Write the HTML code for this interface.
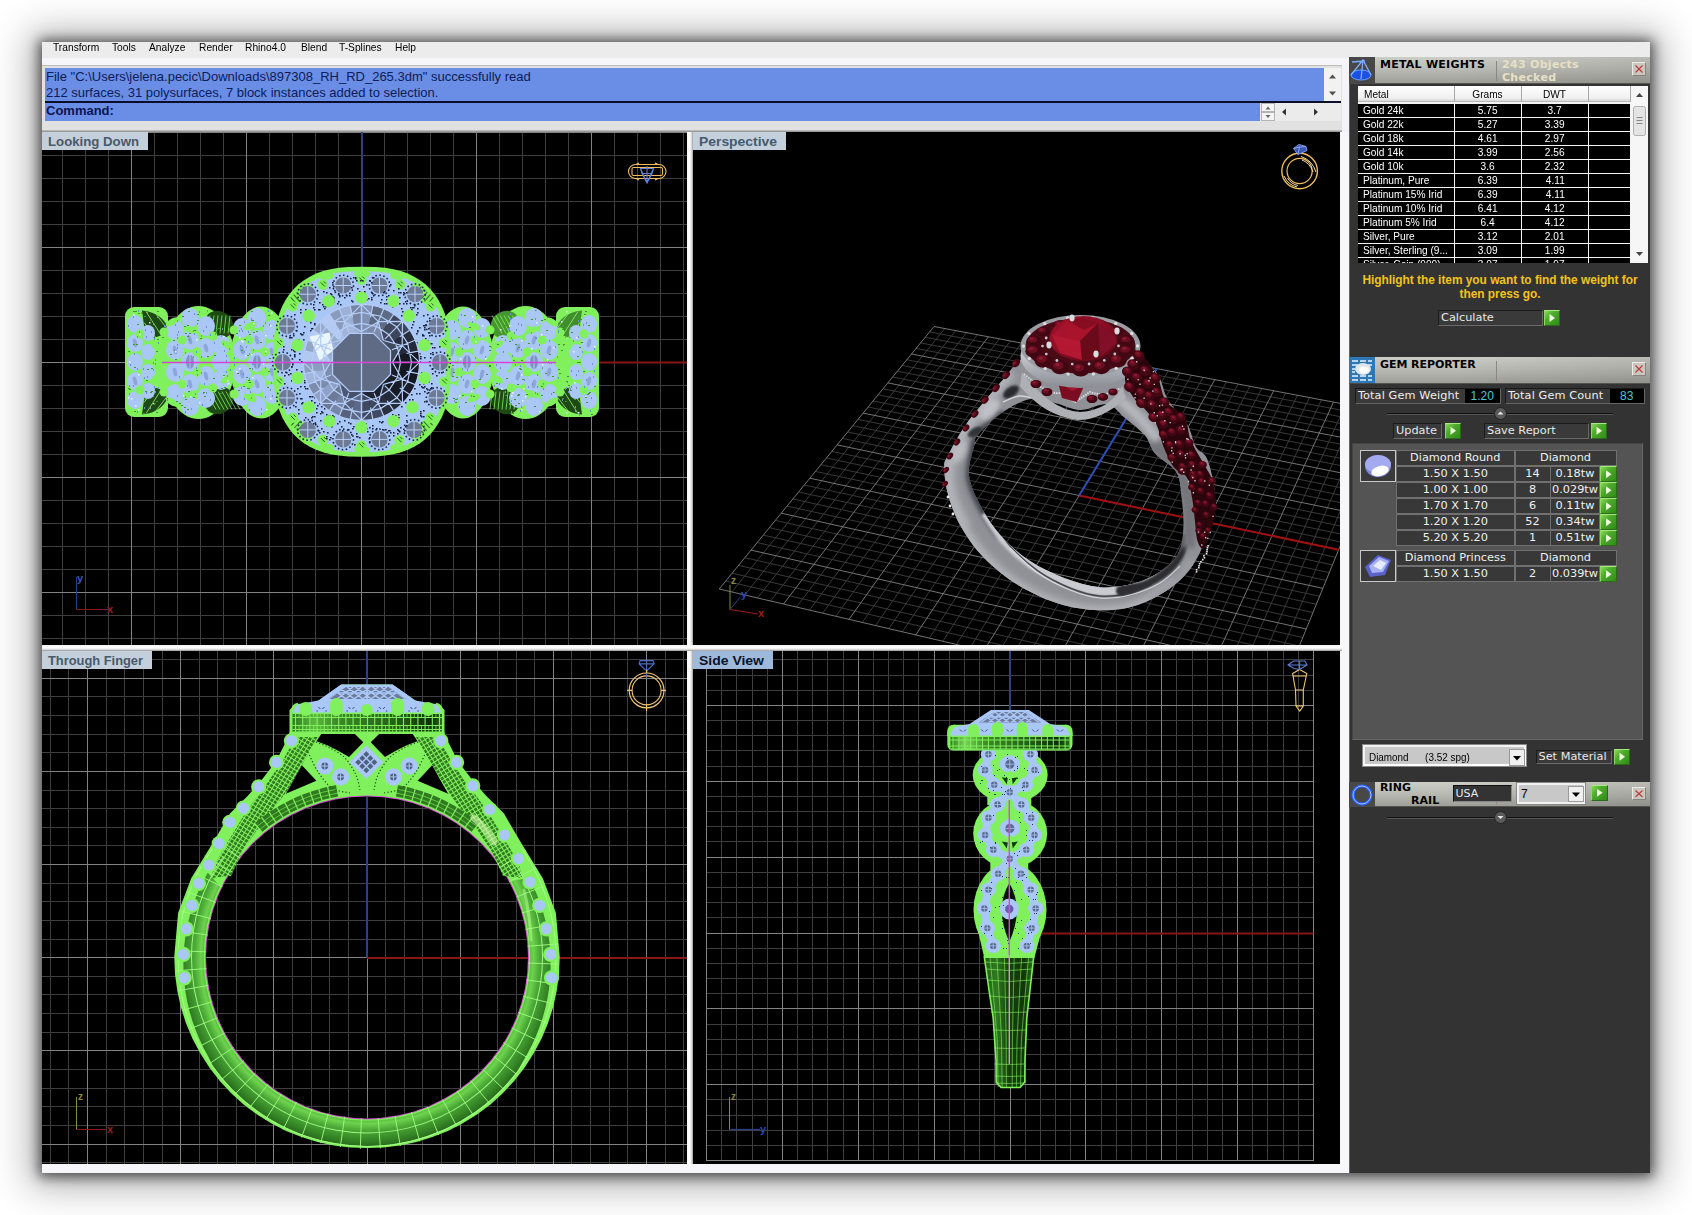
<!DOCTYPE html>
<html lang="en">
<head>
<meta charset="utf-8">
<title>Rhino - Matrix ring model</title>
<style>
*{box-sizing:border-box;margin:0;padding:0}
html,body{width:1692px;height:1215px;background:#fff;overflow:hidden}
body{font-family:"Liberation Sans",sans-serif;position:relative}
body>div,body>svg{position:absolute}
div>div,div>span.p{position:absolute}
#app{left:42px;top:42px;width:1608px;height:1131px;background:#f4f4f8;
 box-shadow:0 1px 12px 3px rgba(0,0,0,.62),0 2px 36px 12px rgba(0,0,0,.3)}
.menu span{position:absolute;top:-2.5px;font-size:11px;line-height:14px;color:#000;white-space:pre;transform-origin:0 50%;transform:scaleX(.93)}
.vp{background:#000;overflow:hidden}
.vplabel{position:absolute;left:0;top:0;height:18px;font-weight:bold;font-size:13px;line-height:18px;color:#44566a;background:#c3cfdb;padding-left:6px;white-space:pre}
.vplabel.act{background:#9fb9dd;color:#0a1020}
svg{display:block}
svg text{font-family:"Liberation Sans",sans-serif}
</style>
</head>
<body>
<div id="app"></div>
<div class="menu" style="left:42px;top:42px;width:1608px;height:16px;background:#ececec"><span style="left:11px">Transform</span><span style="left:70px">Tools</span><span style="left:107px">Analyze</span><span style="left:157px">Render</span><span style="left:203px">Rhino4.0</span><span style="left:259px">Blend</span><span style="left:297px">T-Splines</span><span style="left:353px">Help</span></div>
<div style="left:42px;top:58px;width:1307px;height:7px;background:#f6f6fa"></div>
<div style="left:42px;top:65px;width:1300px;height:66px;background:#e1e1e1;border-top:1px solid #bdbdbd"></div>
<div style="left:45px;top:68px;width:1279px;height:33px;background:#6a8ee6;color:#0c1c58;font-size:13px;line-height:16px;padding:1px 0 0 1px;white-space:pre">File "C:\Users\jelena.pecic\Downloads\897308_RH_RD_265.3dm" successfully read
212 surfaces, 31 polysurfaces, 7 block instances added to selection.</div>
<div style="left:1324px;top:68px;width:17px;height:33px;background:#f2f2f2"><svg width="17" height="33" viewBox="0 0 17 33"><path d="M5 10.500 L8.500 6.500 L12 10.500Z" fill="#505050"/><path d="M5 23.500 L12 23.500 L8.500 27.500Z" fill="#505050"/></svg></div>
<div style="left:45px;top:101px;width:1296px;height:1.5px;background:#0a0e2c"></div>
<div style="left:45px;top:102.5px;width:1215px;height:18.5px;background:#6a8ee6;color:#0a1450;font-size:13px;line-height:16px;font-weight:bold;padding:0 0 0 1px">Command:</div>
<div style="left:1260px;top:102.5px;width:81px;height:18.5px;background:#ebebeb"><svg width="81" height="19" viewBox="0 0 81 19">
<rect x="1.5" y="0.5" width="13" height="8" fill="#f4f4f4" stroke="#b4b4b4"/><rect x="1.5" y="9.5" width="13" height="8" fill="#f4f4f4" stroke="#b4b4b4"/>
<path d="M5.5 6.5 L8 3.5 L10.5 6.5Z" fill="#666"/><path d="M5.5 12 L10.5 12 L8 15Z" fill="#666"/>
<path d="M26 5.5 L26 12.5 L22 9Z" fill="#333"/><path d="M54 5.5 L54 12.5 L58 9Z" fill="#333"/>
<rect x="17" y="0" width="47" height="19" fill="none"/></svg></div>
<div style="left:42px;top:130px;width:1300px;height:2px;background:linear-gradient(#c8c8c8,#8a8a8a)"></div>
<div style="left:42px;top:132px;width:1307px;height:1040px;background:#f7f7fa"></div>
<div style="left:687px;top:132px;width:6px;height:1032px;background:linear-gradient(90deg,#f8f8f8 0,#fff 50%,#c8c8c8 85%,#9a9a9a 100%)"></div>
<div style="left:42px;top:645px;width:1300px;height:6px;background:linear-gradient(#f4f4f4 0,#fff 50%,#c8c8c8 85%,#8c8c8c 100%)"></div>
<svg style="left:42px;top:132px" width="645" height="513" viewBox="42 132 645 513">
<rect x="42" y="132" width="645" height="513" fill="#000"/>
<path d="M62.5 132V645M85.5 132V645M108.5 132V645M154.5 132V645M177.5 132V645M200.5 132V645M223.5 132V645M269.5 132V645M292.5 132V645M315.5 132V645M338.5 132V645M384.5 132V645M407.5 132V645M430.5 132V645M453.5 132V645M499.5 132V645M522.5 132V645M545.5 132V645M568.5 132V645M614.5 132V645M637.5 132V645M660.5 132V645M683.5 132V645M42 155.5H687M42 178.5H687M42 201.5H687M42 224.5H687M42 270.5H687M42 293.5H687M42 316.5H687M42 339.5H687M42 385.5H687M42 408.5H687M42 431.5H687M42 454.5H687M42 500.5H687M42 523.5H687M42 546.5H687M42 569.5H687M42 615.5H687M42 638.5H687" stroke="#3e3e3e" stroke-width="1" fill="none" shape-rendering="crispEdges"/>
<path d="M131.5 132V645M246.5 132V645M361.5 132V645M476.5 132V645M591.5 132V645M42 132.5H687M42 247.5H687M42 362.5H687M42 477.5H687M42 592.5H687" stroke="#838383" stroke-width="1" fill="none" shape-rendering="crispEdges"/>
<path d="M362 132V362" stroke="#2a4284" stroke-width="2"/><path d="M362 362.5H687" stroke="#861818" stroke-width="2"/><rect x="125" y="307" width="43" height="110" rx="9" fill="#80f05c"/><path d="M142 310.5 Q164 312.5 170 332.5 Q158 336.5 146 340.5 Z" fill="#1d4a12"/><path d="M146 311.5 L162 336.5 M154 311.5 L167 328.5 M144 322.5 L158 340.5" stroke="#9cf07c" stroke-width=".8" fill="none"/><path d="M142 414.5 Q164 412.5 170 392.5 Q158 388.5 146 384.5 Z" fill="#1d4a12"/><path d="M146 413.5 L162 388.5 M154 413.5 L167 396.5 M144 402.5 L158 384.5" stroke="#9cf07c" stroke-width=".8" fill="none"/><ellipse cx="198.5" cy="362.5" rx="36.5" ry="56.5" fill="#80f05c"/><ellipse cx="261" cy="362.5" rx="31" ry="56" fill="#80f05c"/><rect x="556" y="307" width="43" height="110" rx="9" fill="#80f05c"/><path d="M582 310.5 Q560 312.5 554 332.5 Q566 336.5 578 340.5 Z" fill="#3f8f2c"/><path d="M578 311.5 L562 336.5 M570 311.5 L557 328.5 M580 322.5 L566 340.5" stroke="#9cf07c" stroke-width=".8" fill="none"/><path d="M582 414.5 Q560 412.5 554 392.5 Q566 388.5 578 384.5 Z" fill="#1d4a12"/><path d="M578 413.5 L562 388.5 M570 413.5 L557 396.5 M580 402.5 L566 384.5" stroke="#9cf07c" stroke-width=".8" fill="none"/><ellipse cx="525.5" cy="362.5" rx="36.5" ry="56.5" fill="#80f05c"/><ellipse cx="463" cy="362.5" rx="31" ry="56" fill="#80f05c"/><ellipse cx="219" cy="324.5" rx="15" ry="13" fill="#1d4a12" transform="rotate(35 219 324.5)"/><path d="M206 315.5L204 333.5M210 315.5L208 333.5M214 315.5L212 333.5M218 315.5L216 333.5M222 315.5L220 333.5M226 315.5L224 333.5M230 315.5L228 333.5" stroke="#80f05c" stroke-width="1" opacity=".8"/><ellipse cx="219" cy="400.5" rx="15" ry="13" fill="#1d4a12" transform="rotate(-35 219 400.5)"/><path d="M206 391.5L216 409.5M210 391.5L220 409.5M214 391.5L224 409.5M218 391.5L228 409.5M222 391.5L232 409.5M226 391.5L236 409.5M230 391.5L240 409.5" stroke="#80f05c" stroke-width="1" opacity=".8"/><ellipse cx="505" cy="324.5" rx="15" ry="13" fill="#46962f" transform="rotate(-35 505 324.5)"/><path d="M492 315.5L502 333.5M496 315.5L506 333.5M500 315.5L510 333.5M504 315.5L514 333.5M508 315.5L518 333.5M512 315.5L522 333.5M516 315.5L526 333.5" stroke="#80f05c" stroke-width="1" opacity=".8"/><ellipse cx="505" cy="400.5" rx="15" ry="13" fill="#1d4a12" transform="rotate(35 505 400.5)"/><path d="M492 391.5L490 409.5M496 391.5L494 409.5M500 391.5L498 409.5M504 391.5L502 409.5M508 391.5L506 409.5M512 391.5L510 409.5M516 391.5L514 409.5" stroke="#80f05c" stroke-width="1" opacity=".8"/><ellipse cx="135" cy="324" rx="8" ry="9" fill="#a9c7f7"/><ellipse cx="135" cy="343" rx="8" ry="9" fill="#a9c7f7"/><ellipse cx="135" cy="362" rx="8" ry="9" fill="#a9c7f7"/><ellipse cx="135" cy="381" rx="8" ry="9" fill="#a9c7f7"/><ellipse cx="135" cy="400" rx="8" ry="9" fill="#a9c7f7"/><ellipse cx="148" cy="333" rx="7" ry="8" fill="#a9c7f7"/><ellipse cx="148" cy="352" rx="7" ry="8" fill="#a9c7f7"/><ellipse cx="148" cy="372" rx="7" ry="8" fill="#a9c7f7"/><ellipse cx="148" cy="391" rx="7" ry="8" fill="#a9c7f7"/><ellipse cx="175" cy="330" rx="9" ry="10" fill="#a9c7f7"/><ellipse cx="175" cy="350" rx="9" ry="10" fill="#a9c7f7"/><ellipse cx="175" cy="372" rx="9" ry="10" fill="#a9c7f7"/><ellipse cx="175" cy="394" rx="9" ry="10" fill="#a9c7f7"/><ellipse cx="190" cy="318" rx="9" ry="10" fill="#a9c7f7"/><ellipse cx="190" cy="340" rx="9" ry="10" fill="#a9c7f7"/><ellipse cx="190" cy="362" rx="9" ry="10" fill="#a9c7f7"/><ellipse cx="190" cy="384" rx="9" ry="10" fill="#a9c7f7"/><ellipse cx="190" cy="406" rx="9" ry="10" fill="#a9c7f7"/><ellipse cx="206" cy="326" rx="9" ry="10" fill="#a9c7f7"/><ellipse cx="206" cy="348" rx="9" ry="10" fill="#a9c7f7"/><ellipse cx="206" cy="376" rx="9" ry="10" fill="#a9c7f7"/><ellipse cx="206" cy="398" rx="9" ry="10" fill="#a9c7f7"/><ellipse cx="221" cy="345" rx="9" ry="10" fill="#a9c7f7"/><ellipse cx="221" cy="362" rx="9" ry="10" fill="#a9c7f7"/><ellipse cx="221" cy="380" rx="9" ry="10" fill="#a9c7f7"/><ellipse cx="242" cy="328" rx="9" ry="10" fill="#a9c7f7"/><ellipse cx="242" cy="350" rx="9" ry="10" fill="#a9c7f7"/><ellipse cx="242" cy="374" rx="9" ry="10" fill="#a9c7f7"/><ellipse cx="242" cy="396" rx="9" ry="10" fill="#a9c7f7"/><ellipse cx="257" cy="318" rx="9" ry="10" fill="#a9c7f7"/><ellipse cx="257" cy="340" rx="9" ry="10" fill="#a9c7f7"/><ellipse cx="257" cy="362" rx="9" ry="10" fill="#a9c7f7"/><ellipse cx="257" cy="384" rx="9" ry="10" fill="#a9c7f7"/><ellipse cx="257" cy="406" rx="9" ry="10" fill="#a9c7f7"/><ellipse cx="272" cy="330" rx="9" ry="10" fill="#a9c7f7"/><ellipse cx="272" cy="352" rx="9" ry="10" fill="#a9c7f7"/><ellipse cx="272" cy="372" rx="9" ry="10" fill="#a9c7f7"/><ellipse cx="272" cy="394" rx="9" ry="10" fill="#a9c7f7"/><ellipse cx="589" cy="324" rx="8" ry="9" fill="#a9c7f7"/><ellipse cx="589" cy="343" rx="8" ry="9" fill="#a9c7f7"/><ellipse cx="589" cy="362" rx="8" ry="9" fill="#a9c7f7"/><ellipse cx="589" cy="381" rx="8" ry="9" fill="#a9c7f7"/><ellipse cx="589" cy="400" rx="8" ry="9" fill="#a9c7f7"/><ellipse cx="576" cy="333" rx="7" ry="8" fill="#a9c7f7"/><ellipse cx="576" cy="352" rx="7" ry="8" fill="#a9c7f7"/><ellipse cx="576" cy="372" rx="7" ry="8" fill="#a9c7f7"/><ellipse cx="576" cy="391" rx="7" ry="8" fill="#a9c7f7"/><ellipse cx="549" cy="330" rx="9" ry="10" fill="#a9c7f7"/><ellipse cx="549" cy="350" rx="9" ry="10" fill="#a9c7f7"/><ellipse cx="549" cy="372" rx="9" ry="10" fill="#a9c7f7"/><ellipse cx="549" cy="394" rx="9" ry="10" fill="#a9c7f7"/><ellipse cx="534" cy="318" rx="9" ry="10" fill="#a9c7f7"/><ellipse cx="534" cy="340" rx="9" ry="10" fill="#a9c7f7"/><ellipse cx="534" cy="362" rx="9" ry="10" fill="#a9c7f7"/><ellipse cx="534" cy="384" rx="9" ry="10" fill="#a9c7f7"/><ellipse cx="534" cy="406" rx="9" ry="10" fill="#a9c7f7"/><ellipse cx="518" cy="326" rx="9" ry="10" fill="#a9c7f7"/><ellipse cx="518" cy="348" rx="9" ry="10" fill="#a9c7f7"/><ellipse cx="518" cy="376" rx="9" ry="10" fill="#a9c7f7"/><ellipse cx="518" cy="398" rx="9" ry="10" fill="#a9c7f7"/><ellipse cx="503" cy="345" rx="9" ry="10" fill="#a9c7f7"/><ellipse cx="503" cy="362" rx="9" ry="10" fill="#a9c7f7"/><ellipse cx="503" cy="380" rx="9" ry="10" fill="#a9c7f7"/><ellipse cx="482" cy="328" rx="9" ry="10" fill="#a9c7f7"/><ellipse cx="482" cy="350" rx="9" ry="10" fill="#a9c7f7"/><ellipse cx="482" cy="374" rx="9" ry="10" fill="#a9c7f7"/><ellipse cx="482" cy="396" rx="9" ry="10" fill="#a9c7f7"/><ellipse cx="467" cy="318" rx="9" ry="10" fill="#a9c7f7"/><ellipse cx="467" cy="340" rx="9" ry="10" fill="#a9c7f7"/><ellipse cx="467" cy="362" rx="9" ry="10" fill="#a9c7f7"/><ellipse cx="467" cy="384" rx="9" ry="10" fill="#a9c7f7"/><ellipse cx="467" cy="406" rx="9" ry="10" fill="#a9c7f7"/><ellipse cx="452" cy="330" rx="9" ry="10" fill="#a9c7f7"/><ellipse cx="452" cy="352" rx="9" ry="10" fill="#a9c7f7"/><ellipse cx="452" cy="372" rx="9" ry="10" fill="#a9c7f7"/><ellipse cx="452" cy="394" rx="9" ry="10" fill="#a9c7f7"/><ellipse cx="162" cy="362" rx="4.5" ry="4.5" fill="#80f05c"/><ellipse cx="182" cy="340" rx="4.5" ry="4.5" fill="#80f05c"/><ellipse cx="182" cy="384" rx="4.5" ry="4.5" fill="#80f05c"/><ellipse cx="197" cy="352" rx="4.5" ry="4.5" fill="#80f05c"/><ellipse cx="197" cy="372" rx="4.5" ry="4.5" fill="#80f05c"/><ellipse cx="213" cy="336" rx="4.5" ry="4.5" fill="#80f05c"/><ellipse cx="213" cy="388" rx="4.5" ry="4.5" fill="#80f05c"/><ellipse cx="164" cy="332" rx="4.5" ry="4.5" fill="#80f05c"/><ellipse cx="164" cy="392" rx="4.5" ry="4.5" fill="#80f05c"/><ellipse cx="234" cy="362" rx="4.5" ry="4.5" fill="#80f05c"/><ellipse cx="249" cy="340" rx="4.5" ry="4.5" fill="#80f05c"/><ellipse cx="249" cy="384" rx="4.5" ry="4.5" fill="#80f05c"/><ellipse cx="265" cy="352" rx="4.5" ry="4.5" fill="#80f05c"/><ellipse cx="265" cy="372" rx="4.5" ry="4.5" fill="#80f05c"/><ellipse cx="234" cy="330" rx="4.5" ry="4.5" fill="#80f05c"/><ellipse cx="234" cy="394" rx="4.5" ry="4.5" fill="#80f05c"/><ellipse cx="140" cy="334" rx="4.5" ry="4.5" fill="#80f05c"/><ellipse cx="140" cy="390" rx="4.5" ry="4.5" fill="#80f05c"/><ellipse cx="156" cy="345" rx="4.5" ry="4.5" fill="#80f05c"/><ellipse cx="156" cy="380" rx="4.5" ry="4.5" fill="#80f05c"/><ellipse cx="172" cy="322" rx="7" ry="3.2" fill="#80f05c" transform="rotate(-30 172 322)"/><ellipse cx="172" cy="402" rx="7" ry="3.2" fill="#80f05c" transform="rotate(30 172 402)"/><ellipse cx="192" cy="330" rx="7" ry="3.2" fill="#80f05c" transform="rotate(20 192 330)"/><ellipse cx="192" cy="394" rx="7" ry="3.2" fill="#80f05c" transform="rotate(-20 192 394)"/><ellipse cx="250" cy="326" rx="7" ry="3.2" fill="#80f05c" transform="rotate(-25 250 326)"/><ellipse cx="250" cy="398" rx="7" ry="3.2" fill="#80f05c" transform="rotate(25 250 398)"/><ellipse cx="227" cy="345" rx="7" ry="3.2" fill="#80f05c" transform="rotate(30 227 345)"/><ellipse cx="227" cy="379" rx="7" ry="3.2" fill="#80f05c" transform="rotate(-30 227 379)"/><ellipse cx="175" cy="350" rx="2" ry="4.5" fill="#8da6d8" transform="rotate(-15 175 350)"/><ellipse cx="175" cy="372" rx="2" ry="4.5" fill="#8da6d8" transform="rotate(-15 175 372)"/><ellipse cx="190" cy="340" rx="2" ry="4.5" fill="#8da6d8" transform="rotate(-15 190 340)"/><ellipse cx="190" cy="384" rx="2" ry="4.5" fill="#8da6d8" transform="rotate(-15 190 384)"/><ellipse cx="206" cy="348" rx="2" ry="4.5" fill="#8da6d8" transform="rotate(-15 206 348)"/><ellipse cx="206" cy="376" rx="2" ry="4.5" fill="#8da6d8" transform="rotate(-15 206 376)"/><ellipse cx="242" cy="350" rx="2" ry="4.5" fill="#8da6d8" transform="rotate(-15 242 350)"/><ellipse cx="242" cy="374" rx="2" ry="4.5" fill="#8da6d8" transform="rotate(-15 242 374)"/><ellipse cx="257" cy="340" rx="2" ry="4.5" fill="#8da6d8" transform="rotate(-15 257 340)"/><ellipse cx="257" cy="384" rx="2" ry="4.5" fill="#8da6d8" transform="rotate(-15 257 384)"/><ellipse cx="272" cy="352" rx="2" ry="4.5" fill="#8da6d8" transform="rotate(-15 272 352)"/><ellipse cx="272" cy="372" rx="2" ry="4.5" fill="#8da6d8" transform="rotate(-15 272 372)"/><ellipse cx="135" cy="343" rx="2" ry="4.5" fill="#8da6d8" transform="rotate(-15 135 343)"/><ellipse cx="135" cy="381" rx="2" ry="4.5" fill="#8da6d8" transform="rotate(-15 135 381)"/><ellipse cx="190" cy="362" rx="4" ry="7" fill="#7f94bf"/><path d="M190 355V369" stroke="#a9c7f7" stroke-width="1"/><ellipse cx="257" cy="362" rx="4" ry="7" fill="#7f94bf"/><path d="M257 355V369" stroke="#a9c7f7" stroke-width="1"/><ellipse cx="562" cy="362" rx="4.5" ry="4.5" fill="#80f05c"/><ellipse cx="542" cy="340" rx="4.5" ry="4.5" fill="#80f05c"/><ellipse cx="542" cy="384" rx="4.5" ry="4.5" fill="#80f05c"/><ellipse cx="527" cy="352" rx="4.5" ry="4.5" fill="#80f05c"/><ellipse cx="527" cy="372" rx="4.5" ry="4.5" fill="#80f05c"/><ellipse cx="511" cy="336" rx="4.5" ry="4.5" fill="#80f05c"/><ellipse cx="511" cy="388" rx="4.5" ry="4.5" fill="#80f05c"/><ellipse cx="560" cy="332" rx="4.5" ry="4.5" fill="#80f05c"/><ellipse cx="560" cy="392" rx="4.5" ry="4.5" fill="#80f05c"/><ellipse cx="490" cy="362" rx="4.5" ry="4.5" fill="#80f05c"/><ellipse cx="475" cy="340" rx="4.5" ry="4.5" fill="#80f05c"/><ellipse cx="475" cy="384" rx="4.5" ry="4.5" fill="#80f05c"/><ellipse cx="459" cy="352" rx="4.5" ry="4.5" fill="#80f05c"/><ellipse cx="459" cy="372" rx="4.5" ry="4.5" fill="#80f05c"/><ellipse cx="490" cy="330" rx="4.5" ry="4.5" fill="#80f05c"/><ellipse cx="490" cy="394" rx="4.5" ry="4.5" fill="#80f05c"/><ellipse cx="584" cy="334" rx="4.5" ry="4.5" fill="#80f05c"/><ellipse cx="584" cy="390" rx="4.5" ry="4.5" fill="#80f05c"/><ellipse cx="568" cy="345" rx="4.5" ry="4.5" fill="#80f05c"/><ellipse cx="568" cy="380" rx="4.5" ry="4.5" fill="#80f05c"/><ellipse cx="552" cy="322" rx="7" ry="3.2" fill="#80f05c" transform="rotate(30 552 322)"/><ellipse cx="552" cy="402" rx="7" ry="3.2" fill="#80f05c" transform="rotate(-30 552 402)"/><ellipse cx="532" cy="330" rx="7" ry="3.2" fill="#80f05c" transform="rotate(-20 532 330)"/><ellipse cx="532" cy="394" rx="7" ry="3.2" fill="#80f05c" transform="rotate(20 532 394)"/><ellipse cx="474" cy="326" rx="7" ry="3.2" fill="#80f05c" transform="rotate(25 474 326)"/><ellipse cx="474" cy="398" rx="7" ry="3.2" fill="#80f05c" transform="rotate(-25 474 398)"/><ellipse cx="497" cy="345" rx="7" ry="3.2" fill="#80f05c" transform="rotate(-30 497 345)"/><ellipse cx="497" cy="379" rx="7" ry="3.2" fill="#80f05c" transform="rotate(30 497 379)"/><ellipse cx="549" cy="350" rx="2" ry="4.5" fill="#8da6d8" transform="rotate(15 549 350)"/><ellipse cx="549" cy="372" rx="2" ry="4.5" fill="#8da6d8" transform="rotate(15 549 372)"/><ellipse cx="534" cy="340" rx="2" ry="4.5" fill="#8da6d8" transform="rotate(15 534 340)"/><ellipse cx="534" cy="384" rx="2" ry="4.5" fill="#8da6d8" transform="rotate(15 534 384)"/><ellipse cx="518" cy="348" rx="2" ry="4.5" fill="#8da6d8" transform="rotate(15 518 348)"/><ellipse cx="518" cy="376" rx="2" ry="4.5" fill="#8da6d8" transform="rotate(15 518 376)"/><ellipse cx="482" cy="350" rx="2" ry="4.5" fill="#8da6d8" transform="rotate(15 482 350)"/><ellipse cx="482" cy="374" rx="2" ry="4.5" fill="#8da6d8" transform="rotate(15 482 374)"/><ellipse cx="467" cy="340" rx="2" ry="4.5" fill="#8da6d8" transform="rotate(15 467 340)"/><ellipse cx="467" cy="384" rx="2" ry="4.5" fill="#8da6d8" transform="rotate(15 467 384)"/><ellipse cx="452" cy="352" rx="2" ry="4.5" fill="#8da6d8" transform="rotate(15 452 352)"/><ellipse cx="452" cy="372" rx="2" ry="4.5" fill="#8da6d8" transform="rotate(15 452 372)"/><ellipse cx="589" cy="343" rx="2" ry="4.5" fill="#8da6d8" transform="rotate(15 589 343)"/><ellipse cx="589" cy="381" rx="2" ry="4.5" fill="#8da6d8" transform="rotate(15 589 381)"/><ellipse cx="534" cy="362" rx="4" ry="7" fill="#7f94bf"/><path d="M534 355V369" stroke="#a9c7f7" stroke-width="1"/><ellipse cx="467" cy="362" rx="4" ry="7" fill="#7f94bf"/><path d="M467 355V369" stroke="#a9c7f7" stroke-width="1"/><clipPath id="shk"><rect x="126" y="308" width="42" height="108" rx="9"/><rect x="556" y="308" width="42" height="108" rx="9"/><ellipse cx="198.500" cy="362.500" rx="35" ry="55"/><ellipse cx="525.500" cy="362.500" rx="35" ry="55"/><ellipse cx="261" cy="362.500" rx="30" ry="54"/><ellipse cx="463" cy="362.500" rx="30" ry="54"/></clipPath><g clip-path="url(#shk)"><path d="M155 363h1v2h-1zM571 370h1v2h-1zM263 325h1v2h-1zM272 395h1v2h-1zM157 316h1v2h-1zM499 383h1v2h-1zM537 386h1v2h-1zM586 322h1v2h-1zM512 339h1v2h-1zM188 335h1v2h-1zM535 318h1v2h-1zM511 400h1v2h-1zM541 410h1v2h-1zM210 334h1v2h-1zM250 310h1v2h-1zM537 393h1v2h-1zM159 331h1v2h-1zM128 325h1v2h-1zM537 374h1v2h-1zM246 346h1v2h-1zM168 320h1v2h-1zM251 397h1v2h-1zM196 367h1v2h-1zM532 383h1v2h-1zM234 364h1v2h-1zM141 312h1v2h-1zM590 410h1v2h-1zM231 333h1v2h-1zM582 351h1v2h-1zM571 386h1v2h-1zM586 379h1v2h-1zM514 332h1v2h-1zM249 353h1v2h-1zM129 393h1v2h-1zM483 405h1v2h-1zM521 324h1v2h-1zM494 404h1v2h-1zM463 379h1v2h-1zM541 411h1v2h-1zM591 397h1v2h-1zM137 368h1v2h-1zM177 337h1v2h-1zM492 338h1v2h-1zM511 337h1v2h-1zM167 399h1v2h-1zM531 357h1v2h-1zM239 321h1v2h-1zM151 331h1v2h-1zM270 389h1v2h-1zM177 395h1v2h-1zM449 413h1v2h-1zM153 323h1v2h-1zM474 336h1v2h-1zM201 356h1v2h-1zM242 411h1v2h-1zM251 319h1v2h-1zM147 312h1v2h-1zM539 350h1v2h-1zM471 395h1v2h-1zM235 313h1v2h-1zM158 387h1v2h-1zM164 325h1v2h-1zM133 316h1v2h-1zM511 411h1v2h-1zM226 371h1v2h-1zM543 383h1v2h-1zM548 361h1v2h-1zM269 324h1v2h-1zM549 340h1v2h-1zM261 408h1v2h-1zM252 363h1v2h-1zM150 407h1v2h-1zM249 378h1v2h-1zM206 326h1v2h-1zM551 362h1v2h-1zM552 414h1v2h-1zM193 330h1v2h-1zM543 388h1v2h-1zM531 332h1v2h-1zM244 351h1v2h-1zM244 321h1v2h-1zM146 392h1v2h-1zM558 377h1v2h-1zM454 321h1v2h-1zM234 313h1v2h-1zM215 333h1v2h-1zM196 351h1v2h-1zM583 324h1v2h-1zM563 344h1v2h-1zM565 388h1v2h-1zM207 310h1v2h-1zM185 411h1v2h-1zM512 355h1v2h-1zM558 330h1v2h-1zM547 313h1v2h-1zM507 390h1v2h-1zM576 374h1v2h-1zM463 343h1v2h-1zM575 410h1v2h-1zM494 318h1v2h-1zM480 335h1v2h-1zM143 368h1v2h-1zM251 318h1v2h-1zM524 379h1v2h-1zM221 335h1v2h-1zM592 363h1v2h-1zM521 406h1v2h-1zM265 322h1v2h-1zM491 409h1v2h-1zM229 348h1v2h-1zM214 342h1v2h-1zM500 367h1v2h-1zM204 383h1v2h-1zM274 369h1v2h-1zM594 348h1v2h-1zM468 331h1v2h-1zM504 411h1v2h-1zM203 392h1v2h-1zM516 329h1v2h-1zM145 398h1v2h-1zM188 355h1v2h-1zM147 376h1v2h-1zM153 362h1v2h-1zM575 406h1v2h-1zM496 407h1v2h-1zM202 404h1v2h-1zM558 331h1v2h-1zM145 329h1v2h-1zM206 392h1v2h-1zM485 356h1v2h-1zM274 310h1v2h-1zM197 374h1v2h-1zM138 310h1v2h-1zM177 347h1v2h-1zM191 408h1v2h-1zM535 392h1v2h-1zM566 387h1v2h-1zM155 391h1v2h-1zM508 328h1v2h-1zM494 385h1v2h-1zM475 357h1v2h-1zM177 334h1v2h-1zM252 368h1v2h-1zM496 364h1v2h-1zM229 402h1v2h-1zM570 388h1v2h-1zM539 344h1v2h-1zM454 400h1v2h-1zM467 369h1v2h-1zM227 375h1v2h-1zM554 325h1v2h-1zM177 407h1v2h-1zM194 313h1v2h-1zM511 403h1v2h-1zM178 331h1v2h-1zM223 343h1v2h-1zM137 336h1v2h-1zM462 348h1v2h-1zM207 310h1v2h-1zM484 412h1v2h-1zM249 409h1v2h-1zM179 376h1v2h-1zM139 331h1v2h-1zM549 362h1v2h-1zM480 377h1v2h-1zM239 330h1v2h-1zM457 398h1v2h-1zM201 335h1v2h-1zM584 386h1v2h-1zM578 320h1v2h-1zM224 350h1v2h-1zM474 405h1v2h-1zM274 375h1v2h-1zM461 376h1v2h-1zM515 364h1v2h-1zM185 413h1v2h-1zM154 338h1v2h-1zM134 353h1v2h-1zM454 346h1v2h-1zM503 351h1v2h-1zM265 367h1v2h-1zM253 349h1v2h-1zM129 385h1v2h-1zM562 399h1v2h-1zM175 324h1v2h-1zM491 346h1v2h-1zM551 393h1v2h-1zM496 398h1v2h-1zM155 359h1v2h-1zM521 349h1v2h-1zM226 355h1v2h-1zM265 396h1v2h-1zM542 367h1v2h-1zM268 310h1v2h-1zM484 320h1v2h-1zM248 341h1v2h-1zM153 369h1v2h-1zM557 356h1v2h-1zM199 311h1v2h-1zM241 387h1v2h-1zM528 386h1v2h-1zM510 318h1v2h-1zM195 393h1v2h-1zM505 339h1v2h-1zM509 403h1v2h-1zM555 346h1v2h-1zM505 391h1v2h-1zM201 372h1v2h-1zM250 391h1v2h-1zM578 336h1v2h-1zM222 328h1v2h-1zM579 414h1v2h-1zM146 336h1v2h-1zM567 381h1v2h-1zM177 344h1v2h-1zM186 360h1v2h-1zM133 385h1v2h-1zM144 407h1v2h-1zM193 356h1v2h-1zM194 333h1v2h-1zM462 368h1v2h-1zM535 337h1v2h-1zM226 360h1v2h-1zM248 331h1v2h-1zM154 386h1v2h-1zM230 369h1v2h-1zM220 318h1v2h-1zM153 395h1v2h-1zM536 337h1v2h-1zM517 348h1v2h-1zM130 364h1v2h-1zM137 411h1v2h-1zM213 320h1v2h-1zM510 313h1v2h-1zM455 330h1v2h-1zM185 352h1v2h-1zM520 365h1v2h-1zM568 391h1v2h-1zM240 345h1v2h-1zM509 399h1v2h-1zM565 336h1v2h-1zM144 377h1v2h-1zM573 340h1v2h-1zM197 323h1v2h-1zM265 352h1v2h-1zM273 335h1v2h-1zM261 413h1v2h-1zM489 326h1v2h-1zM535 356h1v2h-1zM472 321h1v2h-1zM576 387h1v2h-1zM459 406h1v2h-1zM578 370h1v2h-1zM520 410h1v2h-1zM174 349h1v2h-1zM509 327h1v2h-1zM593 376h1v2h-1zM271 382h1v2h-1zM594 370h1v2h-1zM177 320h1v2h-1zM241 328h1v2h-1zM215 412h1v2h-1zM185 396h1v2h-1zM242 330h1v2h-1zM458 319h1v2h-1zM518 323h1v2h-1zM519 394h1v2h-1zM234 357h1v2h-1zM243 373h1v2h-1zM210 399h1v2h-1zM158 342h1v2h-1zM187 385h1v2h-1zM189 339h1v2h-1zM244 398h1v2h-1zM461 314h1v2h-1zM203 330h1v2h-1zM273 377h1v2h-1z" fill="#6f8fd0"/><path d="M482 325h1.5v1.5h-1.5zM274 383h1.5v1.5h-1.5zM521 409h1.5v1.5h-1.5zM574 382h1.5v1.5h-1.5zM138 409h1.5v1.5h-1.5zM265 335h1.5v1.5h-1.5zM553 347h1.5v1.5h-1.5zM495 321h1.5v1.5h-1.5zM573 351h1.5v1.5h-1.5zM253 323h1.5v1.5h-1.5zM241 340h1.5v1.5h-1.5zM578 412h1.5v1.5h-1.5zM236 371h1.5v1.5h-1.5zM501 388h1.5v1.5h-1.5zM475 341h1.5v1.5h-1.5zM566 311h1.5v1.5h-1.5zM190 396h1.5v1.5h-1.5zM129 361h1.5v1.5h-1.5zM555 408h1.5v1.5h-1.5zM239 337h1.5v1.5h-1.5zM547 359h1.5v1.5h-1.5zM485 358h1.5v1.5h-1.5zM271 312h1.5v1.5h-1.5zM266 409h1.5v1.5h-1.5zM139 334h1.5v1.5h-1.5zM245 355h1.5v1.5h-1.5zM521 340h1.5v1.5h-1.5zM199 402h1.5v1.5h-1.5zM223 336h1.5v1.5h-1.5zM175 351h1.5v1.5h-1.5zM196 339h1.5v1.5h-1.5zM561 321h1.5v1.5h-1.5zM138 374h1.5v1.5h-1.5zM471 391h1.5v1.5h-1.5zM218 413h1.5v1.5h-1.5zM509 325h1.5v1.5h-1.5zM223 375h1.5v1.5h-1.5zM550 314h1.5v1.5h-1.5zM523 388h1.5v1.5h-1.5zM472 316h1.5v1.5h-1.5zM500 329h1.5v1.5h-1.5zM228 383h1.5v1.5h-1.5zM541 334h1.5v1.5h-1.5zM584 314h1.5v1.5h-1.5zM511 395h1.5v1.5h-1.5zM242 341h1.5v1.5h-1.5zM237 324h1.5v1.5h-1.5zM131 398h1.5v1.5h-1.5zM531 348h1.5v1.5h-1.5zM227 380h1.5v1.5h-1.5zM512 392h1.5v1.5h-1.5zM183 395h1.5v1.5h-1.5zM566 412h1.5v1.5h-1.5zM251 354h1.5v1.5h-1.5zM542 364h1.5v1.5h-1.5zM553 316h1.5v1.5h-1.5zM576 337h1.5v1.5h-1.5zM128 397h1.5v1.5h-1.5zM459 395h1.5v1.5h-1.5zM522 400h1.5v1.5h-1.5zM135 405h1.5v1.5h-1.5zM149 322h1.5v1.5h-1.5zM241 319h1.5v1.5h-1.5zM521 374h1.5v1.5h-1.5zM460 358h1.5v1.5h-1.5zM239 368h1.5v1.5h-1.5zM525 396h1.5v1.5h-1.5zM265 351h1.5v1.5h-1.5zM496 399h1.5v1.5h-1.5zM270 325h1.5v1.5h-1.5zM133 314h1.5v1.5h-1.5zM539 411h1.5v1.5h-1.5zM594 346h1.5v1.5h-1.5zM585 396h1.5v1.5h-1.5zM263 363h1.5v1.5h-1.5zM270 398h1.5v1.5h-1.5zM252 377h1.5v1.5h-1.5zM153 403h1.5v1.5h-1.5zM225 409h1.5v1.5h-1.5zM536 322h1.5v1.5h-1.5z" fill="#eef6ff"/><path d="M170 354h2v1h-2zM185 333h2v1h-2zM584 314h2v1h-2zM146 380h2v1h-2zM456 377h2v1h-2zM182 316h2v1h-2zM153 404h2v1h-2zM185 399h2v1h-2zM489 365h2v1h-2zM507 413h2v1h-2zM505 395h2v1h-2zM249 382h2v1h-2zM223 375h2v1h-2zM521 360h2v1h-2zM502 318h2v1h-2zM553 392h2v1h-2zM497 344h2v1h-2zM187 325h2v1h-2zM505 325h2v1h-2zM134 411h2v1h-2zM244 339h2v1h-2zM455 402h2v1h-2zM249 368h2v1h-2zM240 317h2v1h-2zM136 344h2v1h-2zM589 392h2v1h-2zM558 369h2v1h-2zM169 316h2v1h-2zM567 376h2v1h-2zM245 311h2v1h-2zM517 384h2v1h-2zM167 398h2v1h-2zM479 379h2v1h-2zM588 325h2v1h-2zM518 403h2v1h-2zM518 394h2v1h-2zM519 368h2v1h-2zM162 337h2v1h-2zM224 387h2v1h-2zM486 374h2v1h-2zM546 330h2v1h-2zM253 332h2v1h-2zM128 388h2v1h-2zM184 407h2v1h-2zM150 320h2v1h-2zM541 395h2v1h-2zM464 315h2v1h-2zM267 387h2v1h-2zM157 339h2v1h-2zM186 362h2v1h-2zM574 399h2v1h-2zM138 313h2v1h-2zM128 351h2v1h-2zM514 399h2v1h-2zM568 385h2v1h-2zM187 336h2v1h-2zM269 358h2v1h-2zM243 410h2v1h-2zM248 380h2v1h-2zM220 393h2v1h-2zM581 342h2v1h-2zM236 333h2v1h-2zM156 351h2v1h-2zM541 386h2v1h-2zM144 316h2v1h-2zM248 388h2v1h-2zM129 389h2v1h-2zM562 329h2v1h-2zM473 396h2v1h-2zM586 402h2v1h-2zM506 378h2v1h-2zM175 359h2v1h-2zM583 371h2v1h-2zM133 344h2v1h-2zM260 342h2v1h-2zM549 354h2v1h-2zM134 367h2v1h-2zM553 319h2v1h-2zM187 409h2v1h-2zM561 350h2v1h-2zM243 386h2v1h-2zM147 369h2v1h-2zM238 390h2v1h-2zM573 324h2v1h-2zM594 386h2v1h-2zM566 381h2v1h-2zM541 320h2v1h-2zM501 337h2v1h-2zM476 315h2v1h-2zM246 377h2v1h-2zM189 333h2v1h-2zM197 320h2v1h-2zM251 311h2v1h-2zM194 330h2v1h-2zM268 315h2v1h-2zM453 398h2v1h-2zM249 334h2v1h-2zM552 376h2v1h-2zM452 376h2v1h-2zM534 406h2v1h-2zM144 399h2v1h-2zM174 320h2v1h-2zM579 362h2v1h-2zM489 346h2v1h-2zM531 319h2v1h-2zM496 383h2v1h-2zM544 319h2v1h-2zM522 379h2v1h-2zM207 356h2v1h-2zM588 393h2v1h-2zM452 362h2v1h-2zM465 402h2v1h-2zM455 399h2v1h-2zM213 378h2v1h-2zM203 392h2v1h-2zM463 363h2v1h-2zM571 332h2v1h-2zM233 387h2v1h-2zM188 391h2v1h-2zM579 347h2v1h-2zM518 347h2v1h-2zM515 405h2v1h-2zM193 397h2v1h-2zM135 311h2v1h-2zM545 373h2v1h-2zM452 365h2v1h-2zM577 317h2v1h-2zM563 344h2v1h-2zM548 313h2v1h-2zM268 371h2v1h-2zM495 314h2v1h-2zM559 373h2v1h-2zM497 405h2v1h-2zM453 372h2v1h-2zM145 391h2v1h-2zM580 319h2v1h-2zM188 311h2v1h-2zM151 391h2v1h-2zM246 411h2v1h-2zM133 311h2v1h-2zM469 327h2v1h-2zM495 409h2v1h-2zM156 412h2v1h-2zM515 344h2v1h-2zM585 397h2v1h-2zM272 354h2v1h-2zM517 395h2v1h-2zM526 394h2v1h-2zM221 388h2v1h-2zM237 373h2v1h-2zM247 388h2v1h-2zM218 328h2v1h-2zM197 314h2v1h-2zM143 413h2v1h-2zM570 390h2v1h-2zM151 368h2v1h-2zM550 404h2v1h-2zM150 392h2v1h-2zM154 325h2v1h-2zM239 325h2v1h-2zM565 401h2v1h-2zM562 398h2v1h-2zM513 360h2v1h-2zM200 338h2v1h-2zM550 321h2v1h-2zM154 403h2v1h-2zM591 414h2v1h-2zM173 340h2v1h-2zM585 311h2v1h-2zM214 355h2v1h-2zM212 390h2v1h-2zM256 331h2v1h-2zM222 316h2v1h-2zM462 395h2v1h-2zM156 401h2v1h-2zM176 401h2v1h-2zM196 370h2v1h-2zM204 396h2v1h-2zM587 394h2v1h-2zM137 324h2v1h-2zM491 408h2v1h-2zM506 402h2v1h-2zM473 388h2v1h-2zM535 310h2v1h-2zM494 401h2v1h-2zM558 344h2v1h-2zM489 366h2v1h-2zM179 403h2v1h-2zM512 413h2v1h-2zM216 329h2v1h-2zM184 326h2v1h-2zM157 311h2v1h-2zM252 320h2v1h-2zM577 356h2v1h-2zM244 314h2v1h-2zM528 343h2v1h-2zM509 341h2v1h-2zM577 362h2v1h-2zM241 350h2v1h-2zM231 342h2v1h-2zM238 313h2v1h-2zM458 337h2v1h-2zM489 350h2v1h-2zM490 402h2v1h-2zM181 405h2v1h-2zM520 369h2v1h-2zM247 355h2v1h-2z" fill="#3d9a2a"/></g><path d="M451 361.7L450.7 376.2L450 386.4L448.7 395.3L446.8 403.3L444.5 410.7L441.7 417.4L438.3 423.6L434.5 429.3L430.2 434.5L425.4 439.1L420 443.2L414.2 446.7L407.9 449.8L401 452.3L393.5 454.2L385.1 455.6L375.6 456.4L362 456.7L348.4 456.4L338.9 455.6L330.5 454.2L323 452.3L316.1 449.8L309.8 446.7L304 443.2L298.6 439.1L293.8 434.5L289.5 429.3L285.7 423.6L282.3 417.4L279.5 410.7L277.2 403.3L275.3 395.3L274 386.4L273.3 376.2L273 361.7L273.3 347.2L274 337L275.3 328.1L277.2 320.1L279.5 312.7L282.3 306L285.7 299.8L289.5 294.1L293.8 288.9L298.6 284.3L304 280.2L309.8 276.7L316.1 273.6L323 271.1L330.5 269.2L338.9 267.8L348.4 267L362 266.7L375.6 267L385.1 267.8L393.5 269.2L401 271.1L407.9 273.6L414.2 276.7L420 280.2L425.4 284.3L430.2 288.9L434.5 294.1L438.3 299.8L441.7 306L444.5 312.7L446.8 320.1L448.7 328.1L450 337L450.7 347.2Z" fill="#80f05c"/><path d="M446.5 361.7L446.2 375.1L445.5 384.6L444.2 393.1L442.5 400.7L440.2 407.8L437.5 414.2L434.3 420.2L430.6 425.7L426.4 430.7L421.7 435.1L416.6 439.1L411.1 442.5L405 445.5L398.4 447.9L391.3 449.8L383.4 451.1L374.5 451.9L362 452.2L349.5 451.9L340.6 451.1L332.7 449.8L325.6 447.9L319 445.5L312.9 442.5L307.4 439.1L302.3 435.1L297.6 430.7L293.4 425.7L289.7 420.2L286.5 414.2L283.8 407.8L281.5 400.7L279.8 393.1L278.5 384.6L277.8 375.1L277.5 361.7L277.8 348.3L278.5 338.8L279.8 330.3L281.5 322.7L283.8 315.6L286.5 309.2L289.7 303.2L293.4 297.7L297.6 292.7L302.3 288.3L307.4 284.3L312.9 280.9L319 277.9L325.6 275.5L332.7 273.6L340.6 272.3L349.5 271.5L362 271.2L374.5 271.5L383.4 272.3L391.3 273.6L398.4 275.5L405 277.9L411.1 280.9L416.6 284.3L421.7 288.3L426.4 292.7L430.6 297.7L434.3 303.2L437.5 309.2L440.2 315.6L442.5 322.7L444.2 330.3L445.5 338.8L446.2 348.3Z" fill="#a9c7f7"/><ellipse cx="300" cy="295.7" rx="16" ry="6" fill="#80f05c" transform="rotate(-42 300 295.7)"/><path d="M292 290.7v9M296 290.7v9M300 290.7v9M304 290.7v9M308 290.7v9" stroke="#1d4a12" stroke-width="1" transform="rotate(-42 300 295.7)" opacity=".8"/><ellipse cx="424" cy="295.7" rx="16" ry="6" fill="#80f05c" transform="rotate(42 424 295.7)"/><path d="M416 290.7v9M420 290.7v9M424 290.7v9M428 290.7v9M432 290.7v9" stroke="#1d4a12" stroke-width="1" transform="rotate(42 424 295.7)" opacity=".8"/><ellipse cx="300" cy="427.7" rx="16" ry="6" fill="#80f05c" transform="rotate(42 300 427.7)"/><path d="M292 422.7v9M296 422.7v9M300 422.7v9M304 422.7v9M308 422.7v9" stroke="#1d4a12" stroke-width="1" transform="rotate(42 300 427.7)" opacity=".8"/><ellipse cx="424" cy="427.7" rx="16" ry="6" fill="#80f05c" transform="rotate(-42 424 427.7)"/><path d="M416 422.7v9M420 422.7v9M424 422.7v9M428 422.7v9M432 422.7v9" stroke="#1d4a12" stroke-width="1" transform="rotate(-42 424 427.7)" opacity=".8"/><ellipse cx="362" cy="273.7" rx="8" ry="4" fill="#80f05c"/><ellipse cx="362" cy="449.7" rx="8" ry="4" fill="#80f05c"/><ellipse cx="326" cy="275.7" rx="8" ry="4" fill="#80f05c"/><ellipse cx="398" cy="275.7" rx="8" ry="4" fill="#80f05c"/><ellipse cx="326" cy="447.7" rx="8" ry="4" fill="#80f05c"/><ellipse cx="398" cy="447.7" rx="8" ry="4" fill="#80f05c"/><circle cx="343.2" cy="285.5" r="10.3" fill="none" stroke="#1a2a4c" stroke-width="1.6" stroke-dasharray="1.6 2.4"/><circle cx="343.2" cy="285.5" r="8.1" fill="#6d7a96"/><path d="M335.1 285.5H351.3M343.2 277.4V293.6" stroke="#b9d0f8" stroke-width="1"/><circle cx="379.5" cy="285.5" r="10.3" fill="none" stroke="#1a2a4c" stroke-width="1.6" stroke-dasharray="1.6 2.4"/><circle cx="379.5" cy="285.5" r="8.1" fill="#6d7a96"/><path d="M371.4 285.5H387.6M379.5 277.4V293.6" stroke="#b9d0f8" stroke-width="1"/><circle cx="415" cy="294.2" r="10.3" fill="none" stroke="#1a2a4c" stroke-width="1.6" stroke-dasharray="1.6 2.4"/><circle cx="415" cy="294.2" r="8.1" fill="#6d7a96"/><path d="M406.9 294.2H423.1M415 286.1V302.3" stroke="#b9d0f8" stroke-width="1"/><circle cx="436.6" cy="326.1" r="10.3" fill="none" stroke="#1a2a4c" stroke-width="1.6" stroke-dasharray="1.6 2.4"/><circle cx="436.6" cy="326.1" r="8.1" fill="#6d7a96"/><path d="M428.5 326.1H444.7M436.6 318V334.2" stroke="#b9d0f8" stroke-width="1"/><circle cx="440" cy="362.4" r="10.3" fill="none" stroke="#1a2a4c" stroke-width="1.6" stroke-dasharray="1.6 2.4"/><circle cx="440" cy="362.4" r="8.1" fill="#6d7a96"/><path d="M431.9 362.4H448.1M440 354.3V370.5" stroke="#b9d0f8" stroke-width="1"/><circle cx="436.6" cy="397.9" r="10.3" fill="none" stroke="#1a2a4c" stroke-width="1.6" stroke-dasharray="1.6 2.4"/><circle cx="436.6" cy="397.9" r="8.1" fill="#6d7a96"/><path d="M428.5 397.9H444.7M436.6 389.8V406" stroke="#b9d0f8" stroke-width="1"/><circle cx="414.1" cy="429.9" r="10.3" fill="none" stroke="#1a2a4c" stroke-width="1.6" stroke-dasharray="1.6 2.4"/><circle cx="414.1" cy="429.9" r="8.1" fill="#6d7a96"/><path d="M406 429.9H422.2M414.1 421.8V438" stroke="#b9d0f8" stroke-width="1"/><circle cx="379.5" cy="439.4" r="10.3" fill="none" stroke="#1a2a4c" stroke-width="1.6" stroke-dasharray="1.6 2.4"/><circle cx="379.5" cy="439.4" r="8.1" fill="#6d7a96"/><path d="M371.4 439.4H387.6M379.5 431.3V447.5" stroke="#b9d0f8" stroke-width="1"/><circle cx="343.2" cy="439.4" r="10.3" fill="none" stroke="#1a2a4c" stroke-width="1.6" stroke-dasharray="1.6 2.4"/><circle cx="343.2" cy="439.4" r="8.1" fill="#6d7a96"/><path d="M335.1 439.4H351.3M343.2 431.3V447.5" stroke="#b9d0f8" stroke-width="1"/><circle cx="307.8" cy="429.9" r="10.3" fill="none" stroke="#1a2a4c" stroke-width="1.6" stroke-dasharray="1.6 2.4"/><circle cx="307.8" cy="429.9" r="8.1" fill="#6d7a96"/><path d="M299.7 429.9H315.9M307.8 421.8V438" stroke="#b9d0f8" stroke-width="1"/><circle cx="287" cy="397.9" r="10.3" fill="none" stroke="#1a2a4c" stroke-width="1.6" stroke-dasharray="1.6 2.4"/><circle cx="287" cy="397.9" r="8.1" fill="#6d7a96"/><path d="M278.9 397.9H295.1M287 389.8V406" stroke="#b9d0f8" stroke-width="1"/><circle cx="282.7" cy="362.4" r="10.3" fill="none" stroke="#1a2a4c" stroke-width="1.6" stroke-dasharray="1.6 2.4"/><circle cx="282.7" cy="362.4" r="8.1" fill="#6d7a96"/><path d="M274.6 362.4H290.8M282.7 354.3V370.5" stroke="#b9d0f8" stroke-width="1"/><circle cx="287" cy="326.1" r="10.3" fill="none" stroke="#1a2a4c" stroke-width="1.6" stroke-dasharray="1.6 2.4"/><circle cx="287" cy="326.1" r="8.1" fill="#6d7a96"/><path d="M278.9 326.1H295.1M287 318V334.2" stroke="#b9d0f8" stroke-width="1"/><circle cx="307.8" cy="294.2" r="10.3" fill="none" stroke="#1a2a4c" stroke-width="1.6" stroke-dasharray="1.6 2.4"/><circle cx="307.8" cy="294.2" r="8.1" fill="#6d7a96"/><path d="M299.7 294.2H315.9M307.8 286.1V302.3" stroke="#b9d0f8" stroke-width="1"/><ellipse cx="361.3" cy="279.5" rx="5.2" ry="5.2" fill="#80f05c"/><path d="M359.3 277.5l4 4M362.3 276.5l2 2" stroke="#1d4a12" stroke-width=".9"/><ellipse cx="399.9" cy="284.5" rx="5.2" ry="5.2" fill="#80f05c"/><path d="M397.9 282.5l4 4M400.9 281.5l2 2" stroke="#1d4a12" stroke-width=".9"/><ellipse cx="430.5" cy="306.4" rx="5.2" ry="5.2" fill="#80f05c"/><path d="M428.5 304.4l4 4M431.5 303.4l2 2" stroke="#1d4a12" stroke-width=".9"/><ellipse cx="444.1" cy="342.9" rx="5.2" ry="5.2" fill="#80f05c"/><path d="M442.1 340.9l4 4M445.1 339.9l2 2" stroke="#1d4a12" stroke-width=".9"/><ellipse cx="444.1" cy="381.6" rx="5.2" ry="5.2" fill="#80f05c"/><path d="M442.1 379.6l4 4M445.1 378.6l2 2" stroke="#1d4a12" stroke-width=".9"/><ellipse cx="430" cy="417.7" rx="5.2" ry="5.2" fill="#80f05c"/><path d="M428 415.7l4 4M431 414.7l2 2" stroke="#1d4a12" stroke-width=".9"/><ellipse cx="399.4" cy="440.1" rx="5.2" ry="5.2" fill="#80f05c"/><path d="M397.4 438.1l4 4M400.4 437.1l2 2" stroke="#1d4a12" stroke-width=".9"/><ellipse cx="361.3" cy="445.4" rx="5.2" ry="5.2" fill="#80f05c"/><path d="M359.3 443.4l4 4M362.3 442.4l2 2" stroke="#1d4a12" stroke-width=".9"/><ellipse cx="322.8" cy="440" rx="5.2" ry="5.2" fill="#80f05c"/><path d="M320.8 438l4 4M323.8 437l2 2" stroke="#1d4a12" stroke-width=".9"/><ellipse cx="292.7" cy="417.7" rx="5.2" ry="5.2" fill="#80f05c"/><path d="M290.7 415.7l4 4M293.7 414.7l2 2" stroke="#1d4a12" stroke-width=".9"/><ellipse cx="279" cy="381.5" rx="5.2" ry="5.2" fill="#80f05c"/><path d="M277 379.5l4 4M280 378.5l2 2" stroke="#1d4a12" stroke-width=".9"/><ellipse cx="279" cy="342.9" rx="5.2" ry="5.2" fill="#80f05c"/><path d="M277 340.9l4 4M280 339.9l2 2" stroke="#1d4a12" stroke-width=".9"/><ellipse cx="292.7" cy="306.4" rx="5.2" ry="5.2" fill="#80f05c"/><path d="M290.7 304.4l4 4M293.7 303.4l2 2" stroke="#1d4a12" stroke-width=".9"/><ellipse cx="322.8" cy="284.5" rx="5.2" ry="5.2" fill="#80f05c"/><path d="M320.8 282.5l4 4M323.8 281.5l2 2" stroke="#1d4a12" stroke-width=".9"/><path d="M400 292h1.6v1.6h-1.6zM348 422h1.6v1.6h-1.6zM405 301h1.6v1.6h-1.6zM422 381h1.6v1.6h-1.6zM420 413h1.6v1.6h-1.6zM361 298h1.6v1.6h-1.6zM339 295h1.6v1.6h-1.6zM360 280h1.6v1.6h-1.6zM350 423h1.6v1.6h-1.6zM425 338h1.6v1.6h-1.6zM428 328h1.6v1.6h-1.6zM356 280h1.6v1.6h-1.6zM314 309h1.6v1.6h-1.6zM431 387h1.6v1.6h-1.6zM299 393h1.6v1.6h-1.6zM416 333h1.6v1.6h-1.6zM366 299h1.6v1.6h-1.6zM357 436h1.6v1.6h-1.6zM432 347h1.6v1.6h-1.6zM301 343h1.6v1.6h-1.6zM423 387h1.6v1.6h-1.6zM309 396h1.6v1.6h-1.6zM339 421h1.6v1.6h-1.6zM366 428h1.6v1.6h-1.6zM294 354h1.6v1.6h-1.6zM422 334h1.6v1.6h-1.6zM406 420h1.6v1.6h-1.6zM323 431h1.6v1.6h-1.6zM290 337h1.6v1.6h-1.6zM397 429h1.6v1.6h-1.6zM306 319h1.6v1.6h-1.6zM369 280h1.6v1.6h-1.6zM410 406h1.6v1.6h-1.6zM322 412h1.6v1.6h-1.6zM421 386h1.6v1.6h-1.6zM304 382h1.6v1.6h-1.6zM331 426h1.6v1.6h-1.6zM321 411h1.6v1.6h-1.6zM414 388h1.6v1.6h-1.6zM426 401h1.6v1.6h-1.6zM432 352h1.6v1.6h-1.6zM415 407h1.6v1.6h-1.6zM305 388h1.6v1.6h-1.6zM306 345h1.6v1.6h-1.6zM425 324h1.6v1.6h-1.6zM325 306h1.6v1.6h-1.6zM363 426h1.6v1.6h-1.6zM436 375h1.6v1.6h-1.6zM396 303h1.6v1.6h-1.6zM390 432h1.6v1.6h-1.6zM406 292h1.6v1.6h-1.6zM399 431h1.6v1.6h-1.6zM398 292h1.6v1.6h-1.6zM333 419h1.6v1.6h-1.6zM391 300h1.6v1.6h-1.6zM314 416h1.6v1.6h-1.6zM309 421h1.6v1.6h-1.6zM365 423h1.6v1.6h-1.6zM296 330h1.6v1.6h-1.6zM393 290h1.6v1.6h-1.6zM427 314h1.6v1.6h-1.6zM292 364h1.6v1.6h-1.6zM397 418h1.6v1.6h-1.6zM310 330h1.6v1.6h-1.6zM338 301h1.6v1.6h-1.6zM411 394h1.6v1.6h-1.6zM304 386h1.6v1.6h-1.6zM352 301h1.6v1.6h-1.6zM403 292h1.6v1.6h-1.6zM294 355h1.6v1.6h-1.6zM326 422h1.6v1.6h-1.6zM323 291h1.6v1.6h-1.6zM412 324h1.6v1.6h-1.6zM342 430h1.6v1.6h-1.6zM301 334h1.6v1.6h-1.6zM382 421h1.6v1.6h-1.6zM331 426h1.6v1.6h-1.6zM439 346h1.6v1.6h-1.6zM431 343h1.6v1.6h-1.6zM384 303h1.6v1.6h-1.6zM330 293h1.6v1.6h-1.6zM427 340h1.6v1.6h-1.6zM323 306h1.6v1.6h-1.6zM318 430h1.6v1.6h-1.6zM423 373h1.6v1.6h-1.6zM332 296h1.6v1.6h-1.6zM424 401h1.6v1.6h-1.6zM312 416h1.6v1.6h-1.6zM301 398h1.6v1.6h-1.6zM300 333h1.6v1.6h-1.6zM408 404h1.6v1.6h-1.6zM416 314h1.6v1.6h-1.6zM420 415h1.6v1.6h-1.6zM360 425h1.6v1.6h-1.6zM299 348h1.6v1.6h-1.6zM291 366h1.6v1.6h-1.6zM414 409h1.6v1.6h-1.6zM311 328h1.6v1.6h-1.6zM312 396h1.6v1.6h-1.6zM291 337h1.6v1.6h-1.6zM364 297h1.6v1.6h-1.6zM423 410h1.6v1.6h-1.6zM314 402h1.6v1.6h-1.6zM430 343h1.6v1.6h-1.6zM371 297h1.6v1.6h-1.6zM371 299h1.6v1.6h-1.6zM367 431h1.6v1.6h-1.6zM432 368h1.6v1.6h-1.6zM376 428h1.6v1.6h-1.6zM417 312h1.6v1.6h-1.6zM410 307h1.6v1.6h-1.6zM429 320h1.6v1.6h-1.6zM398 430h1.6v1.6h-1.6zM321 428h1.6v1.6h-1.6zM329 287h1.6v1.6h-1.6zM409 410h1.6v1.6h-1.6zM355 277h1.6v1.6h-1.6zM351 300h1.6v1.6h-1.6zM314 323h1.6v1.6h-1.6zM289 337h1.6v1.6h-1.6zM421 416h1.6v1.6h-1.6zM333 301h1.6v1.6h-1.6zM385 429h1.6v1.6h-1.6zM399 297h1.6v1.6h-1.6zM405 402h1.6v1.6h-1.6zM420 413h1.6v1.6h-1.6zM389 430h1.6v1.6h-1.6zM317 405h1.6v1.6h-1.6zM411 309h1.6v1.6h-1.6zM333 286h1.6v1.6h-1.6zM416 342h1.6v1.6h-1.6zM328 415h1.6v1.6h-1.6zM380 302h1.6v1.6h-1.6zM393 435h1.6v1.6h-1.6zM333 297h1.6v1.6h-1.6zM301 371h1.6v1.6h-1.6zM399 303h1.6v1.6h-1.6zM412 307h1.6v1.6h-1.6zM419 393h1.6v1.6h-1.6zM312 328h1.6v1.6h-1.6zM393 423h1.6v1.6h-1.6zM292 376h1.6v1.6h-1.6zM311 406h1.6v1.6h-1.6zM332 415h1.6v1.6h-1.6zM284 383h1.6v1.6h-1.6zM420 379h1.6v1.6h-1.6zM331 302h1.6v1.6h-1.6zM351 434h1.6v1.6h-1.6zM356 436h1.6v1.6h-1.6zM283 346h1.6v1.6h-1.6zM420 358h1.6v1.6h-1.6zM414 304h1.6v1.6h-1.6zM313 304h1.6v1.6h-1.6zM320 413h1.6v1.6h-1.6zM429 332h1.6v1.6h-1.6zM357 288h1.6v1.6h-1.6zM318 309h1.6v1.6h-1.6zM298 339h1.6v1.6h-1.6zM422 387h1.6v1.6h-1.6zM326 438h1.6v1.6h-1.6zM296 369h1.6v1.6h-1.6zM364 428h1.6v1.6h-1.6zM326 414h1.6v1.6h-1.6zM297 382h1.6v1.6h-1.6zM303 332h1.6v1.6h-1.6zM390 416h1.6v1.6h-1.6zM341 426h1.6v1.6h-1.6zM351 287h1.6v1.6h-1.6zM422 335h1.6v1.6h-1.6zM424 325h1.6v1.6h-1.6zM416 393h1.6v1.6h-1.6zM315 424h1.6v1.6h-1.6zM424 391h1.6v1.6h-1.6zM413 321h1.6v1.6h-1.6zM359 423h1.6v1.6h-1.6zM394 419h1.6v1.6h-1.6zM344 297h1.6v1.6h-1.6zM311 400h1.6v1.6h-1.6zM300 312h1.6v1.6h-1.6zM324 308h1.6v1.6h-1.6zM353 277h1.6v1.6h-1.6zM314 324h1.6v1.6h-1.6zM390 284h1.6v1.6h-1.6zM329 415h1.6v1.6h-1.6zM388 430h1.6v1.6h-1.6zM413 307h1.6v1.6h-1.6zM417 330h1.6v1.6h-1.6zM327 432h1.6v1.6h-1.6zM322 304h1.6v1.6h-1.6zM333 299h1.6v1.6h-1.6zM424 386h1.6v1.6h-1.6zM431 383h1.6v1.6h-1.6zM327 424h1.6v1.6h-1.6zM310 322h1.6v1.6h-1.6zM305 375h1.6v1.6h-1.6zM424 327h1.6v1.6h-1.6zM420 356h1.6v1.6h-1.6zM305 309h1.6v1.6h-1.6zM333 417h1.6v1.6h-1.6zM395 415h1.6v1.6h-1.6zM368 298h1.6v1.6h-1.6zM388 295h1.6v1.6h-1.6zM292 343h1.6v1.6h-1.6zM293 335h1.6v1.6h-1.6zM309 320h1.6v1.6h-1.6zM358 294h1.6v1.6h-1.6zM372 293h1.6v1.6h-1.6zM373 277h1.6v1.6h-1.6zM300 381h1.6v1.6h-1.6zM283 349h1.6v1.6h-1.6zM401 406h1.6v1.6h-1.6zM290 373h1.6v1.6h-1.6zM371 292h1.6v1.6h-1.6zM424 357h1.6v1.6h-1.6zM364 298h1.6v1.6h-1.6zM421 372h1.6v1.6h-1.6zM426 388h1.6v1.6h-1.6zM303 339h1.6v1.6h-1.6zM423 335h1.6v1.6h-1.6zM398 414h1.6v1.6h-1.6zM355 278h1.6v1.6h-1.6zM392 414h1.6v1.6h-1.6zM373 295h1.6v1.6h-1.6zM430 353h1.6v1.6h-1.6zM319 309h1.6v1.6h-1.6zM383 292h1.6v1.6h-1.6zM326 436h1.6v1.6h-1.6zM420 411h1.6v1.6h-1.6zM428 392h1.6v1.6h-1.6zM298 409h1.6v1.6h-1.6zM427 389h1.6v1.6h-1.6zM295 406h1.6v1.6h-1.6zM429 335h1.6v1.6h-1.6zM372 428h1.6v1.6h-1.6zM356 433h1.6v1.6h-1.6zM369 427h1.6v1.6h-1.6zM366 284h1.6v1.6h-1.6zM404 430h1.6v1.6h-1.6zM405 312h1.6v1.6h-1.6zM362 280h1.6v1.6h-1.6zM348 429h1.6v1.6h-1.6zM400 427h1.6v1.6h-1.6zM306 320h1.6v1.6h-1.6zM313 423h1.6v1.6h-1.6zM402 311h1.6v1.6h-1.6zM344 420h1.6v1.6h-1.6zM423 416h1.6v1.6h-1.6zM405 426h1.6v1.6h-1.6zM412 399h1.6v1.6h-1.6zM337 303h1.6v1.6h-1.6zM319 432h1.6v1.6h-1.6zM419 353h1.6v1.6h-1.6zM369 441h1.6v1.6h-1.6zM340 304h1.6v1.6h-1.6zM299 359h1.6v1.6h-1.6zM307 388h1.6v1.6h-1.6zM441 372h1.6v1.6h-1.6zM330 437h1.6v1.6h-1.6zM412 411h1.6v1.6h-1.6zM406 415h1.6v1.6h-1.6zM393 432h1.6v1.6h-1.6zM406 425h1.6v1.6h-1.6zM301 361h1.6v1.6h-1.6zM320 420h1.6v1.6h-1.6zM419 327h1.6v1.6h-1.6zM417 308h1.6v1.6h-1.6zM353 426h1.6v1.6h-1.6zM356 424h1.6v1.6h-1.6zM428 381h1.6v1.6h-1.6zM302 402h1.6v1.6h-1.6zM324 408h1.6v1.6h-1.6zM334 290h1.6v1.6h-1.6zM294 341h1.6v1.6h-1.6zM332 282h1.6v1.6h-1.6zM414 305h1.6v1.6h-1.6zM309 402h1.6v1.6h-1.6zM311 407h1.6v1.6h-1.6zM310 396h1.6v1.6h-1.6zM419 361h1.6v1.6h-1.6zM300 309h1.6v1.6h-1.6zM359 437h1.6v1.6h-1.6zM316 408h1.6v1.6h-1.6zM381 422h1.6v1.6h-1.6zM403 294h1.6v1.6h-1.6zM411 327h1.6v1.6h-1.6zM339 296h1.6v1.6h-1.6zM319 302h1.6v1.6h-1.6zM329 439h1.6v1.6h-1.6zM403 303h1.6v1.6h-1.6zM294 314h1.6v1.6h-1.6zM369 437h1.6v1.6h-1.6zM359 291h1.6v1.6h-1.6zM291 349h1.6v1.6h-1.6zM333 299h1.6v1.6h-1.6zM313 307h1.6v1.6h-1.6zM354 444h1.6v1.6h-1.6zM288 374h1.6v1.6h-1.6zM294 351h1.6v1.6h-1.6zM372 425h1.6v1.6h-1.6zM424 329h1.6v1.6h-1.6zM293 350h1.6v1.6h-1.6zM386 299h1.6v1.6h-1.6zM397 433h1.6v1.6h-1.6zM291 380h1.6v1.6h-1.6zM398 288h1.6v1.6h-1.6zM401 315h1.6v1.6h-1.6zM305 417h1.6v1.6h-1.6zM386 303h1.6v1.6h-1.6zM398 417h1.6v1.6h-1.6zM414 403h1.6v1.6h-1.6zM384 291h1.6v1.6h-1.6zM304 380h1.6v1.6h-1.6zM298 413h1.6v1.6h-1.6zM338 293h1.6v1.6h-1.6zM286 372h1.6v1.6h-1.6zM365 296h1.6v1.6h-1.6zM333 298h1.6v1.6h-1.6zM299 353h1.6v1.6h-1.6zM316 412h1.6v1.6h-1.6zM319 403h1.6v1.6h-1.6zM419 384h1.6v1.6h-1.6zM349 295h1.6v1.6h-1.6zM333 421h1.6v1.6h-1.6zM392 306h1.6v1.6h-1.6zM382 429h1.6v1.6h-1.6zM321 406h1.6v1.6h-1.6zM300 386h1.6v1.6h-1.6zM346 295h1.6v1.6h-1.6zM301 403h1.6v1.6h-1.6zM386 296h1.6v1.6h-1.6zM308 411h1.6v1.6h-1.6zM417 331h1.6v1.6h-1.6zM434 347h1.6v1.6h-1.6zM311 417h1.6v1.6h-1.6zM333 416h1.6v1.6h-1.6zM364 291h1.6v1.6h-1.6zM293 349h1.6v1.6h-1.6zM423 315h1.6v1.6h-1.6zM432 373h1.6v1.6h-1.6zM295 378h1.6v1.6h-1.6zM397 301h1.6v1.6h-1.6zM284 375h1.6v1.6h-1.6zM297 388h1.6v1.6h-1.6zM326 292h1.6v1.6h-1.6zM314 397h1.6v1.6h-1.6zM331 294h1.6v1.6h-1.6zM371 282h1.6v1.6h-1.6zM408 406h1.6v1.6h-1.6zM409 399h1.6v1.6h-1.6zM363 286h1.6v1.6h-1.6zM430 388h1.6v1.6h-1.6zM431 388h1.6v1.6h-1.6zM300 398h1.6v1.6h-1.6zM404 315h1.6v1.6h-1.6zM326 425h1.6v1.6h-1.6zM352 428h1.6v1.6h-1.6zM337 423h1.6v1.6h-1.6zM406 303h1.6v1.6h-1.6zM294 356h1.6v1.6h-1.6zM423 383h1.6v1.6h-1.6zM401 308h1.6v1.6h-1.6zM379 421h1.6v1.6h-1.6zM297 345h1.6v1.6h-1.6zM294 378h1.6v1.6h-1.6zM304 326h1.6v1.6h-1.6zM381 299h1.6v1.6h-1.6zM423 325h1.6v1.6h-1.6zM423 383h1.6v1.6h-1.6zM296 347h1.6v1.6h-1.6zM302 334h1.6v1.6h-1.6z" fill="#16233f"/><ellipse cx="328.6" cy="301.1" rx="6.2" ry="6.2" fill="#80f05c"/><ellipse cx="361.4" cy="297.6" rx="6.2" ry="6.2" fill="#80f05c"/><ellipse cx="393.4" cy="301.1" rx="6.2" ry="6.2" fill="#80f05c"/><ellipse cx="308.7" cy="315.8" rx="6.2" ry="6.2" fill="#80f05c"/><ellipse cx="408.9" cy="315.8" rx="6.2" ry="6.2" fill="#80f05c"/><ellipse cx="297.4" cy="345.2" rx="6.2" ry="6.2" fill="#80f05c"/><ellipse cx="424.5" cy="345.2" rx="6.2" ry="6.2" fill="#80f05c"/><ellipse cx="297.4" cy="378" rx="6.2" ry="6.2" fill="#80f05c"/><ellipse cx="424.5" cy="378" rx="6.2" ry="6.2" fill="#80f05c"/><ellipse cx="308.7" cy="407.4" rx="6.2" ry="6.2" fill="#80f05c"/><ellipse cx="412.4" cy="407.4" rx="6.2" ry="6.2" fill="#80f05c"/><ellipse cx="329.4" cy="421.2" rx="6.2" ry="6.2" fill="#80f05c"/><ellipse cx="361.4" cy="427.3" rx="6.2" ry="6.2" fill="#80f05c"/><ellipse cx="393.4" cy="421.2" rx="6.2" ry="6.2" fill="#80f05c"/><defs><linearGradient id="tg1" x1="0" y1="0" x2="1" y2="0.35"><stop offset="0" stop-color="#a9bfe6"/><stop offset=".3" stop-color="#8c9cbc"/><stop offset=".55" stop-color="#56617a"/><stop offset=".72" stop-color="#1c222e"/><stop offset="1" stop-color="#0c0f16"/></linearGradient><clipPath id="tcl"><circle cx="361.5" cy="362.4" r="58"/></clipPath></defs><circle cx="361.5" cy="362.4" r="58" fill="url(#tg1)"/><g clip-path="url(#tcl)"><path d="M361.5 362.4L420.5 362.4L419.4 350.9Z" fill="rgb(21, 24, 34)"/><path d="M361.5 362.4L419.4 350.9L416 339.8Z" fill="rgb(36, 43, 58)"/><path d="M361.5 362.4L416 339.8L410.6 329.6Z" fill="rgb(40, 46, 61)"/><path d="M361.5 362.4L410.6 329.6L403.2 320.7Z" fill="rgb(60, 70, 91)"/><path d="M361.5 362.4L403.2 320.7L394.3 313.3Z" fill="rgb(62, 71, 92)"/><path d="M361.5 362.4L394.3 313.3L384.1 307.9Z" fill="rgb(94, 106, 134)"/><path d="M361.5 362.4L384.1 307.9L373 304.5Z" fill="rgb(92, 103, 128)"/><path d="M361.5 362.4L373 304.5L361.5 303.4Z" fill="rgb(129, 145, 179)"/><path d="M361.5 362.4L361.5 303.4L350 304.5Z" fill="rgb(119, 133, 162)"/><path d="M361.5 362.4L350 304.5L338.9 307.9Z" fill="rgb(157, 175, 212)"/><path d="M361.5 362.4L338.9 307.9L328.7 313.3Z" fill="rgb(138, 155, 187)"/><path d="M361.5 362.4L328.7 313.3L319.8 320.7Z" fill="rgb(181, 202, 243)"/><path d="M361.5 362.4L319.8 320.7L312.4 329.6Z" fill="rgb(152, 171, 204)"/><path d="M361.5 362.4L312.4 329.6L307 339.8Z" fill="rgb(182, 204, 246)"/><path d="M361.5 362.4L307 339.8L303.6 350.9Z" fill="rgb(148, 166, 199)"/><path d="M361.5 362.4L303.6 350.9L302.5 362.4Z" fill="rgb(176, 199, 240)"/><path d="M361.5 362.4L302.5 362.4L303.6 373.9Z" fill="rgb(139, 158, 192)"/><path d="M361.5 362.4L303.6 373.9L307 385Z" fill="rgb(161, 182, 222)"/><path d="M361.5 362.4L307 385L312.4 395.2Z" fill="rgb(125, 140, 173)"/><path d="M361.5 362.4L312.4 395.2L319.8 404.1Z" fill="rgb(143, 161, 200)"/><path d="M361.5 362.4L319.8 404.1L328.7 411.5Z" fill="rgb(108, 122, 152)"/><path d="M361.5 362.4L328.7 411.5L338.9 416.9Z" fill="rgb(118, 134, 169)"/><path d="M361.5 362.4L338.9 416.9L350 420.3Z" fill="rgb(86, 98, 125)"/><path d="M361.5 362.4L350 420.3L361.5 421.4Z" fill="rgb(91, 105, 135)"/><path d="M361.5 362.4L361.5 421.4L373 420.3Z" fill="rgb(63, 73, 96)"/><path d="M361.5 362.4L373 420.3L384.1 416.9Z" fill="rgb(63, 73, 97)"/><path d="M361.5 362.4L384.1 416.9L394.3 411.5Z" fill="rgb(40, 47, 63)"/><path d="M361.5 362.4L394.3 411.5L403.2 404.1Z" fill="rgb(35, 42, 57)"/><path d="M361.5 362.4L403.2 404.1L410.6 395.2Z" fill="rgb(23, 26, 37)"/><path d="M361.5 362.4L410.6 395.2L416 385Z" fill="rgb(25, 30, 42)"/><path d="M361.5 362.4L416 385L419.4 373.9Z" fill="rgb(19, 23, 31)"/><path d="M361.5 362.4L419.4 373.9L420.5 362.4Z" fill="rgb(21, 25, 34)"/><path d="M392.5 362.3L402.2 345.6L383.5 340.5Z" fill="rgb(70, 81, 103)" opacity=".8"/><path d="M383.4 340.4L378.3 321.7L361.6 331.4Z" fill="rgb(132, 147, 179)" opacity=".8"/><path d="M361.4 331.4L344.7 321.7L339.6 340.4Z" fill="rgb(166, 186, 222)" opacity=".8"/><path d="M339.5 340.5L320.8 345.6L330.5 362.3Z" fill="rgb(151, 170, 207)" opacity=".8"/><path d="M330.5 362.5L320.8 379.2L339.5 384.3Z" fill="rgb(116, 131, 164)" opacity=".8"/><path d="M339.6 384.4L344.7 403.1L361.4 393.4Z" fill="rgb(67, 78, 102)" opacity=".8"/><path d="M361.6 393.4L378.3 403.1L383.4 384.4Z" fill="rgb(24, 29, 40)" opacity=".8"/><path d="M383.5 384.3L402.2 379.2L392.5 362.5Z" fill="rgb(25, 30, 40)" opacity=".8"/><path d="M309.5 336.4 L329.5 332.4 L333.5 350.4 L319.5 360.4Z" fill="#eaf6ff"/><path d="M394.5 362.4L419.5 362.4M392 375L415.1 384.6M384.8 385.7L402.5 403.4M374.1 392.9L383.7 416M361.5 395.4L361.5 420.4M348.9 392.9L339.3 416M338.2 385.7L320.5 403.4M331 375L307.9 384.6M328.5 362.4L303.5 362.4M331 349.8L307.9 340.2M338.2 339.1L320.5 321.4M348.9 331.9L339.3 308.8M361.5 329.4L361.5 304.4M374.1 331.9L383.7 308.8M384.8 339.1L402.5 321.4M392 349.8L415.1 340.2M402.2 379.2L419.5 362.4M402.2 379.2L392.5 362.4M402.2 379.2L402.5 403.4M402.2 379.2L383.4 384.3M378.3 403.1L402.5 403.4M378.3 403.1L383.4 384.3M378.3 403.1L361.5 420.4M378.3 403.1L361.5 393.4M344.7 403.1L361.5 420.4M344.7 403.1L361.5 393.4M344.7 403.1L320.5 403.4M344.7 403.1L339.6 384.3M320.8 379.2L320.5 403.4M320.8 379.2L339.6 384.3M320.8 379.2L303.5 362.4M320.8 379.2L330.5 362.4M320.8 345.6L303.5 362.4M320.8 345.6L330.5 362.4M320.8 345.6L320.5 321.4M320.8 345.6L339.6 340.5M344.7 321.7L320.5 321.4M344.7 321.7L339.6 340.5M344.7 321.7L361.5 304.4M344.7 321.7L361.5 331.4M378.3 321.7L361.5 304.4M378.3 321.7L361.5 331.4M378.3 321.7L402.5 321.4M378.3 321.7L383.4 340.5M402.2 345.6L402.5 321.4M402.2 345.6L383.4 340.5M402.2 345.6L419.5 362.4M402.2 345.6L392.5 362.4M406.6 371.4L418.4 373.7M399.7 388L409.7 394.6M387.1 400.6L393.7 410.6M370.5 407.5L372.8 419.3M352.5 407.5L350.2 419.3M335.9 400.6L329.3 410.6M323.3 388L313.3 394.6M316.4 371.4L304.6 373.7M316.4 353.4L304.6 351.1M323.3 336.8L313.3 330.2M335.9 324.2L329.3 314.2M352.5 317.3L350.2 305.5M370.5 317.3L372.8 305.5M387.1 324.2L393.7 314.2M399.7 336.8L409.7 330.2M406.6 353.4L418.4 351.1M400.5 362.4L397.5 377.3L389.1 390L376.4 398.4L361.5 401.4L346.6 398.4L333.9 390L325.5 377.3L322.5 362.4L325.5 347.5L333.9 334.8L346.6 326.4L361.5 323.4L376.4 326.4L389.1 334.8L397.5 347.5ZM411.5 362.4L407.7 381.5L396.9 397.8L380.6 408.6L361.5 412.4L342.4 408.6L326.1 397.8L315.3 381.5L311.5 362.4L315.3 343.3L326.1 327L342.4 316.2L361.5 312.4L380.6 316.2L396.9 327L407.7 343.3Z" stroke="#b4ccf6" stroke-width="1.2" fill="none"/></g><path d="M349.5 333.4L373.5 333.4L390.5 350.4L390.5 374.4L373.5 391.4L349.5 391.4L332.5 374.4L332.5 350.4Z" fill="#5f6b85" stroke="#b4ccf6" stroke-width="1.3"/><path d="M361.5 304.4V420.4" stroke="#b4ccf6" stroke-width="1.3"/><circle cx="361.5" cy="362.4" r="58" fill="none" stroke="#b4ccf6" stroke-width="1.2"/><path d="M162 362.5H556" stroke="#d545d5" stroke-width="1.6"/><path d="M76.5 577V609.5H108" stroke="#2c3f8c" stroke-width="1" fill="none"/><path d="M76.5 609.5H106" stroke="#8c1818" stroke-width="1"/><text x="77" y="582" font-size="11" fill="#3a57b8" font-weight="bold">y</text><text x="107" y="613" font-size="11" fill="#a01c1c" font-weight="bold">x</text><g fill="none" stroke="#f0bc5c" stroke-width="1.1"><rect x="628.5" y="164.500" width="37.5" height="14" rx="7"/><rect x="632" y="167.500" width="30.5" height="8" rx="1.5"/><path d="M636 164.500l3 -1.500M655 163l3 1.500M636 178.500l3 1.500M655 180l3 -1.500"/></g><path d="M640.5 168.500H653.500L652 173.500L647 183L642 173.500Z M640.500 168.500L647 183L653.500 168.500M647 166V183M642 173.500H652" fill="none" stroke="#5c80d4" stroke-width="1.1"/><rect x="42" y="132" width="106" height="18" fill="#c3cfdb"/><text x="48" y="145.5" font-size="13" font-weight="bold" fill="#465a6e" textLength="91" lengthAdjust="spacingAndGlyphs">Looking Down</text>
</svg>
<svg style="left:693px;top:132px" width="647" height="513" viewBox="693 132 647 513">
<rect x="693" y="132" width="647" height="513" fill="#000"/>
<path d="M731.9 591.9L944.8 328.5M725.7 581L1273.8 708.4M744.8 594.9L955.7 330.6M732.1 573.2L1277.6 699.2M757.6 597.9L966.6 332.6M738.5 565.4L1281.3 690M770.5 601L977.5 334.7M744.8 557.7L1285 681M796.5 607L999.4 338.8M757.2 542.6L1292.2 663.3M809.5 610.1L1010.4 340.9M763.3 535.1L1295.8 654.6M822.6 613.1L1021.5 343M769.3 527.7L1299.3 646M835.8 616.2L1032.6 345.1M775.3 520.4L1302.8 637.5M862.3 622.4L1054.9 349.3M787 506.1L1309.6 620.7M875.6 625.5L1066.1 351.4M792.8 499L1313 612.5M888.9 628.6L1077.3 353.6M798.6 492L1316.3 604.3M902.3 631.8L1088.5 355.7M804.2 485L1319.6 596.3M929.3 638.1L1111.2 360M815.4 471.4L1326.1 580.4M942.9 641.2L1122.5 362.1M820.9 464.7L1329.3 572.6M956.5 644.4L1133.9 364.3M826.4 458L1332.5 564.9M970.2 647.6L1145.4 366.5M831.8 451.4L1335.6 557.2M997.7 654.1L1168.4 370.8M842.4 438.4L1341.7 542.2M1011.5 657.3L1179.9 373M847.6 432L1344.7 534.8M1025.4 660.5L1191.5 375.2M852.8 425.7L1347.7 527.5M1039.3 663.8L1203.1 377.4M858 419.4L1350.7 520.2M1067.3 670.3L1226.5 381.8M868.1 407L1356.5 505.9M1081.4 673.6L1238.2 384M873.1 400.9L1359.4 498.9M1095.6 676.9L1250 386.3M878.1 394.8L1362.3 492M1109.8 680.3L1261.8 388.5M883 388.8L1365.1 485.1M1138.4 687L1285.6 393M892.6 377L1370.6 471.5M1152.8 690.3L1297.5 395.2M897.4 371.2L1373.4 464.8M1167.2 693.7L1309.5 397.5M902.1 365.4L1376.1 458.2M1181.7 697.1L1321.5 399.8M906.8 359.7L1378.8 451.6M1210.9 703.9L1345.6 404.4M916 348.4L1384 438.7M1225.6 707.3L1357.7 406.6M920.6 342.9L1386.6 432.3M1240.3 710.8L1369.9 408.9M925.1 337.3L1389.2 426M1255.1 714.2L1382.1 411.3M929.6 331.9L1391.8 419.8" stroke="#404040" stroke-width=".9" fill="none"/><path d="M719.2 589L934 326.5M719.2 589L1270 717.7M783.5 604L988.4 336.8M751 550.1L1288.6 672.1M849 619.3L1043.7 347.2M781.2 513.2L1306.2 629M915.8 634.9L1099.8 357.8M809.8 478.2L1322.9 588.3M983.9 650.8L1156.9 368.6M837.1 444.9L1338.7 549.7M1053.3 667.1L1214.8 379.6M863.1 413.1L1353.6 513.1M1124.1 683.6L1273.7 390.7M887.8 382.9L1367.9 478.2M1196.3 700.5L1333.5 402.1M911.4 354L1381.4 445.1M1270 717.7L1394.3 413.6M934 326.5L1394.3 413.6" stroke="#808080" stroke-width=".9" fill="none"/><path d="M1079.1 495.5L1338.7 549.7" stroke="#a01010" stroke-width="2"/><path d="M1079.1 495.5L1156.9 368.6" stroke="#2a50b8" stroke-width="2"/><defs>
<linearGradient id="sv1" x1="0" y1="0" x2="1" y2="1"><stop offset="0" stop-color="#d8dade"/><stop offset=".35" stop-color="#9a9da4"/><stop offset=".7" stop-color="#6a6d74"/><stop offset="1" stop-color="#a8abb2"/></linearGradient>
<linearGradient id="sv2" x1="0" y1="0" x2="0" y2="1"><stop offset="0" stop-color="#70737a"/><stop offset=".5" stop-color="#c4c6cc"/><stop offset="1" stop-color="#8a8d94"/></linearGradient>
<linearGradient id="sv3" x1="0" y1="0" x2="1" y2="0"><stop offset="0" stop-color="#b8bac0"/><stop offset=".5" stop-color="#8a8d93"/><stop offset="1" stop-color="#c8cad0"/></linearGradient>
<radialGradient id="rb1" cx=".4" cy=".4" r=".7"><stop offset="0" stop-color="#b41430"/><stop offset=".6" stop-color="#920e26"/><stop offset="1" stop-color="#5e0816"/></radialGradient>
<filter id="bl1" x="-20%" y="-20%" width="140%" height="140%"><feGaussianBlur stdDeviation="1.2"/></filter><filter id="bl2" x="-30%" y="-30%" width="160%" height="160%"><feGaussianBlur stdDeviation="2.5"/></filter><filter id="bl3" x="-30%" y="-30%" width="160%" height="160%"><feGaussianBlur stdDeviation="3.5"/></filter>
</defs><clipPath id="bandclip"><path d="M1022 358.5C1012.8 365.2 1011 370.6 1004.5 378C998 385.4 990 394.5 983.2 402.8C976.4 411.1 969.6 418.8 963.7 427.7C957.8 436.6 951 449.5 947.7 456C944.5 462.5 944.2 460.4 944.2 466.6C944.2 472.8 945.1 483.4 947.7 493.2C950.4 502.9 954.2 514.5 960.1 525.1C966 535.7 973.4 547 983.2 557C993 567 1005.4 577.4 1018.7 585.4C1032 593.4 1048.2 600.8 1063 604.9C1077.8 609 1094 610.5 1107.3 610.2C1120.6 609.9 1131 607.8 1142.8 603.1C1154.6 598.4 1168.8 590.1 1178.2 581.8C1187.7 573.5 1193.6 565.3 1199.5 553.5C1205.4 541.7 1211.3 522.4 1213.7 510.9C1216.1 499.4 1214.9 493.2 1213.7 484.3C1212.5 475.4 1209.5 463.9 1206.6 457.7C1203.6 451.5 1199.3 452.6 1196 447C1192.7 441.4 1191.7 431.8 1187 424C1182.3 416.2 1172.8 408.2 1168 400C1163.2 391.8 1162.8 382.2 1158 375C1153.2 367.8 1148.7 362.5 1139 356.7C1129.3 350.9 1113.2 343.1 1100 340C1086.8 336.9 1073 334.9 1060 338C1047 341.1 1031.2 351.8 1022 358.5ZM1054 402.8C1045.5 401 1038.1 397.5 1029.3 399.3C1020.4 401.1 1009.5 407.6 1000.9 413.5C992.3 419.4 982.3 429.5 977.9 434.8C973.5 440.1 975.8 438.5 974.3 445.3C972.8 452.1 967.8 465.1 969 475.5C970.2 485.9 976.1 497.4 981.4 507.4C986.7 517.4 992.9 526.8 1000.9 535.7C1008.9 544.6 1018.6 553.5 1029.3 560.6C1040 567.7 1053 573.9 1064.8 578.3C1076.6 582.7 1088.7 586.3 1100.2 587.2C1111.7 588.1 1123.9 586.3 1133.9 583.6C1144 580.9 1153.1 576.2 1160.5 571.2C1167.9 566.2 1174.4 560.6 1178.2 553.5C1182 546.4 1182.9 537.9 1183.5 528.7C1184.1 519.5 1183 507.9 1181.8 498.5C1180.6 489.1 1180.8 479.6 1176.4 472.2C1172 464.8 1160.6 459.9 1155.3 453.8C1150 447.7 1150.1 441.5 1144.8 435.3C1139.5 429.1 1130 422.1 1123.7 416.9C1117.4 411.7 1114.3 405.1 1107 404C1099.7 402.9 1088.8 410.2 1080 410C1071.2 409.8 1062.5 404.6 1054 402.8Z" clip-rule="evenodd"/></clipPath><path d="M1022 358.5C1012.8 365.2 1011 370.6 1004.5 378C998 385.4 990 394.5 983.2 402.8C976.4 411.1 969.6 418.8 963.7 427.7C957.8 436.6 951 449.5 947.7 456C944.5 462.5 944.2 460.4 944.2 466.6C944.2 472.8 945.1 483.4 947.7 493.2C950.4 502.9 954.2 514.5 960.1 525.1C966 535.7 973.4 547 983.2 557C993 567 1005.4 577.4 1018.7 585.4C1032 593.4 1048.2 600.8 1063 604.9C1077.8 609 1094 610.5 1107.3 610.2C1120.6 609.9 1131 607.8 1142.8 603.1C1154.6 598.4 1168.8 590.1 1178.2 581.8C1187.7 573.5 1193.6 565.3 1199.5 553.5C1205.4 541.7 1211.3 522.4 1213.7 510.9C1216.1 499.4 1214.9 493.2 1213.7 484.3C1212.5 475.4 1209.5 463.9 1206.6 457.7C1203.6 451.5 1199.3 452.6 1196 447C1192.7 441.4 1191.7 431.8 1187 424C1182.3 416.2 1172.8 408.2 1168 400C1163.2 391.8 1162.8 382.2 1158 375C1153.2 367.8 1148.7 362.5 1139 356.7C1129.3 350.9 1113.2 343.1 1100 340C1086.8 336.9 1073 334.9 1060 338C1047 341.1 1031.2 351.8 1022 358.5ZM1054 402.8C1045.5 401 1038.1 397.5 1029.3 399.3C1020.4 401.1 1009.5 407.6 1000.9 413.5C992.3 419.4 982.3 429.5 977.9 434.8C973.5 440.1 975.8 438.5 974.3 445.3C972.8 452.1 967.8 465.1 969 475.5C970.2 485.9 976.1 497.4 981.4 507.4C986.7 517.4 992.9 526.8 1000.9 535.7C1008.9 544.6 1018.6 553.5 1029.3 560.6C1040 567.7 1053 573.9 1064.8 578.3C1076.6 582.7 1088.7 586.3 1100.2 587.2C1111.7 588.1 1123.9 586.3 1133.9 583.6C1144 580.9 1153.1 576.2 1160.5 571.2C1167.9 566.2 1174.4 560.6 1178.2 553.5C1182 546.4 1182.9 537.9 1183.5 528.7C1184.1 519.5 1183 507.9 1181.8 498.5C1180.6 489.1 1180.8 479.6 1176.4 472.2C1172 464.8 1160.6 459.9 1155.3 453.8C1150 447.7 1150.1 441.5 1144.8 435.3C1139.5 429.1 1130 422.1 1123.7 416.9C1117.4 411.7 1114.3 405.1 1107 404C1099.7 402.9 1088.8 410.2 1080 410C1071.2 409.8 1062.5 404.6 1054 402.8Z" fill="#8f9197" fill-rule="evenodd"/><g clip-path="url(#bandclip)"><path d="M1010 372C1005.8 377 992.5 392.7 985 402C977.5 411.3 970.8 418.7 965 428C959.2 437.3 952.8 449.3 950 458C947.2 466.7 947.7 473 948 480C948.3 487 949.3 492 952 500C954.7 508 962 523.3 964 528" stroke="#b2b4b9" stroke-width="13" fill="none" filter="url(#bl3)"/><path d="M1003 413C999 416.8 984.2 428.2 979 436C973.8 443.8 973.3 452.7 972 460C970.7 467.3 969.3 472.2 971 480C972.7 487.8 977.2 498 982 507C986.8 516 997 529.5 1000 534" stroke="#3e4046" stroke-width="9" fill="none" filter="url(#bl2)"/><path d="M958 525C962 530.5 972 547.5 982 558C992 568.5 1004.5 579.7 1018 588C1031.5 596.3 1048.2 603.8 1063 608C1077.8 612.2 1093.7 613.3 1107 613C1120.3 612.7 1130.8 610.8 1143 606C1155.2 601.2 1173.8 587.7 1180 584" stroke="#b0b2b7" stroke-width="15" fill="none" filter="url(#bl3)"/><path d="M986 512C989 516.3 996.5 529.5 1004 538C1011.5 546.5 1020.7 555.8 1031 563C1041.3 570.2 1054.5 576.5 1066 581C1077.5 585.5 1088.7 589.2 1100 590C1111.3 590.8 1124.3 588.5 1134 586C1143.7 583.5 1154 576.8 1158 575" stroke="#c9cbd0" stroke-width="11" fill="none" filter="url(#bl1)"/><path d="M993 520C995.8 524.3 1002.5 537.5 1010 546C1017.5 554.5 1028 564 1038 571C1048 578 1059.7 583.8 1070 588C1080.3 592.2 1090 595.2 1100 596C1110 596.8 1121.3 595 1130 593C1138.7 591 1148.3 585.5 1152 584" stroke="#2e3036" stroke-width="1.6" fill="none" opacity=".8"/><path d="M1118 586.5C1121.6 584.1 1134.9 583.9 1141.8 581.5C1148.7 579.1 1154.7 575.4 1159.6 572C1164.5 568.6 1168.1 565.1 1171.4 561.4C1174.8 557.7 1177.8 554 1179.7 549.6C1181.6 545.2 1181.6 536.6 1183 535C1184.4 533.4 1187.8 536.5 1188 540C1188.2 543.5 1186.3 551 1184 556C1181.7 561 1178 565.8 1174 570C1170 574.2 1165.3 577.7 1160 581C1154.7 584.3 1148.7 587.5 1142 590C1135.3 592.5 1124 596.6 1120 596C1116 595.4 1114.4 588.9 1118 586.5Z" fill="#2e2f33" filter="url(#bl1)"/><path d="M1010 548C1014.7 552.2 1028 566 1038 573C1048 580 1059.7 585.8 1070 590C1080.3 594.2 1090 597.2 1100 598C1110 598.8 1120 597.5 1130 595C1140 592.5 1151.7 587.8 1160 583C1168.3 578.2 1176.7 568.8 1180 566" stroke="#eceef2" stroke-width="1.1" fill="none" opacity=".75"/><path d="M1150 440C1153.3 443.7 1164 453.7 1170 462C1176 470.3 1182.7 480.3 1186 490C1189.3 499.7 1189.7 510.3 1190 520C1190.3 529.7 1188.3 543.3 1188 548" stroke="#74767c" stroke-width="14" fill="none" filter="url(#bl2)"/><path d="M1120 400C1123.3 403 1133.7 411.3 1140 418C1146.3 424.7 1155 436.3 1158 440" stroke="#b4b6bc" stroke-width="10" fill="none" filter="url(#bl2)"/><path d="M1192 560C1189.7 563.7 1185 575.3 1178 582C1171 588.7 1154.7 597 1150 600" stroke="#9a9ca2" stroke-width="10" fill="none" filter="url(#bl2)"/><ellipse cx="1011" cy="392" rx="9" ry="5" fill="#2a2b2f" transform="rotate(-35 1011 392)" filter="url(#bl1)"/><ellipse cx="975" cy="432" rx="8" ry="4" fill="#333438" transform="rotate(-30 975 432)" filter="url(#bl1)"/><ellipse cx="990" cy="410" rx="13" ry="7" fill="#c9cbd0" transform="rotate(-48 990 410)" filter="url(#bl2)" opacity=".8"/><ellipse cx="960" cy="452" rx="12" ry="6" fill="#c4c6cb" transform="rotate(-62 960 452)" filter="url(#bl2)" opacity=".7"/><path d="M1003 402C1005.8 401 1013.8 396.3 1020 396C1026.2 395.7 1036.7 399.3 1040 400" stroke="#e4e6ea" stroke-width="1.5" fill="none" opacity=".8"/></g><path d="M1022 372 Q1050 410 1080 412 Q1110 410 1122 386 L1126 398 Q1102 420 1078 420 Q1044 416 1020 386Z" fill="#aeb0b6"/><path d="M1024 374 Q1052 398 1062 392 L1075 402 L1090 392 Q1106 398 1120 388" stroke="#d8dae0" stroke-width="2" fill="none" stroke-dasharray="1.5 1"/><g transform="translate(1036 384) rotate(0)"><ellipse rx="5.5" ry="4.1" fill="#430714"/><ellipse cx="-1.1" cy="-1.1" rx="3.3" ry="2.3" fill="#6a0f22"/><ellipse cx="-1.6" cy="-1.6" rx="1.4" ry="0.9" fill="#8e1c32"/></g><g transform="translate(1047 392) rotate(0)"><ellipse rx="5.5" ry="4.1" fill="#430714"/><ellipse cx="-1.1" cy="-1.1" rx="3.3" ry="2.3" fill="#6a0f22"/><ellipse cx="-1.6" cy="-1.6" rx="1.4" ry="0.9" fill="#8e1c32"/></g><g transform="translate(1092 399) rotate(0)"><ellipse rx="5.5" ry="4.1" fill="#430714"/><ellipse cx="-1.1" cy="-1.1" rx="3.3" ry="2.3" fill="#6a0f22"/><ellipse cx="-1.6" cy="-1.6" rx="1.4" ry="0.9" fill="#8e1c32"/></g><g transform="translate(1103 397) rotate(0)"><ellipse rx="5.2" ry="3.9" fill="#430714"/><ellipse cx="-1" cy="-1" rx="3.1" ry="2.1" fill="#6a0f22"/><ellipse cx="-1.6" cy="-1.6" rx="1.3" ry="0.9" fill="#8e1c32"/></g><g transform="translate(1113 392) rotate(0)"><ellipse rx="4.6" ry="3.4" fill="#430714"/><ellipse cx="-0.9" cy="-0.9" rx="2.8" ry="1.9" fill="#6a0f22"/><ellipse cx="-1.4" cy="-1.4" rx="1.1" ry="0.8" fill="#8e1c32"/></g><path d="M1058 382 L1084 386 L1077 402 L1062 398Z" fill="#7c0c22"/><path d="M1058 382 L1084 386 L1072 391Z" fill="#a3162e"/><ellipse cx="1080.5" cy="356" rx="60" ry="32" fill="url(#sv2)"/><ellipse cx="1080.5" cy="346" rx="60" ry="31" fill="#9a9ca2"/><ellipse cx="1080.5" cy="346" rx="55" ry="27.5" fill="#4a0a16"/><g transform="translate(1080.3 322.5) rotate(0)"><ellipse rx="6.6" ry="4.6" fill="#430714"/><ellipse cx="-1.3" cy="-1.3" rx="4" ry="2.5" fill="#6a0f22"/><ellipse cx="-2" cy="-2" rx="1.6" ry="1" fill="#8e1c32"/></g><g transform="translate(1100.9 324.8) rotate(0)"><ellipse rx="6.6" ry="4.6" fill="#430714"/><ellipse cx="-1.3" cy="-1.3" rx="4" ry="2.5" fill="#6a0f22"/><ellipse cx="-2" cy="-2" rx="1.6" ry="1" fill="#8e1c32"/></g><g transform="translate(1059.7 324.9) rotate(0)"><ellipse rx="6.6" ry="4.6" fill="#430714"/><ellipse cx="-1.3" cy="-1.3" rx="4" ry="2.5" fill="#6a0f22"/><ellipse cx="-2" cy="-2" rx="1.6" ry="1" fill="#8e1c32"/></g><g transform="translate(1117.5 331.3) rotate(0)"><ellipse rx="6.6" ry="4.6" fill="#430714"/><ellipse cx="-1.3" cy="-1.3" rx="4" ry="2.5" fill="#6a0f22"/><ellipse cx="-2" cy="-2" rx="1.6" ry="1" fill="#8e1c32"/></g><g transform="translate(1043.2 331.4) rotate(0)"><ellipse rx="6.6" ry="4.6" fill="#430714"/><ellipse cx="-1.3" cy="-1.3" rx="4" ry="2.5" fill="#6a0f22"/><ellipse cx="-2" cy="-2" rx="1.6" ry="1" fill="#8e1c32"/></g><g transform="translate(1126.8 340.7) rotate(0)"><ellipse rx="7.6" ry="5.3" fill="#430714"/><ellipse cx="-1.5" cy="-1.5" rx="4.6" ry="2.9" fill="#6a0f22"/><ellipse cx="-2.3" cy="-2.3" rx="1.9" ry="1.2" fill="#8e1c32"/></g><g transform="translate(1034.1 340.9) rotate(0)"><ellipse rx="7.6" ry="5.3" fill="#430714"/><ellipse cx="-1.5" cy="-1.5" rx="4.6" ry="2.9" fill="#6a0f22"/><ellipse cx="-2.3" cy="-2.3" rx="1.9" ry="1.2" fill="#8e1c32"/></g><g transform="translate(1126.9 351.1) rotate(0)"><ellipse rx="8.9" ry="6.2" fill="#430714"/><ellipse cx="-1.8" cy="-1.8" rx="5.3" ry="3.4" fill="#6a0f22"/><ellipse cx="-2.7" cy="-2.7" rx="2.2" ry="1.4" fill="#8e1c32"/></g><g transform="translate(1034.2 351.3) rotate(0)"><ellipse rx="8.9" ry="6.2" fill="#430714"/><ellipse cx="-1.8" cy="-1.8" rx="5.3" ry="3.4" fill="#6a0f22"/><ellipse cx="-2.7" cy="-2.7" rx="2.2" ry="1.4" fill="#8e1c32"/></g><g transform="translate(1117.8 360.6) rotate(0)"><ellipse rx="8.9" ry="7.1" fill="#430714"/><ellipse cx="-1.8" cy="-1.8" rx="5.3" ry="3.9" fill="#6a0f22"/><ellipse cx="-2.7" cy="-2.7" rx="2.2" ry="1.6" fill="#8e1c32"/></g><g transform="translate(1043.5 360.7) rotate(0)"><ellipse rx="8.9" ry="7.1" fill="#430714"/><ellipse cx="-1.8" cy="-1.8" rx="5.3" ry="3.9" fill="#6a0f22"/><ellipse cx="-2.7" cy="-2.7" rx="2.2" ry="1.6" fill="#8e1c32"/></g><g transform="translate(1101.3 367.1) rotate(0)"><ellipse rx="8.9" ry="7.1" fill="#430714"/><ellipse cx="-1.8" cy="-1.8" rx="5.3" ry="3.9" fill="#6a0f22"/><ellipse cx="-2.7" cy="-2.7" rx="2.2" ry="1.6" fill="#8e1c32"/></g><g transform="translate(1060.1 367.2) rotate(0)"><ellipse rx="8.9" ry="7.1" fill="#430714"/><ellipse cx="-1.8" cy="-1.8" rx="5.3" ry="3.9" fill="#6a0f22"/><ellipse cx="-2.7" cy="-2.7" rx="2.2" ry="1.6" fill="#8e1c32"/></g><g transform="translate(1080.7 369.5) rotate(0)"><ellipse rx="8.9" ry="7.1" fill="#430714"/><ellipse cx="-1.8" cy="-1.8" rx="5.3" ry="3.9" fill="#6a0f22"/><ellipse cx="-2.7" cy="-2.7" rx="2.2" ry="1.6" fill="#8e1c32"/></g><circle cx="1132" cy="358.4" r="1.7" fill="#dcdee2"/><circle cx="1114.8" cy="354" r="1.4" fill="#c4c6cc"/><circle cx="1116.2" cy="368.4" r="1.7" fill="#dcdee2"/><circle cx="1104.3" cy="360.4" r="1.4" fill="#c4c6cc"/><circle cx="1093.4" cy="374" r="1.7" fill="#dcdee2"/><circle cx="1089.1" cy="364" r="1.4" fill="#c4c6cc"/><circle cx="1068.1" cy="374.1" r="1.7" fill="#dcdee2"/><circle cx="1072.2" cy="364.1" r="1.4" fill="#c4c6cc"/><circle cx="1045.2" cy="368.6" r="1.7" fill="#dcdee2"/><circle cx="1056.9" cy="360.5" r="1.4" fill="#c4c6cc"/><circle cx="1029.3" cy="358.6" r="1.7" fill="#dcdee2"/><circle cx="1046.3" cy="354.1" r="1.4" fill="#c4c6cc"/><circle cx="1023.5" cy="346.1" r="1.7" fill="#dcdee2"/><circle cx="1042.5" cy="346.1" r="1.4" fill="#c4c6cc"/><circle cx="1029" cy="333.6" r="1.7" fill="#dcdee2"/><circle cx="1046.2" cy="338" r="1.4" fill="#c4c6cc"/><circle cx="1044.8" cy="323.6" r="1.7" fill="#dcdee2"/><circle cx="1056.7" cy="331.6" r="1.4" fill="#c4c6cc"/><circle cx="1067.6" cy="318" r="1.7" fill="#dcdee2"/><circle cx="1071.9" cy="328" r="1.4" fill="#c4c6cc"/><circle cx="1092.9" cy="317.9" r="1.7" fill="#dcdee2"/><circle cx="1088.8" cy="327.9" r="1.4" fill="#c4c6cc"/><circle cx="1115.8" cy="323.4" r="1.7" fill="#dcdee2"/><circle cx="1104.1" cy="331.5" r="1.4" fill="#c4c6cc"/><circle cx="1131.7" cy="333.4" r="1.7" fill="#dcdee2"/><circle cx="1114.7" cy="337.9" r="1.4" fill="#c4c6cc"/><circle cx="1137.5" cy="345.9" r="1.7" fill="#dcdee2"/><circle cx="1118.5" cy="345.9" r="1.4" fill="#c4c6cc"/><ellipse cx="1083.4" cy="338.5" rx="34" ry="22.5" fill="url(#rb1)"/><path d="M1052 335 L1068 321 L1098 323 L1080 341Z" fill="#a8142c" opacity=".9"/><path d="M1080 341 L1098 323 L1115 335 L1100 356 L1082 360Z" fill="#650a18" opacity=".9"/><path d="M1052 335 L1080 341 L1082 360 L1060 353Z" fill="#b81a34" opacity=".85"/><path d="M1098 323 L1115 335 L1117 343 L1106 352 L1100 356Z" fill="#86102a" opacity=".8"/><path d="M1068 321 L1082 318 L1098 323 L1084 330Z" fill="#7a0c20" opacity=".7"/><ellipse cx="1049" cy="345" rx="2.6" ry="3.4" fill="#d9dbe0"/><ellipse cx="1096" cy="354" rx="2.6" ry="3.4" fill="#d9dbe0"/><ellipse cx="1117" cy="331" rx="2.6" ry="3.4" fill="#d9dbe0"/><ellipse cx="1072" cy="318" rx="2.6" ry="3.4" fill="#d9dbe0"/><g transform="translate(1016 363) rotate(-50)"><ellipse rx="4.8" ry="3.4" fill="#430714"/><ellipse cx="-1" cy="-1" rx="2.9" ry="1.8" fill="#6a0f22"/><ellipse cx="-1.4" cy="-1.4" rx="1.2" ry="0.7" fill="#8e1c32"/></g><g transform="translate(1006 375) rotate(-50)"><ellipse rx="4.6" ry="3.3" fill="#430714"/><ellipse cx="-0.9" cy="-0.9" rx="2.8" ry="1.8" fill="#6a0f22"/><ellipse cx="-1.4" cy="-1.4" rx="1.2" ry="0.7" fill="#8e1c32"/></g><g transform="translate(996 388) rotate(-50)"><ellipse rx="4.5" ry="3.1" fill="#430714"/><ellipse cx="-0.9" cy="-0.9" rx="2.7" ry="1.7" fill="#6a0f22"/><ellipse cx="-1.3" cy="-1.3" rx="1.1" ry="0.7" fill="#8e1c32"/></g><g transform="translate(985 400) rotate(-50)"><ellipse rx="4.3" ry="3" fill="#430714"/><ellipse cx="-0.9" cy="-0.9" rx="2.6" ry="1.7" fill="#6a0f22"/><ellipse cx="-1.3" cy="-1.3" rx="1.1" ry="0.7" fill="#8e1c32"/></g><g transform="translate(975 414) rotate(-50)"><ellipse rx="4.2" ry="2.9" fill="#430714"/><ellipse cx="-0.8" cy="-0.8" rx="2.5" ry="1.6" fill="#6a0f22"/><ellipse cx="-1.3" cy="-1.3" rx="1.1" ry="0.6" fill="#8e1c32"/></g><g transform="translate(966 428) rotate(-50)"><ellipse rx="4" ry="2.8" fill="#430714"/><ellipse cx="-0.8" cy="-0.8" rx="2.4" ry="1.6" fill="#6a0f22"/><ellipse cx="-1.2" cy="-1.2" rx="1" ry="0.6" fill="#8e1c32"/></g><g transform="translate(957 442) rotate(-50)"><ellipse rx="3.9" ry="2.7" fill="#430714"/><ellipse cx="-0.8" cy="-0.8" rx="2.3" ry="1.5" fill="#6a0f22"/><ellipse cx="-1.2" cy="-1.2" rx="1" ry="0.6" fill="#8e1c32"/></g><g transform="translate(950 456) rotate(-50)"><ellipse rx="3.8" ry="2.6" fill="#430714"/><ellipse cx="-0.8" cy="-0.8" rx="2.2" ry="1.4" fill="#6a0f22"/><ellipse cx="-1.1" cy="-1.1" rx="0.9" ry="0.6" fill="#8e1c32"/></g><g transform="translate(946 470) rotate(-50)"><ellipse rx="3.6" ry="2.5" fill="#430714"/><ellipse cx="-0.7" cy="-0.7" rx="2.2" ry="1.4" fill="#6a0f22"/><ellipse cx="-1.1" cy="-1.1" rx="0.9" ry="0.6" fill="#8e1c32"/></g><g transform="translate(945 484) rotate(-50)"><ellipse rx="3.5" ry="2.4" fill="#430714"/><ellipse cx="-0.7" cy="-0.7" rx="2.1" ry="1.3" fill="#6a0f22"/><ellipse cx="-1" cy="-1" rx="0.9" ry="0.5" fill="#8e1c32"/></g><circle cx="948" cy="497" r="1.4" fill="#e8e8ec"/><circle cx="950" cy="506" r="1.4" fill="#e8e8ec"/><circle cx="953" cy="514" r="1.4" fill="#e8e8ec"/><path d="M1139.5 355C1144.8 354.6 1152.2 367.1 1156.6 374.8C1161 382.5 1161.2 394.1 1165.8 401.1C1170.4 408.1 1180.1 410.3 1184.3 416.9C1188.5 423.5 1187.6 432.7 1190.9 440.6C1194.2 448.5 1200.3 457.3 1204 464.3C1207.7 471.3 1211.2 475.3 1213.2 482.8C1215.2 490.3 1216.3 501.2 1215.9 509.1C1215.5 517 1212.6 523.6 1210.6 530.2C1208.6 536.8 1206.2 546.9 1204 548.6C1201.8 550.4 1198.9 545.5 1197.4 540.7C1195.9 535.9 1195.7 526.6 1194.8 519.6C1193.9 512.6 1193.5 505.6 1192.2 498.6C1190.9 491.6 1190 482.8 1186.9 477.5C1183.8 472.2 1177.7 472.3 1173.7 467C1169.8 461.7 1166.1 452.9 1163.2 445.9C1160.3 438.9 1159.7 430.9 1156.6 424.8C1153.5 418.7 1148.5 413.4 1144.8 409C1141.1 404.6 1137.5 403.8 1134.2 398.5C1130.9 393.2 1124.1 384.6 1125 377.4C1125.9 370.1 1134.2 355.4 1139.5 355Z" fill="#2c050c"/><g transform="translate(1127.8 371.9) rotate(25)"><ellipse rx="6" ry="5.1" fill="#430714"/><ellipse cx="-1.2" cy="-1.2" rx="3.6" ry="2.8" fill="#6a0f22"/><ellipse cx="-1.8" cy="-1.8" rx="1.5" ry="1.1" fill="#8e1c32"/></g><g transform="translate(1133.1 364.6) rotate(25)"><ellipse rx="6" ry="5.1" fill="#430714"/><ellipse cx="-1.2" cy="-1.2" rx="3.6" ry="2.8" fill="#6a0f22"/><ellipse cx="-1.8" cy="-1.8" rx="1.5" ry="1.1" fill="#8e1c32"/></g><g transform="translate(1138.7 355.6) rotate(25)"><ellipse rx="6" ry="5.1" fill="#430714"/><ellipse cx="-1.2" cy="-1.2" rx="3.6" ry="2.8" fill="#6a0f22"/><ellipse cx="-1.8" cy="-1.8" rx="1.5" ry="1.1" fill="#8e1c32"/></g><g transform="translate(1129.7 387) rotate(25)"><ellipse rx="5.8" ry="5" fill="#430714"/><ellipse cx="-1.2" cy="-1.2" rx="3.5" ry="2.7" fill="#6a0f22"/><ellipse cx="-1.8" cy="-1.8" rx="1.5" ry="1.1" fill="#8e1c32"/></g><g transform="translate(1136.6 377.5) rotate(25)"><ellipse rx="5.8" ry="5" fill="#430714"/><ellipse cx="-1.2" cy="-1.2" rx="3.5" ry="2.7" fill="#6a0f22"/><ellipse cx="-1.8" cy="-1.8" rx="1.5" ry="1.1" fill="#8e1c32"/></g><g transform="translate(1144.9 370.6) rotate(25)"><ellipse rx="5.8" ry="5" fill="#430714"/><ellipse cx="-1.2" cy="-1.2" rx="3.5" ry="2.7" fill="#6a0f22"/><ellipse cx="-1.8" cy="-1.8" rx="1.5" ry="1.1" fill="#8e1c32"/></g><g transform="translate(1140.8 392.5) rotate(25)"><ellipse rx="5.7" ry="4.8" fill="#430714"/><ellipse cx="-1.1" cy="-1.1" rx="3.4" ry="2.7" fill="#6a0f22"/><ellipse cx="-1.7" cy="-1.7" rx="1.4" ry="1.1" fill="#8e1c32"/></g><g transform="translate(1147.7 383.6) rotate(25)"><ellipse rx="5.7" ry="4.8" fill="#430714"/><ellipse cx="-1.1" cy="-1.1" rx="3.4" ry="2.7" fill="#6a0f22"/><ellipse cx="-1.7" cy="-1.7" rx="1.4" ry="1.1" fill="#8e1c32"/></g><g transform="translate(1155.1 377.9) rotate(25)"><ellipse rx="5.7" ry="4.8" fill="#430714"/><ellipse cx="-1.1" cy="-1.1" rx="3.4" ry="2.7" fill="#6a0f22"/><ellipse cx="-1.7" cy="-1.7" rx="1.4" ry="1.1" fill="#8e1c32"/></g><g transform="translate(1141.4 403.2) rotate(25)"><ellipse rx="5.5" ry="4.7" fill="#430714"/><ellipse cx="-1.1" cy="-1.1" rx="3.3" ry="2.6" fill="#6a0f22"/><ellipse cx="-1.7" cy="-1.7" rx="1.4" ry="1" fill="#8e1c32"/></g><g transform="translate(1149.1 395.9) rotate(25)"><ellipse rx="5.5" ry="4.7" fill="#430714"/><ellipse cx="-1.1" cy="-1.1" rx="3.3" ry="2.6" fill="#6a0f22"/><ellipse cx="-1.7" cy="-1.7" rx="1.4" ry="1" fill="#8e1c32"/></g><g transform="translate(1156.5 392.2) rotate(25)"><ellipse rx="5.5" ry="4.7" fill="#430714"/><ellipse cx="-1.1" cy="-1.1" rx="3.3" ry="2.6" fill="#6a0f22"/><ellipse cx="-1.7" cy="-1.7" rx="1.4" ry="1" fill="#8e1c32"/></g><g transform="translate(1152.1 404.6) rotate(25)"><ellipse rx="5.4" ry="4.6" fill="#430714"/><ellipse cx="-1.1" cy="-1.1" rx="3.2" ry="2.5" fill="#6a0f22"/><ellipse cx="-1.6" cy="-1.6" rx="1.3" ry="1" fill="#8e1c32"/></g><g transform="translate(1164.3 402) rotate(25)"><ellipse rx="5.4" ry="4.6" fill="#430714"/><ellipse cx="-1.1" cy="-1.1" rx="3.2" ry="2.5" fill="#6a0f22"/><ellipse cx="-1.6" cy="-1.6" rx="1.3" ry="1" fill="#8e1c32"/></g><g transform="translate(1153.4 417.4) rotate(25)"><ellipse rx="5.2" ry="4.4" fill="#430714"/><ellipse cx="-1" cy="-1" rx="3.1" ry="2.4" fill="#6a0f22"/><ellipse cx="-1.6" cy="-1.6" rx="1.3" ry="1" fill="#8e1c32"/></g><g transform="translate(1161.5 414.9) rotate(25)"><ellipse rx="5.2" ry="4.4" fill="#430714"/><ellipse cx="-1" cy="-1" rx="3.1" ry="2.4" fill="#6a0f22"/><ellipse cx="-1.6" cy="-1.6" rx="1.3" ry="1" fill="#8e1c32"/></g><g transform="translate(1168.6 411.9) rotate(25)"><ellipse rx="5.2" ry="4.4" fill="#430714"/><ellipse cx="-1" cy="-1" rx="3.1" ry="2.4" fill="#6a0f22"/><ellipse cx="-1.6" cy="-1.6" rx="1.3" ry="1" fill="#8e1c32"/></g><g transform="translate(1163.4 424.1) rotate(25)"><ellipse rx="5" ry="4.3" fill="#430714"/><ellipse cx="-1" cy="-1" rx="3" ry="2.4" fill="#6a0f22"/><ellipse cx="-1.5" cy="-1.5" rx="1.3" ry="0.9" fill="#8e1c32"/></g><g transform="translate(1173.9 419) rotate(25)"><ellipse rx="5" ry="4.3" fill="#430714"/><ellipse cx="-1" cy="-1" rx="3" ry="2.4" fill="#6a0f22"/><ellipse cx="-1.5" cy="-1.5" rx="1.3" ry="0.9" fill="#8e1c32"/></g><g transform="translate(1180.9 416.7) rotate(25)"><ellipse rx="5" ry="4.3" fill="#430714"/><ellipse cx="-1" cy="-1" rx="3" ry="2.4" fill="#6a0f22"/><ellipse cx="-1.5" cy="-1.5" rx="1.3" ry="0.9" fill="#8e1c32"/></g><g transform="translate(1163.6 434.6) rotate(25)"><ellipse rx="4.9" ry="4.1" fill="#430714"/><ellipse cx="-1" cy="-1" rx="2.9" ry="2.3" fill="#6a0f22"/><ellipse cx="-1.5" cy="-1.5" rx="1.2" ry="0.9" fill="#8e1c32"/></g><g transform="translate(1171.8 432) rotate(25)"><ellipse rx="4.9" ry="4.1" fill="#430714"/><ellipse cx="-1" cy="-1" rx="2.9" ry="2.3" fill="#6a0f22"/><ellipse cx="-1.5" cy="-1.5" rx="1.2" ry="0.9" fill="#8e1c32"/></g><g transform="translate(1180.7 430.1) rotate(25)"><ellipse rx="4.9" ry="4.1" fill="#430714"/><ellipse cx="-1" cy="-1" rx="2.9" ry="2.3" fill="#6a0f22"/><ellipse cx="-1.5" cy="-1.5" rx="1.2" ry="0.9" fill="#8e1c32"/></g><g transform="translate(1169.7 444.8) rotate(25)"><ellipse rx="4.7" ry="4" fill="#430714"/><ellipse cx="-0.9" cy="-0.9" rx="2.8" ry="2.2" fill="#6a0f22"/><ellipse cx="-1.4" cy="-1.4" rx="1.2" ry="0.9" fill="#8e1c32"/></g><g transform="translate(1179.6 444) rotate(25)"><ellipse rx="4.7" ry="4" fill="#430714"/><ellipse cx="-0.9" cy="-0.9" rx="2.8" ry="2.2" fill="#6a0f22"/><ellipse cx="-1.4" cy="-1.4" rx="1.2" ry="0.9" fill="#8e1c32"/></g><g transform="translate(1189.1 442.3) rotate(25)"><ellipse rx="4.7" ry="4" fill="#430714"/><ellipse cx="-0.9" cy="-0.9" rx="2.8" ry="2.2" fill="#6a0f22"/><ellipse cx="-1.4" cy="-1.4" rx="1.2" ry="0.9" fill="#8e1c32"/></g><g transform="translate(1171.9 457.6) rotate(25)"><ellipse rx="4.6" ry="3.9" fill="#430714"/><ellipse cx="-0.9" cy="-0.9" rx="2.7" ry="2.1" fill="#6a0f22"/><ellipse cx="-1.4" cy="-1.4" rx="1.1" ry="0.9" fill="#8e1c32"/></g><g transform="translate(1181 453.8) rotate(25)"><ellipse rx="4.6" ry="3.9" fill="#430714"/><ellipse cx="-0.9" cy="-0.9" rx="2.7" ry="2.1" fill="#6a0f22"/><ellipse cx="-1.4" cy="-1.4" rx="1.1" ry="0.9" fill="#8e1c32"/></g><g transform="translate(1191.3 454.8) rotate(25)"><ellipse rx="4.6" ry="3.9" fill="#430714"/><ellipse cx="-0.9" cy="-0.9" rx="2.7" ry="2.1" fill="#6a0f22"/><ellipse cx="-1.4" cy="-1.4" rx="1.1" ry="0.9" fill="#8e1c32"/></g><g transform="translate(1182.5 466.5) rotate(25)"><ellipse rx="4.4" ry="3.7" fill="#430714"/><ellipse cx="-0.9" cy="-0.9" rx="2.6" ry="2.1" fill="#6a0f22"/><ellipse cx="-1.3" cy="-1.3" rx="1.1" ry="0.8" fill="#8e1c32"/></g><g transform="translate(1192 464.6) rotate(25)"><ellipse rx="4.4" ry="3.7" fill="#430714"/><ellipse cx="-0.9" cy="-0.9" rx="2.6" ry="2.1" fill="#6a0f22"/><ellipse cx="-1.3" cy="-1.3" rx="1.1" ry="0.8" fill="#8e1c32"/></g><g transform="translate(1202.5 464.7) rotate(25)"><ellipse rx="4.4" ry="3.7" fill="#430714"/><ellipse cx="-0.9" cy="-0.9" rx="2.6" ry="2.1" fill="#6a0f22"/><ellipse cx="-1.3" cy="-1.3" rx="1.1" ry="0.8" fill="#8e1c32"/></g><g transform="translate(1182 471) rotate(25)"><ellipse rx="4.2" ry="3.6" fill="#430714"/><ellipse cx="-0.8" cy="-0.8" rx="2.5" ry="2" fill="#6a0f22"/><ellipse cx="-1.3" cy="-1.3" rx="1.1" ry="0.8" fill="#8e1c32"/></g><g transform="translate(1193.2 474.3) rotate(25)"><ellipse rx="4.2" ry="3.6" fill="#430714"/><ellipse cx="-0.8" cy="-0.8" rx="2.5" ry="2" fill="#6a0f22"/><ellipse cx="-1.3" cy="-1.3" rx="1.1" ry="0.8" fill="#8e1c32"/></g><g transform="translate(1200.3 474.1) rotate(25)"><ellipse rx="4.2" ry="3.6" fill="#430714"/><ellipse cx="-0.8" cy="-0.8" rx="2.5" ry="2" fill="#6a0f22"/><ellipse cx="-1.3" cy="-1.3" rx="1.1" ry="0.8" fill="#8e1c32"/></g><g transform="translate(1193.2 477.8) rotate(25)"><ellipse rx="4.1" ry="3.5" fill="#430714"/><ellipse cx="-0.8" cy="-0.8" rx="2.4" ry="1.9" fill="#6a0f22"/><ellipse cx="-1.2" cy="-1.2" rx="1" ry="0.8" fill="#8e1c32"/></g><g transform="translate(1201.6 481.4) rotate(25)"><ellipse rx="4.1" ry="3.5" fill="#430714"/><ellipse cx="-0.8" cy="-0.8" rx="2.4" ry="1.9" fill="#6a0f22"/><ellipse cx="-1.2" cy="-1.2" rx="1" ry="0.8" fill="#8e1c32"/></g><g transform="translate(1212.1 481) rotate(25)"><ellipse rx="4.1" ry="3.5" fill="#430714"/><ellipse cx="-0.8" cy="-0.8" rx="2.4" ry="1.9" fill="#6a0f22"/><ellipse cx="-1.2" cy="-1.2" rx="1" ry="0.8" fill="#8e1c32"/></g><g transform="translate(1192 487.3) rotate(25)"><ellipse rx="3.9" ry="3.3" fill="#430714"/><ellipse cx="-0.8" cy="-0.8" rx="2.4" ry="1.8" fill="#6a0f22"/><ellipse cx="-1.2" cy="-1.2" rx="1" ry="0.7" fill="#8e1c32"/></g><g transform="translate(1200.6 490.8) rotate(25)"><ellipse rx="3.9" ry="3.3" fill="#430714"/><ellipse cx="-0.8" cy="-0.8" rx="2.4" ry="1.8" fill="#6a0f22"/><ellipse cx="-1.2" cy="-1.2" rx="1" ry="0.7" fill="#8e1c32"/></g><g transform="translate(1209.4 495.4) rotate(25)"><ellipse rx="3.9" ry="3.3" fill="#430714"/><ellipse cx="-0.8" cy="-0.8" rx="2.4" ry="1.8" fill="#6a0f22"/><ellipse cx="-1.2" cy="-1.2" rx="1" ry="0.7" fill="#8e1c32"/></g><g transform="translate(1198.1 502.7) rotate(25)"><ellipse rx="3.8" ry="3.2" fill="#430714"/><ellipse cx="-0.8" cy="-0.8" rx="2.3" ry="1.8" fill="#6a0f22"/><ellipse cx="-1.1" cy="-1.1" rx="0.9" ry="0.7" fill="#8e1c32"/></g><g transform="translate(1205.5 503.5) rotate(25)"><ellipse rx="3.8" ry="3.2" fill="#430714"/><ellipse cx="-0.8" cy="-0.8" rx="2.3" ry="1.8" fill="#6a0f22"/><ellipse cx="-1.1" cy="-1.1" rx="0.9" ry="0.7" fill="#8e1c32"/></g><g transform="translate(1214.2 506.8) rotate(25)"><ellipse rx="3.8" ry="3.2" fill="#430714"/><ellipse cx="-0.8" cy="-0.8" rx="2.3" ry="1.8" fill="#6a0f22"/><ellipse cx="-1.1" cy="-1.1" rx="0.9" ry="0.7" fill="#8e1c32"/></g><g transform="translate(1195.1 510.1) rotate(25)"><ellipse rx="3.6" ry="3.1" fill="#430714"/><ellipse cx="-0.7" cy="-0.7" rx="2.2" ry="1.7" fill="#6a0f22"/><ellipse cx="-1.1" cy="-1.1" rx="0.9" ry="0.7" fill="#8e1c32"/></g><g transform="translate(1206.2 514.7) rotate(25)"><ellipse rx="3.6" ry="3.1" fill="#430714"/><ellipse cx="-0.7" cy="-0.7" rx="2.2" ry="1.7" fill="#6a0f22"/><ellipse cx="-1.1" cy="-1.1" rx="0.9" ry="0.7" fill="#8e1c32"/></g><g transform="translate(1199.4 524.7) rotate(25)"><ellipse rx="3.4" ry="2.9" fill="#430714"/><ellipse cx="-0.7" cy="-0.7" rx="2.1" ry="1.6" fill="#6a0f22"/><ellipse cx="-1" cy="-1" rx="0.9" ry="0.6" fill="#8e1c32"/></g><g transform="translate(1208.1 530.3) rotate(25)"><ellipse rx="3.4" ry="2.9" fill="#430714"/><ellipse cx="-0.7" cy="-0.7" rx="2.1" ry="1.6" fill="#6a0f22"/><ellipse cx="-1" cy="-1" rx="0.9" ry="0.6" fill="#8e1c32"/></g><g transform="translate(1198.7 530.9) rotate(25)"><ellipse rx="3.4" ry="2.9" fill="#430714"/><ellipse cx="-0.7" cy="-0.7" rx="2" ry="1.6" fill="#6a0f22"/><ellipse cx="-1" cy="-1" rx="0.8" ry="0.6" fill="#8e1c32"/></g><g transform="translate(1203 536) rotate(25)"><ellipse rx="3.4" ry="2.9" fill="#430714"/><ellipse cx="-0.7" cy="-0.7" rx="2" ry="1.6" fill="#6a0f22"/><ellipse cx="-1" cy="-1" rx="0.8" ry="0.6" fill="#8e1c32"/></g><path d="M1209.5 531.8h1.4v1.4h-1.4zM1203.9 531.6h1.4v1.4h-1.4zM1174.9 442.2h1.4v1.4h-1.4zM1184.6 454.7h1.4v1.4h-1.4zM1152.7 370.9h1.4v1.4h-1.4zM1192.6 465.6h1.4v1.4h-1.4zM1158.9 405h1.4v1.4h-1.4zM1212.3 515.7h1.4v1.4h-1.4zM1171.6 461.4h1.4v1.4h-1.4zM1134.3 397h1.4v1.4h-1.4zM1190.4 469.3h1.4v1.4h-1.4zM1181.5 468.6h1.4v1.4h-1.4zM1192 476.9h1.4v1.4h-1.4zM1208.6 484.5h1.4v1.4h-1.4zM1153.6 412.1h1.4v1.4h-1.4zM1171 450.1h1.4v1.4h-1.4zM1192.7 492h1.4v1.4h-1.4zM1204.1 480.3h1.4v1.4h-1.4zM1183.2 428.3h1.4v1.4h-1.4zM1161.7 404.4h1.4v1.4h-1.4zM1174.9 440.9h1.4v1.4h-1.4zM1162.7 441.2h1.4v1.4h-1.4zM1181.8 425.5h1.4v1.4h-1.4zM1164.1 420h1.4v1.4h-1.4zM1150.1 403.2h1.4v1.4h-1.4zM1162.1 411.6h1.4v1.4h-1.4zM1186.4 453.1h1.4v1.4h-1.4zM1179.4 453h1.4v1.4h-1.4zM1187.8 480.8h1.4v1.4h-1.4zM1207.1 537.7h1.4v1.4h-1.4zM1169.5 421.9h1.4v1.4h-1.4zM1201.1 544.3h1.4v1.4h-1.4zM1186.1 438.1h1.4v1.4h-1.4zM1171.3 447.2h1.4v1.4h-1.4zM1148.3 380.1h1.4v1.4h-1.4zM1187.4 438.7h1.4v1.4h-1.4zM1136 361h1.4v1.4h-1.4zM1156.6 415.1h1.4v1.4h-1.4zM1137.5 378.9h1.4v1.4h-1.4zM1143.4 397.5h1.4v1.4h-1.4zM1205 537h1.4v1.4h-1.4zM1180.2 469.2h1.4v1.4h-1.4zM1153.6 383.7h1.4v1.4h-1.4zM1154.7 422h1.4v1.4h-1.4zM1194.3 480.1h1.4v1.4h-1.4zM1184.9 457h1.4v1.4h-1.4zM1143.5 369.5h1.4v1.4h-1.4zM1149.4 377.3h1.4v1.4h-1.4zM1127.2 378.5h1.4v1.4h-1.4zM1134.7 393.4h1.4v1.4h-1.4zM1197.8 531.4h1.4v1.4h-1.4zM1152.1 390.4h1.4v1.4h-1.4zM1172.5 452.7h1.4v1.4h-1.4zM1183 471.6h1.4v1.4h-1.4zM1139.3 383.6h1.4v1.4h-1.4z" fill="#c4c4c8"/><path d="M1207.3 545h1.6v1.6h-1.6zM1206.6 547h1.6v1.6h-1.6zM1206.3 549h1.6v1.6h-1.6zM1206.2 551h1.6v1.6h-1.6zM1205.8 553h1.6v1.6h-1.6zM1203.1 555h1.6v1.6h-1.6zM1203.7 557h1.6v1.6h-1.6zM1202 559h1.6v1.6h-1.6zM1200.1 561h1.6v1.6h-1.6zM1198.8 563h1.6v1.6h-1.6zM1198.2 565h1.6v1.6h-1.6zM1198 567h1.6v1.6h-1.6zM1195.8 569h1.6v1.6h-1.6zM1195.8 571h1.6v1.6h-1.6z" fill="#e8e8ec"/><path d="M730 585V609.5" stroke="#8a8a3a" stroke-width="1"/><path d="M730 609.5L757.800 614" stroke="#a01c1c" stroke-width="1.2"/><path d="M730 609.5L740.500 596.600" stroke="#2c3f8c" stroke-width="1"/><text x="731" y="584" font-size="10" fill="#8a8a3a" font-weight="bold">z</text><text x="741" y="598" font-size="11" fill="#2a4cb0" font-weight="bold">y</text><text x="758" y="617" font-size="11" fill="#a01c1c" font-weight="bold">x</text><g fill="none" stroke="#f0bc5c"><circle cx="1299.6" cy="171" r="17.8" stroke-width="1.4"/><circle cx="1299.6" cy="171" r="12.6" stroke-width="1.2"/><path d="M1301 156.500 Q1312 160 1316 172 M1302 160 Q1310 163 1313 172 M1284 176 Q1288 185 1297 187 M1287.500 178 Q1291 184 1298 185.500" stroke-width="1" stroke="#f4dca8"/></g><path d="M1293.500 148.500 L1299 144.500 L1306 146.500 L1307 150.500 L1298 154.500Z" fill="#3a56b8" stroke="#7e96e4" stroke-width="1"/><path d="M1298 154.500L1299.500 147L1306 146.500M1293.500 148.500L1299.500 147" stroke="#9fb2ee" stroke-width=".8" fill="none"/><rect x="693" y="132" width="93" height="18" fill="#c3cfdb"/><text x="699" y="145.5" font-size="13" font-weight="bold" fill="#465a6e" textLength="78" lengthAdjust="spacingAndGlyphs">Perspective</text>
</svg>
<svg style="left:42px;top:651px" width="645" height="513" viewBox="42 651 645 513">
<rect x="42" y="651" width="645" height="513" fill="#000"/>
<path d="M50.5 651V1164M68.5 651V1164M106.5 651V1164M124.5 651V1164M143.5 651V1164M162.5 651V1164M199.5 651V1164M217.5 651V1164M236.5 651V1164M255.5 651V1164M292.5 651V1164M311.5 651V1164M329.5 651V1164M348.5 651V1164M385.5 651V1164M404.5 651V1164M422.5 651V1164M441.5 651V1164M478.5 651V1164M497.5 651V1164M516.5 651V1164M534.5 651V1164M571.5 651V1164M590.5 651V1164M609.5 651V1164M627.5 651V1164M665.5 651V1164M683.5 651V1164M42 659.5H687M42 696.5H687M42 715.5H687M42 734.5H687M42 752.5H687M42 790.5H687M42 808.5H687M42 827.5H687M42 845.5H687M42 883.5H687M42 901.5H687M42 920.5H687M42 939.5H687M42 976.5H687M42 994.5H687M42 1013.5H687M42 1032.5H687M42 1069.5H687M42 1088.5H687M42 1106.5H687M42 1125.5H687M42 1162.5H687" stroke="#3e3e3e" stroke-width="1" fill="none" shape-rendering="crispEdges"/>
<path d="M87.5 651V1164M180.5 651V1164M273.5 651V1164M367.5 651V1164M460.5 651V1164M553.5 651V1164M646.5 651V1164M42 678.5H687M42 771.5H687M42 864.5H687M42 957.5H687M42 1050.5H687M42 1144.5H687" stroke="#838383" stroke-width="1" fill="none" shape-rendering="crispEdges"/>
<path d="M367 651V957.7" stroke="#2a4284" stroke-width="2"/><path d="M367 958H687" stroke="#861818" stroke-width="2"/><defs>
<radialGradient id="fg1" gradientUnits="userSpaceOnUse" cx="367" cy="957.4" r="190"><stop offset=".855" stop-color="#57bd3e"/><stop offset=".875" stop-color="#6ed24e"/><stop offset=".91" stop-color="#4aa836"/><stop offset=".95" stop-color="#3a8e2a"/><stop offset=".99" stop-color="#2a6e1e"/></radialGradient>
<linearGradient id="fgm" x1="0" y1="0" x2="0" y2="1"><stop offset="0" stop-color="#6fe04e"/><stop offset=".5" stop-color="#2c7a1c"/><stop offset="1" stop-color="#58c23c"/></linearGradient>
<pattern id="mesh" width="3" height="3" patternUnits="userSpaceOnUse"><rect width="3" height="3" fill="#2a6e1a"/><path d="M0 .5H3M.5 0V3" stroke="#84f260" stroke-width="1"/></pattern>
<pattern id="mesh2" width="4" height="4" patternUnits="userSpaceOnUse" patternTransform="rotate(32)"><rect width="4" height="4" fill="#2f7a1e"/><path d="M0 .5H4M.5 0V4" stroke="#84f260" stroke-width="1.1"/></pattern>
<pattern id="mesh3" width="4" height="4" patternUnits="userSpaceOnUse" patternTransform="rotate(-32)"><rect width="4" height="4" fill="#2f7a1e"/><path d="M0 .5H4M.5 0V4" stroke="#84f260" stroke-width="1.1"/></pattern>
</defs><path d="M367 684.4L341.7 684.4L319.4 700.3L312 703L296 704L289.5 710L289.5 731L289 735.4L276.3 761L260.3 781.7L247.6 796L230 813.6L214.9 839.5L191.1 878.4L178.1 912.9L174.3 956.2L174.3 957.4L175 974.2L177.3 990.9L180.9 1007.3L186 1023.3L192.5 1038.8L200.4 1053.6L209.5 1067.7L219.8 1080.9L231.2 1093.2L243.6 1104.4L257 1114.5L271.2 1123.3L286.1 1130.9L301.6 1137.1L317.5 1142L333.9 1145.4L350.4 1147.4L367 1147.9L383.6 1147.4L400.1 1145.4L416.5 1142L432.4 1137.1L447.9 1130.9L462.8 1123.3L477 1114.5L490.4 1104.4L502.8 1093.2L514.2 1080.9L524.5 1067.7L533.6 1053.6L541.5 1038.8L548 1023.3L553.1 1007.3L556.7 990.9L559 974.2L559.7 957.4L559.7 956.2L555.9 912.9L542.9 878.4L519.1 839.5L504 813.6L486.4 796L473.7 781.7L457.7 761L445 735.4L444.5 731L444.5 710L438 704L422 703L414.6 700.3L392.3 684.4L367 684.4Z" fill="#80f05c"/><path d="M207.8 872.7L203.2 881L199.1 889.6L195.5 898.3L192.3 907.3L189.6 916.4L187.4 925.7L185.6 935.1L184.4 944.6L183.6 954.2L183.4 963.8L183.6 973.4L184.4 983.1L185.6 992.7L187.4 1002.2L189.6 1011.6L192.4 1020.9L195.7 1030.1L199.4 1039.1L203.6 1048L208.3 1056.6L212.5 1065.6L218.4 1073.5L224.7 1081.1L231.3 1088.4L238.4 1095.3L245.8 1101.9L253.5 1108L261.5 1113.8L269.9 1119.1L278.5 1123.9L287.3 1128.3L296.3 1132.3L305.6 1135.7L315 1138.7L324.6 1141.2L334.2 1143.1L344 1144.6L353.8 1145.5L363.7 1146L373.6 1145.9L383.4 1145.3L393.2 1144.2L403 1142.5L412.6 1140.4L422.1 1137.8L431.5 1134.6L440.7 1131L449.7 1126.9L458.4 1122.4L466.9 1117.3L475.2 1111.9L483.1 1106L490.7 1099.7L498 1093.1L504.9 1086L511.5 1078.6L517.6 1070.9L522.4 1062.2L527.3 1053.7L531.9 1045.1L535.9 1036.2L539.5 1027.1L542.6 1017.9L545.2 1008.5L547.3 999L548.9 989.5L550 979.9L550.5 970.2L550.6 960.6L550.2 951L549.3 941.5L547.8 932L545.9 922.6L543.5 913.4L540.7 904.3L537.3 895.4L533.5 886.7L529.3 878.2L511.1 880.8L514.9 888.4L518.3 896.3L521.3 904.3L523.9 912.4L526 920.7L527.7 929.1L529 937.5L529.8 946L530.2 954.6L530.1 963.1L529.6 971.6L528.6 980.1L527.2 988.5L525.4 996.9L523.1 1005.1L520.4 1013.2L517.2 1021.2L513.7 1028.9L509.7 1036.5L505.4 1043.9L500.7 1051L495.6 1057.9L490.2 1064.5L484.4 1070.8L478.3 1076.8L471.9 1082.4L465.2 1087.7L458.3 1092.7L451.1 1097.3L443.6 1101.5L436 1105.3L428.1 1108.7L420.1 1111.7L412 1114.3L403.7 1116.4L395.3 1118.1L386.9 1119.4L378.4 1120.2L369.8 1120.6L361.3 1120.5L352.8 1120L344.3 1119L335.9 1117.6L327.5 1115.8L319.3 1113.5L311.2 1110.8L303.2 1107.6L295.5 1104.1L287.9 1100.1L280.5 1095.8L273.4 1091.1L266.5 1086L259.9 1080.6L253.6 1074.8L247.6 1068.7L242 1062.3L236.7 1055.6L231.7 1048.7L227.1 1041.5L222.9 1034L219.1 1026.4L215.7 1018.5L212.7 1010.5L210.1 1002.4L208 994.1L206.3 985.7L205 977.3L204.2 968.8L203.8 960.2L203.9 951.7L204.4 943.2L205.4 934.7L206.8 926.3L208.6 917.9L210.9 909.7L213.6 901.6L216.8 893.6L220.3 885.9Z" fill="url(#fg1)"/><circle cx="367" cy="957.4" r="162" fill="#d050d0"/><circle cx="367" cy="957.4" r="161" fill="#000"/><clipPath id="hole"><circle cx="367" cy="957.4" r="161"/></clipPath><g clip-path="url(#hole)"><path d="M217.5 795V1120M236.5 795V1120M255.5 795V1120M292.5 795V1120M311.5 795V1120M329.5 795V1120M348.5 795V1120M385.5 795V1120M404.5 795V1120M422.5 795V1120M441.5 795V1120M478.5 795V1120M497.5 795V1120M516.5 795V1120M204 808.5H531M204 827.5H531M204 845.5H531M204 883.5H531M204 901.5H531M204 920.5H531M204 939.5H531M204 976.5H531M204 994.5H531M204 1013.5H531M204 1032.5H531M204 1069.5H531M204 1088.5H531M204 1106.5H531" stroke="#3e3e3e" stroke-width="1" fill="none" shape-rendering="crispEdges"/>
<path d="M273.5 795V1120M367.5 795V1120M460.5 795V1120M204 864.5H531M204 957.5H531M204 1050.5H531" stroke="#838383" stroke-width="1" fill="none" shape-rendering="crispEdges"/>
<path d="M367 790V957.7" stroke="#2a4284" stroke-width="2"/><path d="M367 958H540" stroke="#861818" stroke-width="2"/></g><path d="M321.3 733.9L354.9 733.9L363.3 742.3L349 757.1L339.1 751.2L327.3 745.3L316.4 741.3Z" fill="#000"/><path d="M412.7 733.9L379.1 733.9L370.7 742.3L385 757.1L394.9 751.2L406.7 745.3L417.6 741.3Z" fill="#000"/><path d="M301.6 765L316.4 780.8L285.8 793.7Z" fill="#000"/><path d="M432.4 765L417.6 780.8L448.2 793.7Z" fill="#000"/><defs><linearGradient id="bzg" x1="0" y1="0" x2="1" y2="0"><stop offset="0" stop-color="#2f7a20"/><stop offset=".15" stop-color="#5cb840"/><stop offset=".3" stop-color="#3c8a28"/><stop offset=".75" stop-color="#1f5a14"/><stop offset=".93" stop-color="#0d2c07"/><stop offset="1" stop-color="#2a6e1c"/></linearGradient></defs><rect x="292.500" y="713" width="149.500" height="19" fill="url(#bzg)"/><path d="M295.5 713V732M302.7 713V732M309.9 713V732M317.1 713V732M324.3 713V732M331.5 713V732M338.7 713V732M345.9 713V732M353.1 713V732M360.3 713V732M367.5 713V732M374.7 713V732M381.9 713V732M389.1 713V732M396.3 713V732M403.5 713V732M410.7 713V732M417.9 713V732M425.1 713V732M432.3 713V732M439.5 713V732M292.500 713.5H442M292.500 717.5H442M292.500 725.5H442M292.500 729.5H442M292.500 732H442" stroke="#7ff05c" stroke-width="1.1" fill="none"/><path d="M299.1 713V717.500M299.1 725.500V732M306.3 713V717.500M306.3 725.500V732M313.5 713V717.500M313.5 725.500V732M320.7 713V717.500M320.7 725.500V732M327.9 713V717.500M327.9 725.500V732M335.1 713V717.500M335.1 725.500V732M342.3 713V717.500M342.3 725.500V732M349.5 713V717.500M349.5 725.500V732M356.7 713V717.500M356.7 725.500V732M363.9 713V717.500M363.9 725.500V732M371.1 713V717.500M371.1 725.500V732M378.3 713V717.500M378.3 725.500V732M385.5 713V717.500M385.5 725.500V732M392.7 713V717.500M392.7 725.500V732M399.9 713V717.500M399.9 725.500V732M407.1 713V717.500M407.1 725.500V732M414.3 713V717.500M414.3 725.500V732M421.5 713V717.500M421.5 725.500V732M428.7 713V717.500M428.7 725.500V732M435.9 713V717.500M435.9 725.500V732" stroke="#7ff05c" stroke-width=".9" fill="none" opacity=".8"/><path d="M296 737L318 737L303 763L288 790L262 823L243 850L226 845L246 812L268 782L283 760Z" fill="url(#mesh2)"/><path d="M438 737L416 737L431 763L446 790L472 823L491 850L508 845L488 812L466 782L451 760Z" fill="url(#mesh3)"/><path d="M226 845L243 850L231 876L211 878L215 864Z" fill="url(#mesh2)"/><path d="M508 845L491 850L503 876L523 878L519 864Z" fill="url(#mesh3)"/><path d="M479.5 823.3L474.7 819.5L469.9 815.8L464.9 812.3L459.7 809L454.5 805.8L449.2 802.9L443.7 800.1L438.2 797.5L432.6 795.1L426.9 793L421.1 791L415.2 789.2L409.3 787.6L403.4 786.2L397.4 785.1L395.4 796.4L401 797.5L406.6 798.8L412.1 800.2L417.5 801.9L422.9 803.8L428.2 805.8L433.5 808L438.7 810.4L443.8 813L448.8 815.8L453.6 818.7L458.4 821.9L463.1 825.1L467.7 828.6L472.1 832.2Z" fill="#2f7a1e"/><path d="M336.6 785.1L330.6 786.2L324.7 787.6L318.8 789.2L312.9 791L307.1 793L301.4 795.1L295.8 797.5L290.3 800.1L284.8 802.9L279.5 805.8L274.3 809L269.1 812.3L264.1 815.8L259.3 819.5L254.5 823.3L261.9 832.2L266.3 828.6L270.9 825.1L275.6 821.9L280.4 818.7L285.3 815.8L290.2 813L295.3 810.4L300.5 808L305.8 805.8L311.1 803.8L316.5 801.9L321.9 800.2L327.4 798.8L333 797.5L338.6 796.4Z" fill="#2f7a1e"/><path d="M471.8 832.5L479.8 823M465.1 827.2L472.6 817.2M458.1 822.3L465.1 811.9M451 817.7L457.4 807M443.5 813.5L449.4 802.4M435.9 809.7L441.2 798.3M428.1 806.3L432.7 794.7M420.1 803.3L424.1 791.5M411.9 800.7L415.4 788.7M403.7 798.6L406.5 786.4M395.3 796.9L397.5 784.6M338.7 796.9L336.5 784.6M330.3 798.6L327.5 786.4M322.1 800.7L318.6 788.7M313.9 803.3L309.9 791.5M305.9 806.3L301.3 794.7M298.1 809.7L292.8 798.3M290.5 813.5L284.6 802.4M283 817.7L276.6 807M275.9 822.3L268.9 811.9M268.9 827.2L261.4 817.2M262.2 832.5L254.2 823" stroke="#80f05c" stroke-width="1.2"/><path d="M259.7 829.5A167 167 0 0 1 474.3 829.5" stroke="#80f05c" stroke-width=".8" fill="none" opacity=".8"/><path d="M257.1 826.4A171 171 0 0 1 476.9 826.4" stroke="#80f05c" stroke-width=".8" fill="none" opacity=".8"/><path d="M240.1 858.3L216.1 839.5M230.5 872.1L204.6 855.9M222.3 886.8L194.9 873.5M215.7 902.3L187 891.9M210.8 918.5L181.2 911.1M207.6 935L177.4 930.7M206.1 951.8L175.6 950.7M206.4 968.6L176 970.8M208.4 985.4L178.4 990.7M212.2 1001.8L182.9 1010.2M217.7 1017.7L189.4 1029.1M224.8 1033L197.9 1047.3M233.5 1047.4L208.2 1064.5M243.7 1060.9L220.3 1080.5M255.2 1073.2L234 1095.2M267.9 1084.3L249.1 1108.3M281.7 1093.9L265.5 1119.8M296.4 1102.1L283.1 1129.5M311.9 1108.7L301.5 1137.4M328.1 1113.6L320.7 1143.2M344.6 1116.8L340.3 1147M361.4 1118.3L360.3 1148.8M378.2 1118L380.4 1148.4M395 1116L400.3 1146M411.4 1112.2L419.8 1141.5M427.3 1106.7L438.7 1135M442.6 1099.6L456.9 1126.5M457 1090.9L474.1 1116.2M470.5 1080.7L490.1 1104.1M482.8 1069.2L504.8 1090.4M493.9 1056.5L517.9 1075.3M503.5 1042.7L529.4 1058.9M511.7 1028L539.1 1041.3M518.3 1012.5L547 1022.9M523.2 996.3L552.8 1003.7M526.4 979.8L556.6 984.1M527.9 963L558.4 964.1M527.6 946.2L558 944M525.6 929.4L555.6 924.1M521.8 913L551.1 904.6M516.3 897.1L544.6 885.7M509.2 881.8L536.1 867.5M500.5 867.4L525.8 850.3" stroke="#9cf87c" stroke-width="1" opacity=".95"/><circle cx="367" cy="957.4" r="175.5" fill="none" stroke="#a8ff88" stroke-width="1" opacity=".9" stroke-dasharray="765.8 3000" transform="rotate(-35 367 957.4)"/><circle cx="367" cy="957.4" r="189" fill="none" stroke="#a8ff88" stroke-width="1" opacity=".9" stroke-dasharray="824.7 3000" transform="rotate(-35 367 957.4)"/><circle cx="291.4" cy="740.8" r="7.6" fill="#80f05c"/><circle cx="276.5" cy="762.3" r="7.6" fill="#80f05c"/><circle cx="258.7" cy="786.8" r="7.6" fill="#80f05c"/><circle cx="243.4" cy="808.2" r="7.6" fill="#80f05c"/><circle cx="229.8" cy="822.3" r="7.6" fill="#80f05c"/><circle cx="219.2" cy="843.6" r="7.6" fill="#80f05c"/><circle cx="208.7" cy="865" r="7.6" fill="#80f05c"/><circle cx="198.5" cy="883.3" r="7.6" fill="#80f05c"/><circle cx="191.7" cy="905.4" r="7.6" fill="#80f05c"/><circle cx="186.2" cy="928.8" r="7.6" fill="#80f05c"/><circle cx="183.3" cy="954.4" r="7.6" fill="#80f05c"/><circle cx="184.2" cy="977.8" r="7.6" fill="#80f05c"/><circle cx="440.8" cy="740.8" r="7.6" fill="#80f05c"/><circle cx="456.6" cy="762.3" r="7.6" fill="#80f05c"/><circle cx="472.7" cy="785.9" r="7.6" fill="#80f05c"/><circle cx="489.7" cy="809.5" r="7.6" fill="#80f05c"/><circle cx="504.5" cy="835.1" r="7.6" fill="#80f05c"/><circle cx="518.5" cy="858.6" r="7.6" fill="#80f05c"/><circle cx="529.9" cy="882" r="7.6" fill="#80f05c"/><circle cx="539.7" cy="905.4" r="7.6" fill="#80f05c"/><circle cx="546.5" cy="928.8" r="7.6" fill="#80f05c"/><circle cx="550.7" cy="954.4" r="7.6" fill="#80f05c"/><circle cx="551.5" cy="977.8" r="7.6" fill="#80f05c"/><ellipse cx="291.4" cy="740.8" rx="5.6" ry="5.6" fill="#a9c7f7"/><ellipse cx="276.5" cy="762.3" rx="5.6" ry="5.6" fill="#a9c7f7"/><ellipse cx="258.7" cy="786.8" rx="5.6" ry="5.6" fill="#a9c7f7"/><ellipse cx="243.4" cy="808.2" rx="5.6" ry="5.6" fill="#a9c7f7"/><ellipse cx="229.8" cy="822.3" rx="5.6" ry="5.6" fill="#a9c7f7"/><ellipse cx="219.2" cy="843.6" rx="5.6" ry="5.6" fill="#a9c7f7"/><ellipse cx="208.7" cy="865" rx="5.6" ry="5.6" fill="#a9c7f7"/><ellipse cx="198.5" cy="883.3" rx="5.6" ry="5.6" fill="#a9c7f7"/><ellipse cx="191.7" cy="905.4" rx="5.6" ry="5.6" fill="#a9c7f7"/><ellipse cx="186.2" cy="928.8" rx="5.6" ry="5.6" fill="#a9c7f7"/><ellipse cx="183.3" cy="954.4" rx="5.6" ry="5.6" fill="#a9c7f7"/><ellipse cx="184.2" cy="977.8" rx="5.6" ry="5.6" fill="#a9c7f7"/><ellipse cx="440.8" cy="740.8" rx="5.6" ry="5.6" fill="#a9c7f7"/><ellipse cx="456.6" cy="762.3" rx="5.6" ry="5.6" fill="#a9c7f7"/><ellipse cx="472.7" cy="785.9" rx="5.6" ry="5.6" fill="#a9c7f7"/><ellipse cx="489.7" cy="809.5" rx="5.6" ry="5.6" fill="#a9c7f7"/><ellipse cx="504.5" cy="835.1" rx="5.6" ry="5.6" fill="#a9c7f7"/><ellipse cx="518.5" cy="858.6" rx="5.6" ry="5.6" fill="#a9c7f7"/><ellipse cx="529.9" cy="882" rx="5.6" ry="5.6" fill="#a9c7f7"/><ellipse cx="539.7" cy="905.4" rx="5.6" ry="5.6" fill="#a9c7f7"/><ellipse cx="546.5" cy="928.8" rx="5.6" ry="5.6" fill="#a9c7f7"/><ellipse cx="550.7" cy="954.4" rx="5.6" ry="5.6" fill="#a9c7f7"/><ellipse cx="551.5" cy="977.8" rx="5.6" ry="5.6" fill="#a9c7f7"/><path d="M341 684.4L392.7 684.4L415.5 700.5L437 704.5L441.5 712.5L292.5 712.5L297 704.5L318.3 700.5Z" fill="#a9c7f7"/><path d="M346 687L388.5 687L406 699L328 699Z" fill="#6c7b9a"/><clipPath id="crn"><path d="M346 687L388.500 687L406 699L328 699Z"/></clipPath><path d="M330 687L346 699M404 687L388 699M338.5 687L354.5 699M395.5 687L379.5 699M347 687L363 699M387 687L371 699M355.5 687L371.5 699M378.5 687L362.5 699M364 687L380 699M370 687L354 699M372.5 687L388.5 699M361.5 687L345.5 699M381 687L397 699M353 687L337 699M389.5 687L405.5 699M344.5 687L328.5 699M398 687L414 699M336 687L320 699M406.5 687L422.5 699M327.5 687L311.5 699M367 686V700M336 693H398" stroke="#a9c7f7" stroke-width="1.5" clip-path="url(#crn)"/><path d="M367 685V712" stroke="#a9c7f7" stroke-width="1"/><rect x="299" y="702" width="13" height="14" rx="6.5" fill="#80f05c"/><rect x="329.9" y="698" width="13" height="18" rx="6.5" fill="#80f05c"/><rect x="360.7" y="704" width="12" height="12" rx="6.0" fill="#80f05c"/><rect x="391.1" y="698" width="13" height="18" rx="6.5" fill="#80f05c"/><rect x="421.5" y="702" width="13" height="14" rx="6.5" fill="#80f05c"/><path d="M318.4 707l2 2M324.4 707l-2 2M316.4 711h1.500M325.4 711h1.500" stroke="#3a4c7a" stroke-width="1"/><path d="M348.4 707l2 2M354.4 707l-2 2M346.4 711h1.500M355.4 711h1.500" stroke="#3a4c7a" stroke-width="1"/><path d="M378.9 707l2 2M384.9 707l-2 2M376.9 711h1.500M385.9 711h1.500" stroke="#3a4c7a" stroke-width="1"/><path d="M410.4 707l2 2M416.4 707l-2 2M408.4 711h1.500M417.4 711h1.500" stroke="#3a4c7a" stroke-width="1"/><path d="M292 712.500 Q292 705 298 704" stroke="#80f05c" stroke-width="2.5" fill="none"/><path d="M442 712.500 Q442 705 436 704" stroke="#80f05c" stroke-width="2.5" fill="none"/><ellipse cx="324.8" cy="766" rx="8.6" ry="8.6" fill="#a9c7f7"/><circle cx="324.8" cy="766" r="3.4" fill="#4f5f80"/><path d="M321.4 766h6.8M324.8 762.6v6.8" stroke="#a9c7f7" stroke-width="1"/><ellipse cx="409.2" cy="766" rx="8.6" ry="8.6" fill="#a9c7f7"/><circle cx="409.2" cy="766" r="3.4" fill="#4f5f80"/><path d="M405.8 766h6.8M409.2 762.6v6.8" stroke="#a9c7f7" stroke-width="1"/><ellipse cx="340.6" cy="776.9" rx="8.6" ry="8.6" fill="#a9c7f7"/><circle cx="340.6" cy="776.9" r="3.4" fill="#4f5f80"/><path d="M337.2 776.9h6.8M340.6 773.5v6.8" stroke="#a9c7f7" stroke-width="1"/><ellipse cx="393.4" cy="776.9" rx="8.6" ry="8.6" fill="#a9c7f7"/><circle cx="393.4" cy="776.9" r="3.4" fill="#4f5f80"/><path d="M390 776.9h6.8M393.4 773.5v6.8" stroke="#a9c7f7" stroke-width="1"/><path d="M366.3 745.3L383.3 762.3L366.3 779.3L349.3 762.3Z" fill="#a9c7f7"/><path d="M366.3 751.3L369.3 754.3L366.3 757.3L363.3 754.3ZM362.3 755.3L365.3 758.3L362.3 761.3L359.3 758.3ZM358.3 759.3L361.3 762.3L358.3 765.3L355.3 762.3ZM370.3 755.3L373.3 758.3L370.3 761.3L367.3 758.3ZM366.3 759.3L369.3 762.3L366.3 765.3L363.3 762.3ZM362.3 763.3L365.3 766.3L362.3 769.3L359.3 766.3ZM374.3 759.3L377.3 762.3L374.3 765.3L371.3 762.3ZM370.3 763.3L373.3 766.3L370.3 769.3L367.3 766.3ZM366.3 767.3L369.3 770.3L366.3 773.3L363.3 770.3Z" fill="#50607f"/><path d="M361 733 L373 733 L370 745 L364 745Z" fill="#80f05c"/><path d="M418 742C415.7 743 408.8 745.3 404 748C399.2 750.7 393.3 753.5 389 758C384.7 762.5 380.5 769.7 378 775C375.5 780.3 374.7 787.5 374 790" stroke="#1d4a12" stroke-width="1.2" fill="none" stroke-dasharray="1.2 2.2"/><path d="M426 752C424.3 755.3 420 766 416 772C412 778 407.3 784.5 402 788C396.7 791.5 387 792.2 384 793" stroke="#1d4a12" stroke-width="1.2" fill="none" stroke-dasharray="1.2 2.2"/><path d="M316 742C318.3 743 325.2 745.3 330 748C334.8 750.7 340.7 753.5 345 758C349.3 762.5 353.5 769.7 356 775C358.5 780.3 359.3 787.5 360 790" stroke="#1d4a12" stroke-width="1.2" fill="none" stroke-dasharray="1.2 2.2"/><path d="M308 752C309.7 755.3 314 766 318 772C322 778 326.7 784.5 332 788C337.3 791.5 347 792.2 350 793" stroke="#1d4a12" stroke-width="1.2" fill="none" stroke-dasharray="1.2 2.2"/><path d="M474 818 Q486 828 494 842" stroke="#d8ffb0" stroke-width="7" fill="none" opacity=".6" stroke-linecap="round"/><path d="M524 890 Q530 915 531 940" stroke="#b8ff90" stroke-width="3" fill="none" opacity=".5" stroke-linecap="round"/><path d="M76.5 1097V1129.5" stroke="#8a8a3a" stroke-width="1" fill="none"/><path d="M76.5 1129.5H106" stroke="#8c1818" stroke-width="1"/><text x="78" y="1100" font-size="10" fill="#8a8a3a" font-weight="bold">z</text><text x="107" y="1133" font-size="11" fill="#a01c1c" font-weight="bold">x</text><g transform="translate(646.6,690.4)" fill="none"><circle cx="0" cy="0" r="17.4" stroke="#f0c474" stroke-width="1.2"/><circle cx="0" cy="0" r="14.5" stroke="#f0c474" stroke-width="1.1"/><path d="M-6.500 -29.800 L6.500 -29.800 L7.500 -26.500 L0 -19.500 L-7.500 -26.500Z M-7.500 -26.500H7.500 M0 -29.800V-14" stroke="#4f6fc8" stroke-width="1.1"/><path d="M14.500 0h5M-14.500 0h-5M0 14.500v6M0 -17.400v-3" stroke="#f0c474" stroke-width="1.1"/></g><rect x="42" y="651" width="110" height="18" fill="#c3cfdb"/><text x="48" y="664.5" font-size="13" font-weight="bold" fill="#465a6e" textLength="95" lengthAdjust="spacingAndGlyphs">Through Finger</text>
</svg>
<svg style="left:693px;top:651px" width="647" height="513" viewBox="693 651 647 513">
<rect x="693" y="651" width="647" height="513" fill="#000"/>
<path d="M721.5 651V1161.15M736.5 651V1161.15M752.5 651V1161.15M767.5 651V1161.15M797.5 651V1161.15M812.5 651V1161.15M827.5 651V1161.15M843.5 651V1161.15M873.5 651V1161.15M888.5 651V1161.15M903.5 651V1161.15M918.5 651V1161.15M949.5 651V1161.15M964.5 651V1161.15M979.5 651V1161.15M994.5 651V1161.15M1025.5 651V1161.15M1040.5 651V1161.15M1055.5 651V1161.15M1070.5 651V1161.15M1101.5 651V1161.15M1116.5 651V1161.15M1131.5 651V1161.15M1146.5 651V1161.15M1176.5 651V1161.15M1192.5 651V1161.15M1207.5 651V1161.15M1222.5 651V1161.15M1252.5 651V1161.15M1267.5 651V1161.15M1283.5 651V1161.15M1298.5 651V1161.15M706.6 659.5H1313.4M706.6 675.5H1313.4M706.6 690.5H1313.4M706.6 720.5H1313.4M706.6 735.5H1313.4M706.6 750.5H1313.4M706.6 766.5H1313.4M706.6 796.5H1313.4M706.6 811.5H1313.4M706.6 826.5H1313.4M706.6 841.5H1313.4M706.6 872.5H1313.4M706.6 887.5H1313.4M706.6 902.5H1313.4M706.6 917.5H1313.4M706.6 948.5H1313.4M706.6 963.5H1313.4M706.6 978.5H1313.4M706.6 993.5H1313.4M706.6 1024.5H1313.4M706.6 1039.5H1313.4M706.6 1054.5H1313.4M706.6 1069.5H1313.4M706.6 1099.5H1313.4M706.6 1115.5H1313.4M706.6 1130.5H1313.4M706.6 1145.5H1313.4" stroke="#3e3e3e" stroke-width="1" fill="none" shape-rendering="crispEdges"/>
<path d="M706.5 651V1161.15M782.5 651V1161.15M858.5 651V1161.15M934.5 651V1161.15M1010.5 651V1161.15M1085.5 651V1161.15M1161.5 651V1161.15M1237.5 651V1161.15M1313.5 651V1161.15M706.6 705.5H1313.4M706.6 781.5H1313.4M706.6 857.5H1313.4M706.6 933.5H1313.4M706.6 1008.5H1313.4M706.6 1084.5H1313.4M706.6 1160.5H1313.4" stroke="#838383" stroke-width="1" fill="none" shape-rendering="crispEdges"/>
<path d="M1010 651V933" stroke="#2a4284" stroke-width="2"/><path d="M1010 933.5H1313.4" stroke="#861818" stroke-width="2"/><defs><linearGradient id="tp" x1="0" y1="0" x2="1" y2="0"><stop offset="0" stop-color="#245f17"/><stop offset=".25" stop-color="#2f7a20"/><stop offset=".5" stop-color="#15400c"/><stop offset=".8" stop-color="#123608"/><stop offset="1" stop-color="#2a6e1c"/></linearGradient>
<pattern id="smesh" width="3" height="3" patternUnits="userSpaceOnUse"><rect width="3" height="3" fill="#2a6e1a"/><path d="M0 .5H3M.5 0V3" stroke="#84f260" stroke-width="1"/></pattern></defs><path d="M984.3 956.8L1033.7 956.8L1030 990L1026.8 1018L1025 1060L1024.8 1082L1020 1087.5L1001 1087.5L996.2 1082L996 1060L993.2 1018L989 990Z" fill="url(#tp)" stroke="#80f05c" stroke-width="1.6"/><path d="M990 957 Q994.5 1005 997.2 1040 L998.1 1087M996.9 957 Q999.8 1005 1001.5 1040 L1002.1 1087M1004.4 957 Q1005.5 1005 1006.2 1040 L1006.4 1087M1014.2 957 Q1013.1 1005 1012.4 1040 L1012.2 1087M1021.6 957 Q1018.8 1005 1017 1040 L1016.4 1087M1028.6 957 Q1024.1 1005 1021.4 1040 L1020.5 1087M985.2 962Q1009.3 965 1033.4 962M985.9 969Q1009.3 972 1032.7 969M987.1 980Q1009.3 983 1031.5 980M988.9 996Q1009.3 999 1029.7 996M990.7 1012Q1009.3 1013 1027.9 1012M992.7 1030Q1009.3 1031 1025.9 1030M994 1048Q1009.3 1049 1024.6 1048M994.4 1064Q1009.3 1065 1024.2 1064M994.7 1076Q1009.3 1077 1023.9 1076M994.9 1083Q1009.3 1084 1023.7 1083" stroke="#84f060" stroke-width=".8" fill="none" opacity=".75"/><ellipse cx="1010" cy="910" rx="36.5" ry="47" fill="#80f05c"/><ellipse cx="1010.2" cy="833.5" rx="37" ry="34.5" fill="#80f05c"/><ellipse cx="1010.2" cy="775" rx="37.5" ry="28" fill="#80f05c"/><rect x="987.3" y="796" width="44" height="9" fill="#80f05c"/><rect x="990.3" y="860" width="38" height="10" fill="#80f05c"/><path d="M978.3 932 L1041.3 932 L1034.3 958 L984.3 958Z" fill="#80f05c"/><ellipse cx="988.4" cy="754.3" rx="7.6" ry="7.2" fill="#a9c7f7"/><ellipse cx="1030.4" cy="754.3" rx="7.6" ry="7.2" fill="#a9c7f7"/><ellipse cx="985.1" cy="770" rx="7.6" ry="7.2" fill="#a9c7f7"/><ellipse cx="1034.5" cy="770" rx="7.6" ry="7.2" fill="#a9c7f7"/><ellipse cx="994.2" cy="784.8" rx="7.6" ry="7.2" fill="#a9c7f7"/><ellipse cx="1025.5" cy="784.8" rx="7.6" ry="7.2" fill="#a9c7f7"/><ellipse cx="1009.8" cy="792.2" rx="7.6" ry="7.2" fill="#a9c7f7"/><ellipse cx="997.5" cy="804.5" rx="7.6" ry="7.2" fill="#a9c7f7"/><ellipse cx="1021.4" cy="804.5" rx="7.6" ry="7.2" fill="#a9c7f7"/><ellipse cx="988.4" cy="817.7" rx="7.6" ry="7.2" fill="#a9c7f7"/><ellipse cx="1031.2" cy="817.7" rx="7.6" ry="7.2" fill="#a9c7f7"/><ellipse cx="985.1" cy="835" rx="7.6" ry="7.2" fill="#a9c7f7"/><ellipse cx="1034.5" cy="835" rx="7.6" ry="7.2" fill="#a9c7f7"/><ellipse cx="993.4" cy="849.8" rx="7.6" ry="7.2" fill="#a9c7f7"/><ellipse cx="1026.3" cy="849.8" rx="7.6" ry="7.2" fill="#a9c7f7"/><ellipse cx="1009.8" cy="858.8" rx="7.6" ry="7.2" fill="#a9c7f7"/><ellipse cx="998.1" cy="873.8" rx="7.6" ry="7.2" fill="#a9c7f7"/><ellipse cx="1020.9" cy="873.8" rx="7.6" ry="7.2" fill="#a9c7f7"/><ellipse cx="988.3" cy="889.6" rx="7.6" ry="7.2" fill="#a9c7f7"/><ellipse cx="1030.7" cy="889.6" rx="7.6" ry="7.2" fill="#a9c7f7"/><ellipse cx="984.3" cy="908.4" rx="7.6" ry="7.2" fill="#a9c7f7"/><ellipse cx="1035.7" cy="908.4" rx="7.6" ry="7.2" fill="#a9c7f7"/><ellipse cx="987.3" cy="928.1" rx="7.6" ry="7.2" fill="#a9c7f7"/><ellipse cx="1031.7" cy="928.1" rx="7.6" ry="7.2" fill="#a9c7f7"/><ellipse cx="993.2" cy="945.9" rx="7.6" ry="7.2" fill="#a9c7f7"/><ellipse cx="1026.8" cy="945.9" rx="7.6" ry="7.2" fill="#a9c7f7"/><path d="M988.4 754.3L985.1 770" stroke="#a9c7f7" stroke-width="8" stroke-linecap="round"/><path d="M985.1 770L994.2 784.8" stroke="#a9c7f7" stroke-width="8" stroke-linecap="round"/><path d="M994.2 784.8L1009.8 792.2" stroke="#a9c7f7" stroke-width="8" stroke-linecap="round"/><path d="M1009.8 792.2L1025.5 784.8" stroke="#a9c7f7" stroke-width="8" stroke-linecap="round"/><path d="M1025.5 784.8L1034.5 770" stroke="#a9c7f7" stroke-width="8" stroke-linecap="round"/><path d="M1034.5 770L1030.4 754.3" stroke="#a9c7f7" stroke-width="8" stroke-linecap="round"/><path d="M997.5 804.5L988.4 817.7" stroke="#a9c7f7" stroke-width="8" stroke-linecap="round"/><path d="M988.4 817.7L985.1 835" stroke="#a9c7f7" stroke-width="8" stroke-linecap="round"/><path d="M985.1 835L993.4 849.8" stroke="#a9c7f7" stroke-width="8" stroke-linecap="round"/><path d="M993.4 849.8L1009.8 858.8" stroke="#a9c7f7" stroke-width="8" stroke-linecap="round"/><path d="M1009.8 858.8L1026.3 849.8" stroke="#a9c7f7" stroke-width="8" stroke-linecap="round"/><path d="M1026.3 849.8L1034.5 835" stroke="#a9c7f7" stroke-width="8" stroke-linecap="round"/><path d="M1034.5 835L1031.2 817.7" stroke="#a9c7f7" stroke-width="8" stroke-linecap="round"/><path d="M1031.2 817.7L1021.4 804.5" stroke="#a9c7f7" stroke-width="8" stroke-linecap="round"/><path d="M1009.8 792.2L997.5 804.5" stroke="#a9c7f7" stroke-width="8" stroke-linecap="round"/><path d="M1009.8 792.2L1021.4 804.5" stroke="#a9c7f7" stroke-width="8" stroke-linecap="round"/><path d="M998.1 873.8L988.3 889.6" stroke="#a9c7f7" stroke-width="8" stroke-linecap="round"/><path d="M988.3 889.6L984.3 908.4" stroke="#a9c7f7" stroke-width="8" stroke-linecap="round"/><path d="M984.3 908.4L987.3 928.1" stroke="#a9c7f7" stroke-width="8" stroke-linecap="round"/><path d="M987.3 928.1L993.2 945.9" stroke="#a9c7f7" stroke-width="8" stroke-linecap="round"/><path d="M1020.9 873.8L1030.7 889.6" stroke="#a9c7f7" stroke-width="8" stroke-linecap="round"/><path d="M1030.7 889.6L1035.7 908.4" stroke="#a9c7f7" stroke-width="8" stroke-linecap="round"/><path d="M1035.7 908.4L1031.7 928.1" stroke="#a9c7f7" stroke-width="8" stroke-linecap="round"/><path d="M1031.7 928.1L1026.8 945.9" stroke="#a9c7f7" stroke-width="8" stroke-linecap="round"/><path d="M1009.8 858.8L998.1 873.8" stroke="#a9c7f7" stroke-width="8" stroke-linecap="round"/><path d="M1009.8 858.8L1020.9 873.8" stroke="#a9c7f7" stroke-width="8" stroke-linecap="round"/><ellipse cx="1009.8" cy="764.2" rx="10" ry="9" fill="#a9c7f7"/><ellipse cx="1009.8" cy="775.2" rx="4" ry="4" fill="#80f05c"/><ellipse cx="1009.8" cy="828.4" rx="10" ry="9" fill="#a9c7f7"/><ellipse cx="1009.8" cy="839.4" rx="4" ry="4" fill="#80f05c"/><path d="M1001.8 777.2l5 7l1 -6zM1017.8 777.2l-5 7l-1 -6z" fill="#0f3a0a"/><path d="M1001.8 841.4l5 7l1 -6zM1017.8 841.4l-5 7l-1 -6z" fill="#0f3a0a"/><path d="M1009.3 883 Q1024.3 908 1009.3 942 Q994.3 908 1009.3 883Z" fill="#061204"/><ellipse cx="1009.3" cy="909" rx="9.5" ry="10.5" fill="#a9c7f7"/><circle cx="1009.3" cy="909" r="4.2" fill="#6a5aa8"/><clipPath id="lobes"><ellipse cx="1010.0" cy="910" rx="33" ry="44"/><ellipse cx="1010.1999999999999" cy="833.5" rx="34" ry="31"/><ellipse cx="1010.1999999999999" cy="775" rx="34" ry="25"/></clipPath><path d="M1012 842h1v1h-1zM1007 936h1v1h-1zM1014 853h1v1h-1zM1010 788h1v1h-1zM1026 877h1v1h-1zM997 770h1v1h-1zM1027 770h1v1h-1zM981 890h1v1h-1zM1037 948h1v1h-1zM1016 882h1v1h-1zM980 783h1v1h-1zM982 857h1v1h-1zM993 790h1v1h-1zM1007 758h1v1h-1zM1029 840h1v1h-1zM1017 855h1v1h-1zM1019 851h1v1h-1zM995 843h1v1h-1zM1039 951h1v1h-1zM1021 920h1v1h-1zM993 815h1v1h-1zM983 809h1v1h-1zM1003 905h1v1h-1zM1002 921h1v1h-1zM1030 943h1v1h-1zM991 752h1v1h-1zM1007 934h1v1h-1zM1003 948h1v1h-1zM1017 766h1v1h-1zM995 907h1v1h-1zM999 769h1v1h-1zM1024 944h1v1h-1zM994 775h1v1h-1zM982 772h1v1h-1zM989 911h1v1h-1zM1006 863h1v1h-1zM1023 790h1v1h-1zM1017 778h1v1h-1zM1004 775h1v1h-1zM995 794h1v1h-1zM1027 946h1v1h-1zM1032 812h1v1h-1zM1002 794h1v1h-1zM1017 922h1v1h-1zM1038 772h1v1h-1zM994 794h1v1h-1zM999 906h1v1h-1zM983 811h1v1h-1zM1014 770h1v1h-1zM1015 800h1v1h-1zM1006 826h1v1h-1zM1008 943h1v1h-1zM1031 866h1v1h-1zM988 788h1v1h-1zM1028 933h1v1h-1zM990 801h1v1h-1zM1035 899h1v1h-1zM1036 791h1v1h-1zM1015 928h1v1h-1zM985 836h1v1h-1zM1037 759h1v1h-1zM1021 799h1v1h-1zM1028 803h1v1h-1zM996 871h1v1h-1zM1022 787h1v1h-1zM993 765h1v1h-1zM1030 863h1v1h-1zM996 874h1v1h-1zM991 935h1v1h-1zM995 755h1v1h-1zM982 841h1v1h-1zM1001 787h1v1h-1zM987 866h1v1h-1zM1032 824h1v1h-1zM1018 948h1v1h-1zM1014 890h1v1h-1zM981 780h1v1h-1zM1033 755h1v1h-1zM1037 892h1v1h-1zM1017 756h1v1h-1zM1023 848h1v1h-1zM1039 815h1v1h-1zM1012 767h1v1h-1zM1033 899h1v1h-1zM1021 899h1v1h-1zM1034 910h1v1h-1zM1020 822h1v1h-1zM1031 932h1v1h-1zM1026 835h1v1h-1zM1013 924h1v1h-1zM1002 876h1v1h-1zM1015 868h1v1h-1zM1017 768h1v1h-1zM1032 950h1v1h-1zM1002 897h1v1h-1zM1014 899h1v1h-1zM1029 840h1v1h-1zM1024 768h1v1h-1zM1015 757h1v1h-1zM993 848h1v1h-1zM1009 891h1v1h-1zM1034 874h1v1h-1zM979 803h1v1h-1zM1019 812h1v1h-1zM989 792h1v1h-1zM1018 933h1v1h-1zM1032 840h1v1h-1zM1019 817h1v1h-1zM1005 791h1v1h-1zM1034 913h1v1h-1zM1002 928h1v1h-1zM998 868h1v1h-1zM1009 779h1v1h-1zM1030 919h1v1h-1zM1036 894h1v1h-1zM989 807h1v1h-1zM995 842h1v1h-1zM1004 794h1v1h-1zM1008 877h1v1h-1zM1029 815h1v1h-1zM1006 948h1v1h-1zM981 766h1v1h-1zM981 926h1v1h-1zM1013 893h1v1h-1zM1026 813h1v1h-1zM987 755h1v1h-1zM980 842h1v1h-1zM993 917h1v1h-1zM982 780h1v1h-1zM1006 877h1v1h-1zM1018 877h1v1h-1zM1036 913h1v1h-1zM991 888h1v1h-1zM990 847h1v1h-1zM1007 754h1v1h-1zM990 894h1v1h-1zM1000 806h1v1h-1zM1010 891h1v1h-1zM1024 874h1v1h-1zM1026 830h1v1h-1zM984 933h1v1h-1zM1022 938h1v1h-1zM1006 777h1v1h-1zM1033 877h1v1h-1zM1013 827h1v1h-1zM1027 927h1v1h-1zM1007 940h1v1h-1zM991 882h1v1h-1zM1028 896h1v1h-1zM1022 880h1v1h-1z" fill="#143a5a" clip-path="url(#lobes)"/><circle cx="988.4" cy="754.3" r="3.2" fill="#5a6a8c"/><path d="M985.2 754.3h6.4M988.4 751.1v6.4" stroke="#a9c7f7" stroke-width=".8"/><circle cx="1030.4" cy="754.3" r="3.2" fill="#5a6a8c"/><path d="M1027.2 754.3h6.4M1030.4 751.1v6.4" stroke="#a9c7f7" stroke-width=".8"/><circle cx="985.1" cy="770" r="3.2" fill="#5a6a8c"/><path d="M981.9 770h6.4M985.1 766.8v6.4" stroke="#a9c7f7" stroke-width=".8"/><circle cx="1034.5" cy="770" r="3.2" fill="#5a6a8c"/><path d="M1031.3 770h6.4M1034.5 766.8v6.4" stroke="#a9c7f7" stroke-width=".8"/><circle cx="994.2" cy="784.8" r="3.2" fill="#5a6a8c"/><path d="M991 784.8h6.4M994.2 781.6v6.4" stroke="#a9c7f7" stroke-width=".8"/><circle cx="1025.5" cy="784.8" r="3.2" fill="#5a6a8c"/><path d="M1022.3 784.8h6.4M1025.5 781.6v6.4" stroke="#a9c7f7" stroke-width=".8"/><circle cx="1009.8" cy="792.2" r="3.2" fill="#5a6a8c"/><path d="M1006.6 792.2h6.4M1009.8 789v6.4" stroke="#a9c7f7" stroke-width=".8"/><circle cx="997.5" cy="804.5" r="3.2" fill="#5a6a8c"/><path d="M994.3 804.5h6.4M997.5 801.3v6.4" stroke="#a9c7f7" stroke-width=".8"/><circle cx="1021.4" cy="804.5" r="3.2" fill="#5a6a8c"/><path d="M1018.2 804.5h6.4M1021.4 801.3v6.4" stroke="#a9c7f7" stroke-width=".8"/><circle cx="988.4" cy="817.7" r="3.2" fill="#5a6a8c"/><path d="M985.2 817.7h6.4M988.4 814.5v6.4" stroke="#a9c7f7" stroke-width=".8"/><circle cx="1031.2" cy="817.7" r="3.2" fill="#5a6a8c"/><path d="M1028 817.7h6.4M1031.2 814.5v6.4" stroke="#a9c7f7" stroke-width=".8"/><circle cx="985.1" cy="835" r="3.2" fill="#5a6a8c"/><path d="M981.9 835h6.4M985.1 831.8v6.4" stroke="#a9c7f7" stroke-width=".8"/><circle cx="1034.5" cy="835" r="3.2" fill="#5a6a8c"/><path d="M1031.3 835h6.4M1034.5 831.8v6.4" stroke="#a9c7f7" stroke-width=".8"/><circle cx="993.4" cy="849.8" r="3.2" fill="#5a6a8c"/><path d="M990.2 849.8h6.4M993.4 846.6v6.4" stroke="#a9c7f7" stroke-width=".8"/><circle cx="1026.3" cy="849.8" r="3.2" fill="#5a6a8c"/><path d="M1023.1 849.8h6.4M1026.3 846.6v6.4" stroke="#a9c7f7" stroke-width=".8"/><circle cx="1009.8" cy="858.8" r="3.2" fill="#5a6a8c"/><path d="M1006.6 858.8h6.4M1009.8 855.6v6.4" stroke="#a9c7f7" stroke-width=".8"/><circle cx="998.1" cy="873.8" r="3.2" fill="#5a6a8c"/><path d="M994.9 873.8h6.4M998.1 870.6v6.4" stroke="#a9c7f7" stroke-width=".8"/><circle cx="1020.9" cy="873.8" r="3.2" fill="#5a6a8c"/><path d="M1017.7 873.8h6.4M1020.9 870.6v6.4" stroke="#a9c7f7" stroke-width=".8"/><circle cx="988.3" cy="889.6" r="3.2" fill="#5a6a8c"/><path d="M985.1 889.6h6.4M988.3 886.4v6.4" stroke="#a9c7f7" stroke-width=".8"/><circle cx="1030.7" cy="889.6" r="3.2" fill="#5a6a8c"/><path d="M1027.5 889.6h6.4M1030.7 886.4v6.4" stroke="#a9c7f7" stroke-width=".8"/><circle cx="984.3" cy="908.4" r="3.2" fill="#5a6a8c"/><path d="M981.1 908.4h6.4M984.3 905.2v6.4" stroke="#a9c7f7" stroke-width=".8"/><circle cx="1035.7" cy="908.4" r="3.2" fill="#5a6a8c"/><path d="M1032.5 908.4h6.4M1035.7 905.2v6.4" stroke="#a9c7f7" stroke-width=".8"/><circle cx="987.3" cy="928.1" r="3.2" fill="#5a6a8c"/><path d="M984.1 928.1h6.4M987.3 924.9v6.4" stroke="#a9c7f7" stroke-width=".8"/><circle cx="1031.7" cy="928.1" r="3.2" fill="#5a6a8c"/><path d="M1028.5 928.1h6.4M1031.7 924.9v6.4" stroke="#a9c7f7" stroke-width=".8"/><circle cx="993.2" cy="945.9" r="3.2" fill="#5a6a8c"/><path d="M990 945.9h6.4M993.2 942.7v6.4" stroke="#a9c7f7" stroke-width=".8"/><circle cx="1026.8" cy="945.9" r="3.2" fill="#5a6a8c"/><path d="M1023.6 945.9h6.4M1026.8 942.7v6.4" stroke="#a9c7f7" stroke-width=".8"/><circle cx="1009.8" cy="764.2" r="4.6" fill="#5a6a8c"/><path d="M1005.2 764.2h9.2M1009.8 759.6v9.2" stroke="#a9c7f7" stroke-width=".8"/><circle cx="1009.8" cy="828.4" r="4.6" fill="#5a6a8c"/><path d="M1005.2 828.4h9.2M1009.8 823.8v9.2" stroke="#a9c7f7" stroke-width=".8"/><rect x="947.300" y="724.700" width="125.200" height="25.800" rx="6" fill="#80f05c"/><path d="M990.900 710 L1028.800 710 L1050.200 724 L1066 727 L1070 735.500 L950 735.500 L954 727 L969.500 724Z" fill="#a9c7f7"/><path d="M994 712 L1026 712 L1041 722.500 L979 722.500Z" fill="#6c7b9a"/><clipPath id="scrn"><path d="M994 712L1026 712L1041 722.500L979 722.500Z"/></clipPath><path d="M980 712L994 722.500M1040 712L1026 722.500M987.5 712L1001.5 722.500M1032.5 712L1018.5 722.500M995 712L1009 722.500M1025 712L1011 722.500M1002.5 712L1016.5 722.500M1017.5 712L1003.5 722.500M1010 712L1024 722.500M1010 712L996 722.500M1017.5 712L1031.5 722.500M1002.5 712L988.5 722.500M1025 712L1039 722.500M995 712L981 722.500M1032.5 712L1046.5 722.500M987.5 712L973.5 722.500M1040 712L1054 722.500M980 712L966 722.500M986 717H1034" stroke="#a9c7f7" stroke-width="1.4" clip-path="url(#scrn)"/><rect x="968.1" y="724" width="11" height="14" rx="5.500" fill="#80f05c"/><rect x="992" y="722" width="11" height="16" rx="5.500" fill="#80f05c"/><rect x="1016.7" y="722" width="11" height="16" rx="5.500" fill="#80f05c"/><rect x="1042.2" y="724" width="11" height="14" rx="5.500" fill="#80f05c"/><path d="M948.500 736 Q948.500 727 955 726" stroke="#80f05c" stroke-width="3" fill="none"/><path d="M1071.300 736 Q1071.300 727 1065 726" stroke="#80f05c" stroke-width="3" fill="none"/><path d="M959.9 729.500l2 2M965.9 729.500l-2 2" stroke="#3a4c7a" stroke-width="1"/><path d="M981.3 729.500l2 2M987.3 729.500l-2 2" stroke="#3a4c7a" stroke-width="1"/><path d="M1006.8 729.500l2 2M1012.8 729.500l-2 2" stroke="#3a4c7a" stroke-width="1"/><path d="M1032.3 729.500l2 2M1038.3 729.500l-2 2" stroke="#3a4c7a" stroke-width="1"/><path d="M1057 729.500l2 2M1063 729.500l-2 2" stroke="#3a4c7a" stroke-width="1"/><defs><linearGradient id="sbz" x1="0" y1="0" x2="1" y2="0"><stop offset="0" stop-color="#2f7a20"/><stop offset=".12" stop-color="#7ad455"/><stop offset=".3" stop-color="#3c8a28"/><stop offset=".7" stop-color="#1f5a14"/><stop offset=".9" stop-color="#0d2c07"/><stop offset="1" stop-color="#2a6e1c"/></linearGradient></defs><rect x="950.500" y="736" width="119" height="13.500" fill="url(#sbz)"/><path d="M953 736V749.500M958.9 736V749.500M964.8 736V749.500M970.7 736V749.500M976.6 736V749.500M982.5 736V749.500M988.4 736V749.500M994.3 736V749.500M1000.2 736V749.500M1006.1 736V749.500M1012 736V749.500M1017.9 736V749.500M1023.8 736V749.500M1029.7 736V749.500M1035.6 736V749.500M1041.5 736V749.500M1047.4 736V749.500M1053.3 736V749.500M1059.2 736V749.500M1065.1 736V749.500M950.500 736.5H1069.500M950.500 740H1069.500M950.500 746H1069.500M950.500 749H1069.500" stroke="#7ff05c" stroke-width="1" fill="none"/><path d="M1009.3 800V955" stroke="#cf4fd0" stroke-width="1.4"/><path d="M1009.3 955V1064" stroke="#c7a2b8" stroke-width="1.4"/><path d="M729.5 1097V1129.5" stroke="#8a8a3a" stroke-width="1" fill="none"/><path d="M729.5 1129.5H760" stroke="#2c3f8c" stroke-width="1.2"/><text x="731" y="1100" font-size="10" fill="#8a8a3a" font-weight="bold">z</text><text x="760" y="1133" font-size="11" fill="#2a4cb0" font-weight="bold">y</text><path d="M1299.600 669.500 L1306.800 673.500 L1303.300 690 L1303.300 706 L1299.800 711 L1296 706 L1295.500 690 L1292.600 673.500Z M1293.300 676H1306 M1295.500 690H1303.300 M1296 706H1303.300" fill="none" stroke="#f0c474" stroke-width="1.1"/><path d="M1288 665 L1293.500 661 L1305 661 L1307 665 L1299.600 669.500 L1294 668.500Z M1288 665H1307 M1299.600 661V669.500" fill="none" stroke="#5c7cd0" stroke-width="1.1"/><rect x="693" y="651" width="80" height="18" fill="#9fb9dd"/><text x="699" y="664.5" font-size="13" font-weight="bold" fill="#0b1326" textLength="65" lengthAdjust="spacingAndGlyphs">Side View</text>
</svg>
<div style="left:1349px;top:57px;width:301px;height:1116px;background:#333;border-left:1.5px solid #636363"></div>
<div style="left:1349px;top:57px;width:301px;height:27px;background:linear-gradient(90deg,rgba(0,0,0,0) 35%,rgba(0,0,0,.09) 100%),linear-gradient(#cdcdc7 0,#b9b9b3 50%,#9f9f99 100%);border-bottom:1px solid #55534c"></div>
<div style="left:1349px;top:57px;width:26px;height:27px;background:#4a4a48"><svg width="26" height="26" viewBox="0 0 26 26"><rect width="26" height="26" fill="#484848"/><ellipse cx="12" cy="18" rx="10" ry="5" fill="#1c50e0"/><ellipse cx="12" cy="18" rx="10" ry="5" fill="none" stroke="#6aa0ff" stroke-width="1"/>
<path d="M2 18 L14 3 L22 18 M14 3 L12 22 M3 5 L16 4" stroke="#7ab0ff" stroke-width="1.3" fill="none"/></svg></div>
<div style="left:1496px;top:61px;width:1px;height:20px;background:#8a887e"></div>
<div style="left:1380px;top:58px;width:116px;height:14px;font-family:'DejaVu Sans',sans-serif;font-weight:bold;font-size:11px;line-height:13px;color:#000;letter-spacing:.25px;white-space:pre">METAL WEIGHTS</div>
<div style="left:1502px;top:59px;width:128px;height:25px;font-family:'DejaVu Sans',sans-serif;font-weight:bold;font-size:11px;line-height:12.5px;color:#e6e0c4;letter-spacing:.3px;overflow:hidden">243 Objects<br>Checked</div>
<div style="left:1632px;top:62px;width:14px;height:14px;background:#c9c7bf;border:1px solid #85837b;border-top-color:#eceae4;border-left-color:#ecebe4"><svg width="12" height="12" viewBox="0 0 12 12"><path d="M2.5 2.5 L9.5 9.5 M9.5 2.5 L2.5 9.5" stroke="#b83a3a" stroke-width="1.1"/></svg></div>
<div style="left:1358px;top:86px;width:273px;height:177px;background:#f4f4f4;overflow:hidden"><div style="left:0px;top:0;width:96.5px;height:16px;background:linear-gradient(#fff,#f0f0f0 80%,#d8d8d8);border-right:1px solid #a8a8a8;border-bottom:1px solid #b8b8b8;text-align:left;padding-left:6px;font-size:11px;line-height:16px;color:#000"><span style="display:inline-block;transform:scaleX(.92);transform-origin:0 50%">Metal</span></div><div style="left:96.5px;top:0;width:67.5px;height:16px;background:linear-gradient(#fff,#f0f0f0 80%,#d8d8d8);border-right:1px solid #a8a8a8;border-bottom:1px solid #b8b8b8;text-align:center;font-size:11px;line-height:16px;color:#000"><span style="display:inline-block;transform:scaleX(.92);transform-origin:50% 50%">Grams</span></div><div style="left:164px;top:0;width:67px;height:16px;background:linear-gradient(#fff,#f0f0f0 80%,#d8d8d8);border-right:1px solid #a8a8a8;border-bottom:1px solid #b8b8b8;text-align:center;font-size:11px;line-height:16px;color:#000"><span style="display:inline-block;transform:scaleX(.92);transform-origin:50% 50%">DWT</span></div><div style="left:231px;top:0;width:42px;height:16px;background:linear-gradient(#fff,#f0f0f0 80%,#d8d8d8);border-right:1px solid #a8a8a8;border-bottom:1px solid #b8b8b8;text-align:center;font-size:11px;line-height:16px;color:#000"><span style="display:inline-block;transform:scaleX(.92);transform-origin:50% 50%"></span></div><div style="left:0px;top:18px;width:95.5px;height:13px;background:#000;text-align:left;padding-left:5px;font-size:11px;line-height:13px;color:#fff;white-space:pre;overflow:hidden"><span style="display:inline-block;transform:scaleX(.92);transform-origin:0 50%">Gold 24k</span></div><div style="left:96.5px;top:18px;width:66.5px;height:13px;background:#000;text-align:center;font-size:11px;line-height:13px;color:#fff;white-space:pre;overflow:hidden"><span style="display:inline-block;transform:scaleX(.92);transform-origin:50% 50%">5.75</span></div><div style="left:164px;top:18px;width:66px;height:13px;background:#000;text-align:center;font-size:11px;line-height:13px;color:#fff;white-space:pre;overflow:hidden"><span style="display:inline-block;transform:scaleX(.92);transform-origin:50% 50%">3.7</span></div><div style="left:231px;top:18px;width:41px;height:13px;background:#000;text-align:center;font-size:11px;line-height:13px;color:#fff;white-space:pre;overflow:hidden"><span style="display:inline-block;transform:scaleX(.92);transform-origin:50% 50%"></span></div><div style="left:0px;top:32px;width:95.5px;height:13px;background:#000;text-align:left;padding-left:5px;font-size:11px;line-height:13px;color:#fff;white-space:pre;overflow:hidden"><span style="display:inline-block;transform:scaleX(.92);transform-origin:0 50%">Gold 22k</span></div><div style="left:96.5px;top:32px;width:66.5px;height:13px;background:#000;text-align:center;font-size:11px;line-height:13px;color:#fff;white-space:pre;overflow:hidden"><span style="display:inline-block;transform:scaleX(.92);transform-origin:50% 50%">5.27</span></div><div style="left:164px;top:32px;width:66px;height:13px;background:#000;text-align:center;font-size:11px;line-height:13px;color:#fff;white-space:pre;overflow:hidden"><span style="display:inline-block;transform:scaleX(.92);transform-origin:50% 50%">3.39</span></div><div style="left:231px;top:32px;width:41px;height:13px;background:#000;text-align:center;font-size:11px;line-height:13px;color:#fff;white-space:pre;overflow:hidden"><span style="display:inline-block;transform:scaleX(.92);transform-origin:50% 50%"></span></div><div style="left:0px;top:46px;width:95.5px;height:13px;background:#000;text-align:left;padding-left:5px;font-size:11px;line-height:13px;color:#fff;white-space:pre;overflow:hidden"><span style="display:inline-block;transform:scaleX(.92);transform-origin:0 50%">Gold 18k</span></div><div style="left:96.5px;top:46px;width:66.5px;height:13px;background:#000;text-align:center;font-size:11px;line-height:13px;color:#fff;white-space:pre;overflow:hidden"><span style="display:inline-block;transform:scaleX(.92);transform-origin:50% 50%">4.61</span></div><div style="left:164px;top:46px;width:66px;height:13px;background:#000;text-align:center;font-size:11px;line-height:13px;color:#fff;white-space:pre;overflow:hidden"><span style="display:inline-block;transform:scaleX(.92);transform-origin:50% 50%">2.97</span></div><div style="left:231px;top:46px;width:41px;height:13px;background:#000;text-align:center;font-size:11px;line-height:13px;color:#fff;white-space:pre;overflow:hidden"><span style="display:inline-block;transform:scaleX(.92);transform-origin:50% 50%"></span></div><div style="left:0px;top:60px;width:95.5px;height:13px;background:#000;text-align:left;padding-left:5px;font-size:11px;line-height:13px;color:#fff;white-space:pre;overflow:hidden"><span style="display:inline-block;transform:scaleX(.92);transform-origin:0 50%">Gold 14k</span></div><div style="left:96.5px;top:60px;width:66.5px;height:13px;background:#000;text-align:center;font-size:11px;line-height:13px;color:#fff;white-space:pre;overflow:hidden"><span style="display:inline-block;transform:scaleX(.92);transform-origin:50% 50%">3.99</span></div><div style="left:164px;top:60px;width:66px;height:13px;background:#000;text-align:center;font-size:11px;line-height:13px;color:#fff;white-space:pre;overflow:hidden"><span style="display:inline-block;transform:scaleX(.92);transform-origin:50% 50%">2.56</span></div><div style="left:231px;top:60px;width:41px;height:13px;background:#000;text-align:center;font-size:11px;line-height:13px;color:#fff;white-space:pre;overflow:hidden"><span style="display:inline-block;transform:scaleX(.92);transform-origin:50% 50%"></span></div><div style="left:0px;top:74px;width:95.5px;height:13px;background:#000;text-align:left;padding-left:5px;font-size:11px;line-height:13px;color:#fff;white-space:pre;overflow:hidden"><span style="display:inline-block;transform:scaleX(.92);transform-origin:0 50%">Gold 10k</span></div><div style="left:96.5px;top:74px;width:66.5px;height:13px;background:#000;text-align:center;font-size:11px;line-height:13px;color:#fff;white-space:pre;overflow:hidden"><span style="display:inline-block;transform:scaleX(.92);transform-origin:50% 50%">3.6</span></div><div style="left:164px;top:74px;width:66px;height:13px;background:#000;text-align:center;font-size:11px;line-height:13px;color:#fff;white-space:pre;overflow:hidden"><span style="display:inline-block;transform:scaleX(.92);transform-origin:50% 50%">2.32</span></div><div style="left:231px;top:74px;width:41px;height:13px;background:#000;text-align:center;font-size:11px;line-height:13px;color:#fff;white-space:pre;overflow:hidden"><span style="display:inline-block;transform:scaleX(.92);transform-origin:50% 50%"></span></div><div style="left:0px;top:88px;width:95.5px;height:13px;background:#000;text-align:left;padding-left:5px;font-size:11px;line-height:13px;color:#fff;white-space:pre;overflow:hidden"><span style="display:inline-block;transform:scaleX(.92);transform-origin:0 50%">Platinum, Pure</span></div><div style="left:96.5px;top:88px;width:66.5px;height:13px;background:#000;text-align:center;font-size:11px;line-height:13px;color:#fff;white-space:pre;overflow:hidden"><span style="display:inline-block;transform:scaleX(.92);transform-origin:50% 50%">6.39</span></div><div style="left:164px;top:88px;width:66px;height:13px;background:#000;text-align:center;font-size:11px;line-height:13px;color:#fff;white-space:pre;overflow:hidden"><span style="display:inline-block;transform:scaleX(.92);transform-origin:50% 50%">4.11</span></div><div style="left:231px;top:88px;width:41px;height:13px;background:#000;text-align:center;font-size:11px;line-height:13px;color:#fff;white-space:pre;overflow:hidden"><span style="display:inline-block;transform:scaleX(.92);transform-origin:50% 50%"></span></div><div style="left:0px;top:102px;width:95.5px;height:13px;background:#000;text-align:left;padding-left:5px;font-size:11px;line-height:13px;color:#fff;white-space:pre;overflow:hidden"><span style="display:inline-block;transform:scaleX(.92);transform-origin:0 50%">Platinum 15% Irid</span></div><div style="left:96.5px;top:102px;width:66.5px;height:13px;background:#000;text-align:center;font-size:11px;line-height:13px;color:#fff;white-space:pre;overflow:hidden"><span style="display:inline-block;transform:scaleX(.92);transform-origin:50% 50%">6.39</span></div><div style="left:164px;top:102px;width:66px;height:13px;background:#000;text-align:center;font-size:11px;line-height:13px;color:#fff;white-space:pre;overflow:hidden"><span style="display:inline-block;transform:scaleX(.92);transform-origin:50% 50%">4.11</span></div><div style="left:231px;top:102px;width:41px;height:13px;background:#000;text-align:center;font-size:11px;line-height:13px;color:#fff;white-space:pre;overflow:hidden"><span style="display:inline-block;transform:scaleX(.92);transform-origin:50% 50%"></span></div><div style="left:0px;top:116px;width:95.5px;height:13px;background:#000;text-align:left;padding-left:5px;font-size:11px;line-height:13px;color:#fff;white-space:pre;overflow:hidden"><span style="display:inline-block;transform:scaleX(.92);transform-origin:0 50%">Platinum 10% Irid</span></div><div style="left:96.5px;top:116px;width:66.5px;height:13px;background:#000;text-align:center;font-size:11px;line-height:13px;color:#fff;white-space:pre;overflow:hidden"><span style="display:inline-block;transform:scaleX(.92);transform-origin:50% 50%">6.41</span></div><div style="left:164px;top:116px;width:66px;height:13px;background:#000;text-align:center;font-size:11px;line-height:13px;color:#fff;white-space:pre;overflow:hidden"><span style="display:inline-block;transform:scaleX(.92);transform-origin:50% 50%">4.12</span></div><div style="left:231px;top:116px;width:41px;height:13px;background:#000;text-align:center;font-size:11px;line-height:13px;color:#fff;white-space:pre;overflow:hidden"><span style="display:inline-block;transform:scaleX(.92);transform-origin:50% 50%"></span></div><div style="left:0px;top:130px;width:95.5px;height:13px;background:#000;text-align:left;padding-left:5px;font-size:11px;line-height:13px;color:#fff;white-space:pre;overflow:hidden"><span style="display:inline-block;transform:scaleX(.92);transform-origin:0 50%">Platinum 5% Irid</span></div><div style="left:96.5px;top:130px;width:66.5px;height:13px;background:#000;text-align:center;font-size:11px;line-height:13px;color:#fff;white-space:pre;overflow:hidden"><span style="display:inline-block;transform:scaleX(.92);transform-origin:50% 50%">6.4</span></div><div style="left:164px;top:130px;width:66px;height:13px;background:#000;text-align:center;font-size:11px;line-height:13px;color:#fff;white-space:pre;overflow:hidden"><span style="display:inline-block;transform:scaleX(.92);transform-origin:50% 50%">4.12</span></div><div style="left:231px;top:130px;width:41px;height:13px;background:#000;text-align:center;font-size:11px;line-height:13px;color:#fff;white-space:pre;overflow:hidden"><span style="display:inline-block;transform:scaleX(.92);transform-origin:50% 50%"></span></div><div style="left:0px;top:144px;width:95.5px;height:13px;background:#000;text-align:left;padding-left:5px;font-size:11px;line-height:13px;color:#fff;white-space:pre;overflow:hidden"><span style="display:inline-block;transform:scaleX(.92);transform-origin:0 50%">Silver, Pure</span></div><div style="left:96.5px;top:144px;width:66.5px;height:13px;background:#000;text-align:center;font-size:11px;line-height:13px;color:#fff;white-space:pre;overflow:hidden"><span style="display:inline-block;transform:scaleX(.92);transform-origin:50% 50%">3.12</span></div><div style="left:164px;top:144px;width:66px;height:13px;background:#000;text-align:center;font-size:11px;line-height:13px;color:#fff;white-space:pre;overflow:hidden"><span style="display:inline-block;transform:scaleX(.92);transform-origin:50% 50%">2.01</span></div><div style="left:231px;top:144px;width:41px;height:13px;background:#000;text-align:center;font-size:11px;line-height:13px;color:#fff;white-space:pre;overflow:hidden"><span style="display:inline-block;transform:scaleX(.92);transform-origin:50% 50%"></span></div><div style="left:0px;top:158px;width:95.5px;height:13px;background:#000;text-align:left;padding-left:5px;font-size:11px;line-height:13px;color:#fff;white-space:pre;overflow:hidden"><span style="display:inline-block;transform:scaleX(.92);transform-origin:0 50%">Silver, Sterling (9...</span></div><div style="left:96.5px;top:158px;width:66.5px;height:13px;background:#000;text-align:center;font-size:11px;line-height:13px;color:#fff;white-space:pre;overflow:hidden"><span style="display:inline-block;transform:scaleX(.92);transform-origin:50% 50%">3.09</span></div><div style="left:164px;top:158px;width:66px;height:13px;background:#000;text-align:center;font-size:11px;line-height:13px;color:#fff;white-space:pre;overflow:hidden"><span style="display:inline-block;transform:scaleX(.92);transform-origin:50% 50%">1.99</span></div><div style="left:231px;top:158px;width:41px;height:13px;background:#000;text-align:center;font-size:11px;line-height:13px;color:#fff;white-space:pre;overflow:hidden"><span style="display:inline-block;transform:scaleX(.92);transform-origin:50% 50%"></span></div><div style="left:0px;top:172px;width:95.5px;height:13px;background:#000;text-align:left;padding-left:5px;font-size:11px;line-height:13px;color:#fff;white-space:pre;overflow:hidden"><span style="display:inline-block;transform:scaleX(.92);transform-origin:0 50%">Silver, Coin (900)</span></div><div style="left:96.5px;top:172px;width:66.5px;height:13px;background:#000;text-align:center;font-size:11px;line-height:13px;color:#fff;white-space:pre;overflow:hidden"><span style="display:inline-block;transform:scaleX(.92);transform-origin:50% 50%">3.07</span></div><div style="left:164px;top:172px;width:66px;height:13px;background:#000;text-align:center;font-size:11px;line-height:13px;color:#fff;white-space:pre;overflow:hidden"><span style="display:inline-block;transform:scaleX(.92);transform-origin:50% 50%">1.97</span></div><div style="left:231px;top:172px;width:41px;height:13px;background:#000;text-align:center;font-size:11px;line-height:13px;color:#fff;white-space:pre;overflow:hidden"><span style="display:inline-block;transform:scaleX(.92);transform-origin:50% 50%"></span></div></div>
<div style="left:1631px;top:86px;width:17px;height:177px;"><svg width="17" height="177" viewBox="0 0 17 177"><rect width="17" height="177" fill="#f6f6f6"/><path d="M5 11 L8.5 7 L12 11Z" fill="#444"/><path d="M5 166 L12 166 L8.5 170Z" fill="#444"/>
<rect x="2.5" y="20.500" width="12" height="29" rx="2" fill="#e4e4e4" stroke="#b0b0b0"/><path d="M5.5 31.5h6M5.500 34.500h6M5.500 37.500h6" stroke="#888"/></svg></div>
<div style="left:1352px;top:274px;width:296px;height:27px;font-weight:bold;font-size:11.9px;line-height:13.5px;color:#f2c21c;text-align:center;letter-spacing:-.02px">Highlight the item you want to find the weight for<br>then press go.</div>
<div style="left:1438px;top:310px;width:105px;height:16px;background:#3a3a3a;border:1px solid #1c1c1c;border-bottom-color:#6a6a6a;border-right-color:#6a6a6a;color:#e8e8e8;font-family:'DejaVu Sans',sans-serif;font-size:11.3px;line-height:14px;padding-left:2px;white-space:pre">Calculate</div>
<div style="left:1544px;top:309.5px;width:16px;height:16px;background:linear-gradient(135deg,#8ad85a 0,#4fae2c 35%,#2f8a18 100%);border:1px solid #2a6a18;border-top-color:#a6e880;border-left-color:#8fd868"><svg width="14" height="14" viewBox="0 0 14 14"><path d="M4.5 3 L10 7 L4.5 11Z" fill="#f0ffe0"/></svg></div>
<div style="left:1349px;top:357px;width:301px;height:27px;background:linear-gradient(90deg,rgba(0,0,0,0) 35%,rgba(0,0,0,.09) 100%),linear-gradient(#cdcdc7 0,#b9b9b3 50%,#9f9f99 100%);border-bottom:1px solid #55534c"></div>
<div style="left:1349px;top:357px;width:26px;height:27px;background:#4a4a48"><svg width="26" height="26" viewBox="0 0 26 26"><rect width="26" height="26" fill="#2c78b8"/><path d="M3 4h6M11 4h6M19 4h4M3 8h6M19 8h4M3 19h6M11 19h6M19 19h4M3 23h6M11 23h6M19 23h4M3 12h3M3 15h3" stroke="#e8f4ff" stroke-width="1.6"/>
<ellipse cx="14" cy="12" rx="8" ry="6" fill="#dfe6ee"/><ellipse cx="15" cy="13" rx="5" ry="3.5" fill="#fff"/></svg></div>
<div style="left:1496px;top:361px;width:1px;height:20px;background:#8a887e"></div>
<div style="left:1380px;top:358px;width:116px;height:14px;font-family:'DejaVu Sans',sans-serif;font-weight:bold;font-size:11px;line-height:13px;color:#000;letter-spacing:-.05px;white-space:pre">GEM REPORTER</div>
<div style="left:1632px;top:362px;width:14px;height:14px;background:#c9c7bf;border:1px solid #85837b;border-top-color:#eceae4;border-left-color:#ecebe4"><svg width="12" height="12" viewBox="0 0 12 12"><path d="M2.5 2.5 L9.5 9.5 M9.5 2.5 L2.5 9.5" stroke="#b83a3a" stroke-width="1.1"/></svg></div>
<div style="left:1355px;top:387.5px;width:145.5px;height:16px;background:#3a3a3a;border:1px solid #1a1a1a;border-bottom-color:#666;border-right-color:#666"></div>
<div style="left:1356px;top:388.5px;width:109px;height:14px;color:#eee;font-family:'DejaVu Sans',sans-serif;font-size:11.3px;line-height:14px;padding-left:2px;white-space:pre;letter-spacing:.1px">Total Gem Weight</div>
<div style="left:1465px;top:388.5px;width:34.5px;height:14px;background:#000;color:#4ec4d8;font-size:12px;line-height:14px;text-align:center">1.20</div>
<div style="left:1505px;top:387.5px;width:140px;height:16px;background:#3a3a3a;border:1px solid #1a1a1a;border-bottom-color:#666;border-right-color:#666"></div>
<div style="left:1506px;top:388.5px;width:103.5px;height:14px;color:#eee;font-family:'DejaVu Sans',sans-serif;font-size:11.3px;line-height:14px;padding-left:2px;white-space:pre;letter-spacing:.1px">Total Gem Count</div>
<div style="left:1609.5px;top:388.5px;width:34.5px;height:14px;background:#000;color:#4ec4d8;font-size:12px;line-height:14px;text-align:center">83</div>
<div style="left:1387px;top:413px;width:226px;height:1px;background:#111;border-bottom:1px solid #555;height:2px"></div>
<div style="left:1493.5px;top:407px;width:13px;height:13px;"><svg width="13" height="13" viewBox="0 0 13 13"><circle cx="6.500" cy="6.500" r="6" fill="#5a5a5a" stroke="#222"/><path d="M3.5 7.500 L6.500 4.500 L9.500 7.500Z" fill="#e8e8e8"/></svg></div>
<div style="left:1393px;top:423px;width:49px;height:15.5px;background:#3a3a3a;border:1px solid #1c1c1c;border-bottom-color:#6a6a6a;border-right-color:#6a6a6a;color:#e8e8e8;font-family:'DejaVu Sans',sans-serif;font-size:11.3px;line-height:13.5px;padding-left:2px;white-space:pre">Update</div>
<div style="left:1445px;top:423px;width:16px;height:15.5px;background:linear-gradient(135deg,#8ad85a 0,#4fae2c 35%,#2f8a18 100%);border:1px solid #2a6a18;border-top-color:#a6e880;border-left-color:#8fd868"><svg width="14" height="13.5" viewBox="0 0 14 13.5"><path d="M4.5 2.75 L10 6.75 L4.5 10.75Z" fill="#f0ffe0"/></svg></div>
<div style="left:1484px;top:423px;width:104.5px;height:15.5px;background:#3a3a3a;border:1px solid #1c1c1c;border-bottom-color:#6a6a6a;border-right-color:#6a6a6a;color:#e8e8e8;font-family:'DejaVu Sans',sans-serif;font-size:11.3px;line-height:13.5px;padding-left:2px;white-space:pre">Save Report</div>
<div style="left:1591px;top:423px;width:16px;height:15.5px;background:linear-gradient(135deg,#8ad85a 0,#4fae2c 35%,#2f8a18 100%);border:1px solid #2a6a18;border-top-color:#a6e880;border-left-color:#8fd868"><svg width="14" height="13.5" viewBox="0 0 14 13.5"><path d="M4.5 2.75 L10 6.75 L4.5 10.75Z" fill="#f0ffe0"/></svg></div>
<div style="left:1352px;top:442.5px;width:291px;height:297px;background:#545454;border:1px solid #666;border-top-color:#444;border-left-color:#444"></div>
<div style="left:1360px;top:449.5px;width:36px;height:32px;background:#3a3a3a;border:1px solid #c8c8c8"><svg width="34" height="30" viewBox="0 0 34 30"><ellipse cx="17" cy="15" rx="13" ry="11" fill="#7f86dc"/><ellipse cx="17" cy="13" rx="13" ry="9" fill="#a4aaf0"/><ellipse cx="19" cy="20" rx="9" ry="5" fill="#fff" transform="rotate(-15 19 20)"/></svg></div>
<div style="left:1395.5px;top:449.5px;width:119.5px;height:16.5px;font-family:'DejaVu Sans',sans-serif;font-size:11.3px;color:#f0f0f0;text-align:center;white-space:pre;background:#383838;border:1px solid #707070;line-height:14.5px;overflow:hidden">Diamond Round</div>
<div style="left:1514.5px;top:449.5px;width:102px;height:16.5px;font-family:'DejaVu Sans',sans-serif;font-size:11.3px;color:#f0f0f0;text-align:center;white-space:pre;background:#383838;border:1px solid #707070;line-height:14.5px;overflow:hidden">Diamond</div>
<div style="left:1395.5px;top:465.5px;width:119.5px;height:16.5px;font-family:'DejaVu Sans',sans-serif;font-size:11.3px;color:#f0f0f0;text-align:center;white-space:pre;background:#383838;border:1px solid #707070;line-height:14.5px;overflow:hidden">1.50 X 1.50</div>
<div style="left:1514.5px;top:465.5px;width:36px;height:16.5px;font-family:'DejaVu Sans',sans-serif;font-size:11.3px;color:#f0f0f0;text-align:center;white-space:pre;background:#383838;border:1px solid #707070;line-height:14.5px;overflow:hidden">14</div>
<div style="left:1550px;top:465.5px;width:50px;height:16.5px;font-family:'DejaVu Sans',sans-serif;font-size:11.3px;color:#f0f0f0;text-align:center;white-space:pre;background:#383838;border:1px solid #707070;line-height:14.5px;overflow:hidden">0.18tw</div>
<div style="left:1599.5px;top:465.5px;width:17px;height:16.5px;background:linear-gradient(135deg,#8ad85a 0,#4fae2c 35%,#2f8a18 100%);border:1px solid #2a6a18;border-top-color:#a6e880;border-left-color:#8fd868"><svg width="15" height="14.5" viewBox="0 0 15 14.5"><path d="M5 3.25 L10.5 7.25 L5 11.25Z" fill="#f0ffe0"/></svg></div>
<div style="left:1395.5px;top:481.5px;width:119.5px;height:16.5px;font-family:'DejaVu Sans',sans-serif;font-size:11.3px;color:#f0f0f0;text-align:center;white-space:pre;background:#383838;border:1px solid #707070;line-height:14.5px;overflow:hidden">1.00 X 1.00</div>
<div style="left:1514.5px;top:481.5px;width:36px;height:16.5px;font-family:'DejaVu Sans',sans-serif;font-size:11.3px;color:#f0f0f0;text-align:center;white-space:pre;background:#383838;border:1px solid #707070;line-height:14.5px;overflow:hidden">8</div>
<div style="left:1550px;top:481.5px;width:50px;height:16.5px;font-family:'DejaVu Sans',sans-serif;font-size:11.3px;color:#f0f0f0;text-align:center;white-space:pre;background:#383838;border:1px solid #707070;line-height:14.5px;overflow:hidden">0.029tw</div>
<div style="left:1599.5px;top:481.5px;width:17px;height:16.5px;background:linear-gradient(135deg,#8ad85a 0,#4fae2c 35%,#2f8a18 100%);border:1px solid #2a6a18;border-top-color:#a6e880;border-left-color:#8fd868"><svg width="15" height="14.5" viewBox="0 0 15 14.5"><path d="M5 3.25 L10.5 7.25 L5 11.25Z" fill="#f0ffe0"/></svg></div>
<div style="left:1395.5px;top:497.5px;width:119.5px;height:16.5px;font-family:'DejaVu Sans',sans-serif;font-size:11.3px;color:#f0f0f0;text-align:center;white-space:pre;background:#383838;border:1px solid #707070;line-height:14.5px;overflow:hidden">1.70 X 1.70</div>
<div style="left:1514.5px;top:497.5px;width:36px;height:16.5px;font-family:'DejaVu Sans',sans-serif;font-size:11.3px;color:#f0f0f0;text-align:center;white-space:pre;background:#383838;border:1px solid #707070;line-height:14.5px;overflow:hidden">6</div>
<div style="left:1550px;top:497.5px;width:50px;height:16.5px;font-family:'DejaVu Sans',sans-serif;font-size:11.3px;color:#f0f0f0;text-align:center;white-space:pre;background:#383838;border:1px solid #707070;line-height:14.5px;overflow:hidden">0.11tw</div>
<div style="left:1599.5px;top:497.5px;width:17px;height:16.5px;background:linear-gradient(135deg,#8ad85a 0,#4fae2c 35%,#2f8a18 100%);border:1px solid #2a6a18;border-top-color:#a6e880;border-left-color:#8fd868"><svg width="15" height="14.5" viewBox="0 0 15 14.5"><path d="M5 3.25 L10.5 7.25 L5 11.25Z" fill="#f0ffe0"/></svg></div>
<div style="left:1395.5px;top:513.5px;width:119.5px;height:16.5px;font-family:'DejaVu Sans',sans-serif;font-size:11.3px;color:#f0f0f0;text-align:center;white-space:pre;background:#383838;border:1px solid #707070;line-height:14.5px;overflow:hidden">1.20 X 1.20</div>
<div style="left:1514.5px;top:513.5px;width:36px;height:16.5px;font-family:'DejaVu Sans',sans-serif;font-size:11.3px;color:#f0f0f0;text-align:center;white-space:pre;background:#383838;border:1px solid #707070;line-height:14.5px;overflow:hidden">52</div>
<div style="left:1550px;top:513.5px;width:50px;height:16.5px;font-family:'DejaVu Sans',sans-serif;font-size:11.3px;color:#f0f0f0;text-align:center;white-space:pre;background:#383838;border:1px solid #707070;line-height:14.5px;overflow:hidden">0.34tw</div>
<div style="left:1599.5px;top:513.5px;width:17px;height:16.5px;background:linear-gradient(135deg,#8ad85a 0,#4fae2c 35%,#2f8a18 100%);border:1px solid #2a6a18;border-top-color:#a6e880;border-left-color:#8fd868"><svg width="15" height="14.5" viewBox="0 0 15 14.5"><path d="M5 3.25 L10.5 7.25 L5 11.25Z" fill="#f0ffe0"/></svg></div>
<div style="left:1395.5px;top:529.5px;width:119.5px;height:16.5px;font-family:'DejaVu Sans',sans-serif;font-size:11.3px;color:#f0f0f0;text-align:center;white-space:pre;background:#383838;border:1px solid #707070;line-height:14.5px;overflow:hidden">5.20 X 5.20</div>
<div style="left:1514.5px;top:529.5px;width:36px;height:16.5px;font-family:'DejaVu Sans',sans-serif;font-size:11.3px;color:#f0f0f0;text-align:center;white-space:pre;background:#383838;border:1px solid #707070;line-height:14.5px;overflow:hidden">1</div>
<div style="left:1550px;top:529.5px;width:50px;height:16.5px;font-family:'DejaVu Sans',sans-serif;font-size:11.3px;color:#f0f0f0;text-align:center;white-space:pre;background:#383838;border:1px solid #707070;line-height:14.5px;overflow:hidden">0.51tw</div>
<div style="left:1599.5px;top:529.5px;width:17px;height:16.5px;background:linear-gradient(135deg,#8ad85a 0,#4fae2c 35%,#2f8a18 100%);border:1px solid #2a6a18;border-top-color:#a6e880;border-left-color:#8fd868"><svg width="15" height="14.5" viewBox="0 0 15 14.5"><path d="M5 3.25 L10.5 7.25 L5 11.25Z" fill="#f0ffe0"/></svg></div>
<div style="left:1360px;top:549.5px;width:36px;height:32px;background:#3a3a3a;border:1px solid #c8c8c8"><svg width="34" height="30" viewBox="0 0 34 30"><path d="M4 16 L17 4 L30 9 L24 24 L9 26Z" fill="#5a62c8"/><path d="M8 15 L18 6 L28 10 L22 21 L11 22Z" fill="#a8b0f4"/><path d="M12 15 L19 9 L25 12 L20 19Z" fill="#e8ecff"/></svg></div>
<div style="left:1395.5px;top:549.5px;width:119.5px;height:16.5px;font-family:'DejaVu Sans',sans-serif;font-size:11.3px;color:#f0f0f0;text-align:center;white-space:pre;background:#383838;border:1px solid #707070;line-height:14.5px;overflow:hidden">Diamond Princess</div>
<div style="left:1514.5px;top:549.5px;width:102px;height:16.5px;font-family:'DejaVu Sans',sans-serif;font-size:11.3px;color:#f0f0f0;text-align:center;white-space:pre;background:#383838;border:1px solid #707070;line-height:14.5px;overflow:hidden">Diamond</div>
<div style="left:1395.5px;top:565.5px;width:119.5px;height:16.5px;font-family:'DejaVu Sans',sans-serif;font-size:11.3px;color:#f0f0f0;text-align:center;white-space:pre;background:#383838;border:1px solid #707070;line-height:14.5px;overflow:hidden">1.50 X 1.50</div>
<div style="left:1514.5px;top:565.5px;width:36px;height:16.5px;font-family:'DejaVu Sans',sans-serif;font-size:11.3px;color:#f0f0f0;text-align:center;white-space:pre;background:#383838;border:1px solid #707070;line-height:14.5px;overflow:hidden">2</div>
<div style="left:1550px;top:565.5px;width:50px;height:16.5px;font-family:'DejaVu Sans',sans-serif;font-size:11.3px;color:#f0f0f0;text-align:center;white-space:pre;background:#383838;border:1px solid #707070;line-height:14.5px;overflow:hidden">0.039tw</div>
<div style="left:1599.5px;top:565.5px;width:17px;height:16.5px;background:linear-gradient(135deg,#8ad85a 0,#4fae2c 35%,#2f8a18 100%);border:1px solid #2a6a18;border-top-color:#a6e880;border-left-color:#8fd868"><svg width="15" height="14.5" viewBox="0 0 15 14.5"><path d="M5 3.25 L10.5 7.25 L5 11.25Z" fill="#f0ffe0"/></svg></div>
<div style="left:1363px;top:745px;width:163px;height:21px;background:#c8c8c8;border:2px solid #f2f2f2;border-right-color:#fff;border-bottom-color:#fff;outline:1px solid #888"><div style="left:2px;top:2px;width:144px;height:17px;font-size:11px;line-height:17px;color:#000;white-space:pre;padding-left:2px"><span style="display:inline-block;transform:scaleX(.9);transform-origin:0 50%">Diamond      (3.52 spg)</span></div><div style="left:144px;top:2px;width:16px;height:17px;background:#f0f0f0;border:1px solid #999"><svg width="14" height="15" viewBox="0 0 14 15"><path d="M3 6 L11 6 L7 10.500Z" fill="#000"/></svg></div></div>
<div style="left:1535.5px;top:749.5px;width:76px;height:14.5px;background:#3a3a3a;border:1px solid #1c1c1c;border-bottom-color:#6a6a6a;border-right-color:#6a6a6a;color:#e8e8e8;font-family:'DejaVu Sans',sans-serif;font-size:11.3px;line-height:12.5px;padding-left:2px;white-space:pre">Set Material</div>
<div style="left:1614px;top:749px;width:16px;height:15.5px;background:linear-gradient(135deg,#8ad85a 0,#4fae2c 35%,#2f8a18 100%);border:1px solid #2a6a18;border-top-color:#a6e880;border-left-color:#8fd868"><svg width="14" height="13.5" viewBox="0 0 14 13.5"><path d="M4.5 2.75 L10 6.75 L4.5 10.75Z" fill="#f0ffe0"/></svg></div>
<div style="left:1349px;top:781.5px;width:301px;height:25.5px;background:linear-gradient(90deg,rgba(0,0,0,0) 35%,rgba(0,0,0,.09) 100%),linear-gradient(#cdcdc7 0,#b9b9b3 50%,#9f9f99 100%);border-bottom:1px solid #55534c"></div>
<div style="left:1349px;top:781.5px;width:26px;height:25.5px;background:#4a4a48"><svg width="26" height="25" viewBox="0 0 26 25"><rect width="26" height="25" fill="#484848"/><circle cx="13" cy="13" r="9" fill="none" stroke="#2a60ff" stroke-width="3.2"/><circle cx="13" cy="13" r="9" fill="none" stroke="#9cc0ff" stroke-width="1"/></svg></div>
<div style="left:1496px;top:785.5px;width:1px;height:18.5px;background:#8a887e"></div>
<div style="left:1380px;top:781px;width:70px;height:26px;font-family:'DejaVu Sans',sans-serif;font-weight:bold;font-size:11px;line-height:13px;color:#000;letter-spacing:.05px;white-space:pre">RING
        RAIL</div>
<div style="left:1452.5px;top:785px;width:59.5px;height:16.5px;background:#333;border:1px solid #111;border-bottom-color:#888;border-right-color:#888;color:#e8e8e8;font-family:'DejaVu Sans',sans-serif;font-size:11px;line-height:15px;padding-left:2px">USA</div>
<div style="left:1517px;top:783px;width:68px;height:21px;background:#c8c8c8;border:2px solid #f2f2f2;outline:1px solid #888"><div style="left:2px;top:1px;font-size:12px;line-height:16px;color:#000">7</div><div style="left:49px;top:1px;width:16px;height:16px;background:#f0f0f0;border:1px solid #999"><svg width="14" height="14" viewBox="0 0 14 14"><path d="M3 5.500 L11 5.500 L7 10Z" fill="#000"/></svg></div></div>
<div style="left:1590.5px;top:785px;width:17px;height:15.5px;background:linear-gradient(135deg,#8ad85a 0,#4fae2c 35%,#2f8a18 100%);border:1px solid #2a6a18;border-top-color:#a6e880;border-left-color:#8fd868"><svg width="15" height="13.5" viewBox="0 0 15 13.5"><path d="M5 2.75 L10.5 6.75 L5 10.75Z" fill="#f0ffe0"/></svg></div>
<div style="left:1632px;top:786.5px;width:14px;height:13.5px;background:#c9c7bf;border:1px solid #85837b;border-top-color:#eceae4;border-left-color:#ecebe4"><svg width="12" height="11.5" viewBox="0 0 12 11.5"><path d="M2.5 2.5 L9.5 9 M9.5 2.5 L2.5 9" stroke="#b83a3a" stroke-width="1.1"/></svg></div>
<div style="left:1387px;top:817px;width:226px;height:1px;background:#111;border-bottom:1px solid #555;height:2px"></div>
<div style="left:1493.5px;top:811px;width:13px;height:13px;"><svg width="13" height="13" viewBox="0 0 13 13"><circle cx="6.500" cy="6.500" r="6" fill="#5a5a5a" stroke="#222"/><path d="M3.5 5 L9.500 5 L6.500 8Z" fill="#e8e8e8"/></svg></div>

</body>
</html>
